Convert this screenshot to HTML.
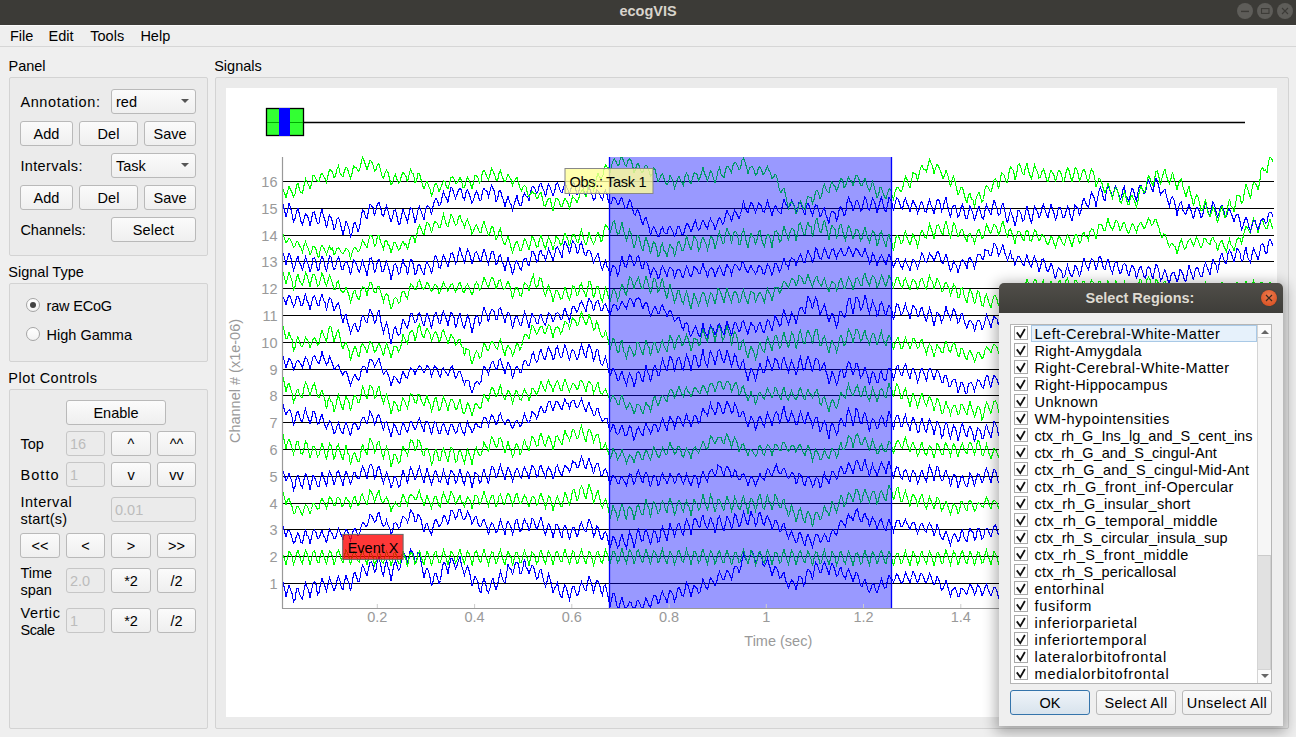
<!DOCTYPE html>
<html><head><meta charset="utf-8"><title>ecogVIS</title>
<style>
html,body{margin:0;padding:0;}
body{width:1296px;height:737px;overflow:hidden;position:relative;background:#efefef;font-family:"Liberation Sans", sans-serif;}
.t{position:absolute;white-space:nowrap;line-height:1;}
.tb{position:absolute;left:0;top:0;width:1296px;height:25px;background:#3c3b37;}
.mb{position:absolute;left:0;top:25px;width:1296px;height:22px;background:#efefef;border-top:1px solid #fafafa;border-bottom:1px solid #d6d6d6;box-sizing:border-box;}
.grp{position:absolute;box-sizing:border-box;border:1px solid #d3d3d3;border-radius:2px;background:#ebebeb;}
.btn{position:absolute;box-sizing:border-box;border:1px solid #b9b9b9;border-radius:3px;background:linear-gradient(#fbfbfb,#efefef);}
.fld{position:absolute;box-sizing:border-box;border:1px solid #c6c6c6;border-radius:3px;background:#ebebeb;}
.arr{position:absolute;width:0;height:0;border-left:5px solid transparent;border-right:5px solid transparent;border-top:5px solid #555;}
.wc{position:absolute;width:16px;height:16px;border-radius:50%;background:#5e5d59;top:3px;}
.radio{position:absolute;box-sizing:border-box;width:14px;height:14px;border-radius:50%;border:1px solid #a5a5a5;background:linear-gradient(#ffffff,#f3f3f3);}
</style></head><body>

<div class="tb"></div>
<div class="t" style="left:348.00px;width:600px;text-align:center;top:3.93px;font-size:14.5px;color:#d8d4cc;font-weight:bold;">ecogVIS</div>
<div class="wc" style="left:1237px"></div>
<div class="wc" style="left:1257px"></div>
<div class="wc" style="left:1277px"></div>
<svg style="position:absolute;left:0;top:0" width="1296" height="25"><line x1="1241" y1="11.4" x2="1249" y2="11.4" stroke="#3c3b37" stroke-width="1.4"/><rect x="1261.5" y="8.6" width="7.5" height="4.8" fill="none" stroke="#3c3b37" stroke-width="1.1"/><path d="M1282 8 L1288 14 M1288 8 L1282 14" stroke="#3c3b37" stroke-width="1.1"/></svg>
<div class="mb"></div>
<div class="t" style="left:10.00px;top:28.53px;font-size:14.5px;color:#000;font-weight:normal;">File</div>
<div class="t" style="left:48.60px;top:28.53px;font-size:14.5px;color:#000;font-weight:normal;">Edit</div>
<div class="t" style="left:90.30px;top:28.53px;font-size:14.5px;color:#000;font-weight:normal;">Tools</div>
<div class="t" style="left:140.40px;top:28.53px;font-size:14.5px;color:#000;font-weight:normal;">Help</div>
<div class="t" style="left:8.50px;top:58.73px;font-size:14.5px;color:#000;font-weight:normal;">Panel</div>
<div class="grp" style="left:9px;top:77px;width:199px;height:179px;"></div>
<div class="t" style="left:20.40px;top:94.73px;font-size:14.5px;color:#000;font-weight:normal;letter-spacing:0.62px;">Annotation:</div>
<div class="btn" style="left:111px;top:89px;width:85px;height:25px;"></div>
<div class="t" style="left:116.00px;top:95.33px;font-size:14.5px;color:#000;font-weight:normal;">red</div>
<div class="arr" style="left:180.5px;top:98.8px;border-left-width:4px;border-right-width:4px;border-top-width:4.3px;"></div>
<div class="btn" style="left:20px;top:121px;width:53px;height:25px;"></div>
<div class="t" style="left:-253.50px;width:600px;text-align:center;top:127.23px;font-size:14.5px;color:#000;font-weight:normal;">Add</div>
<div class="btn" style="left:79px;top:121px;width:59px;height:25px;"></div>
<div class="t" style="left:-191.50px;width:600px;text-align:center;top:127.23px;font-size:14.5px;color:#000;font-weight:normal;">Del</div>
<div class="btn" style="left:144px;top:121px;width:52px;height:25px;"></div>
<div class="t" style="left:-130.00px;width:600px;text-align:center;top:127.23px;font-size:14.5px;color:#000;font-weight:normal;">Save</div>
<div class="t" style="left:20.40px;top:158.63px;font-size:14.5px;color:#000;font-weight:normal;letter-spacing:0.36px;">Intervals:</div>
<div class="btn" style="left:111px;top:153px;width:85px;height:25px;"></div>
<div class="t" style="left:116.00px;top:159.33px;font-size:14.5px;color:#000;font-weight:normal;">Task</div>
<div class="arr" style="left:180.5px;top:162.8px;border-left-width:4px;border-right-width:4px;border-top-width:4.3px;"></div>
<div class="btn" style="left:20px;top:185px;width:53px;height:25px;"></div>
<div class="t" style="left:-253.50px;width:600px;text-align:center;top:191.23px;font-size:14.5px;color:#000;font-weight:normal;">Add</div>
<div class="btn" style="left:79px;top:185px;width:59px;height:25px;"></div>
<div class="t" style="left:-191.50px;width:600px;text-align:center;top:191.23px;font-size:14.5px;color:#000;font-weight:normal;">Del</div>
<div class="btn" style="left:144px;top:185px;width:52px;height:25px;"></div>
<div class="t" style="left:-130.00px;width:600px;text-align:center;top:191.23px;font-size:14.5px;color:#000;font-weight:normal;">Save</div>
<div class="t" style="left:20.40px;top:223.23px;font-size:14.5px;color:#000;font-weight:normal;">Channels:</div>
<div class="btn" style="left:111px;top:217px;width:85px;height:25px;"></div>
<div class="t" style="left:-146.50px;width:600px;text-align:center;top:223.23px;font-size:14.5px;color:#000;font-weight:normal;letter-spacing:0.24px;">Select</div>
<div class="t" style="left:8.30px;top:265.13px;font-size:14.5px;color:#000;font-weight:normal;">Signal Type</div>
<div class="grp" style="left:9px;top:283px;width:199px;height:79px;"></div>
<div class="radio" style="left:26px;top:298px"></div>
<div style="position:absolute;left:30px;top:302px;width:6px;height:6px;border-radius:50%;background:#444"></div>
<div class="t" style="left:46.60px;top:299.13px;font-size:14.5px;color:#000;font-weight:normal;letter-spacing:-0.20px;">raw ECoG</div>
<div class="radio" style="left:26px;top:327px"></div>
<div class="t" style="left:46.60px;top:328.13px;font-size:14.5px;color:#000;font-weight:normal;">High Gamma</div>
<div class="t" style="left:8.30px;top:370.63px;font-size:14.5px;color:#000;font-weight:normal;letter-spacing:0.47px;">Plot Controls</div>
<div class="grp" style="left:9px;top:389px;width:199px;height:340px;"></div>
<div class="btn" style="left:66px;top:400px;width:100px;height:25px;"></div>
<div class="t" style="left:-184.00px;width:600px;text-align:center;top:406.23px;font-size:14.5px;color:#000;font-weight:normal;">Enable</div>
<div class="t" style="left:20.40px;top:436.73px;font-size:14.5px;color:#000;font-weight:normal;">Top</div>
<div class="fld" style="left:66px;top:431px;width:39px;height:25px;"></div>
<div class="t" style="left:70.00px;top:437.03px;font-size:14.5px;color:#bcbcbc;font-weight:normal;">16</div>
<div class="btn" style="left:111px;top:431px;width:40px;height:25px;"></div>
<div class="t" style="left:-169.00px;width:600px;text-align:center;top:437.23px;font-size:14.5px;color:#000;font-weight:normal;">^</div>
<div class="btn" style="left:157px;top:431px;width:39px;height:25px;"></div>
<div class="t" style="left:-123.50px;width:600px;text-align:center;top:437.23px;font-size:14.5px;color:#000;font-weight:normal;">^^</div>
<div class="t" style="left:20.40px;top:468.13px;font-size:14.5px;color:#000;font-weight:normal;letter-spacing:1.11px;">Botto</div>
<div class="fld" style="left:66px;top:462px;width:39px;height:25px;"></div>
<div class="t" style="left:70.00px;top:468.03px;font-size:14.5px;color:#bcbcbc;font-weight:normal;">1</div>
<div class="btn" style="left:111px;top:462px;width:40px;height:25px;"></div>
<div class="t" style="left:-169.00px;width:600px;text-align:center;top:468.23px;font-size:14.5px;color:#000;font-weight:normal;">v</div>
<div class="btn" style="left:157px;top:462px;width:39px;height:25px;"></div>
<div class="t" style="left:-123.50px;width:600px;text-align:center;top:468.23px;font-size:14.5px;color:#000;font-weight:normal;">vv</div>
<div class="t" style="left:20.40px;top:494.73px;font-size:14.5px;color:#000;font-weight:normal;letter-spacing:0.54px;">Interval</div>
<div class="t" style="left:20.40px;top:511.83px;font-size:14.5px;color:#000;font-weight:normal;letter-spacing:0.24px;">start(s)</div>
<div class="fld" style="left:111px;top:497px;width:85px;height:25px;"></div>
<div class="t" style="left:115.00px;top:503.03px;font-size:14.5px;color:#bcbcbc;font-weight:normal;">0.01</div>
<div class="btn" style="left:20px;top:533px;width:40px;height:25px;"></div>
<div class="t" style="left:-260.00px;width:600px;text-align:center;top:539.23px;font-size:14.5px;color:#000;font-weight:normal;">&lt;&lt;</div>
<div class="btn" style="left:66px;top:533px;width:39px;height:25px;"></div>
<div class="t" style="left:-214.50px;width:600px;text-align:center;top:539.23px;font-size:14.5px;color:#000;font-weight:normal;">&lt;</div>
<div class="btn" style="left:111px;top:533px;width:40px;height:25px;"></div>
<div class="t" style="left:-169.00px;width:600px;text-align:center;top:539.23px;font-size:14.5px;color:#000;font-weight:normal;">&gt;</div>
<div class="btn" style="left:157px;top:533px;width:39px;height:25px;"></div>
<div class="t" style="left:-123.50px;width:600px;text-align:center;top:539.23px;font-size:14.5px;color:#000;font-weight:normal;">&gt;&gt;</div>
<div class="t" style="left:20.40px;top:565.53px;font-size:14.5px;color:#000;font-weight:normal;">Time</div>
<div class="t" style="left:20.40px;top:582.63px;font-size:14.5px;color:#000;font-weight:normal;">span</div>
<div class="fld" style="left:66px;top:568px;width:39px;height:25px;"></div>
<div class="t" style="left:70.00px;top:574.03px;font-size:14.5px;color:#bcbcbc;font-weight:normal;">2.0</div>
<div class="btn" style="left:111px;top:568px;width:40px;height:25px;"></div>
<div class="t" style="left:-169.00px;width:600px;text-align:center;top:574.23px;font-size:14.5px;color:#000;font-weight:normal;">*2</div>
<div class="btn" style="left:157px;top:568px;width:39px;height:25px;"></div>
<div class="t" style="left:-123.50px;width:600px;text-align:center;top:574.23px;font-size:14.5px;color:#000;font-weight:normal;">/2</div>
<div class="t" style="left:20.40px;top:606.23px;font-size:14.5px;color:#000;font-weight:normal;letter-spacing:0.67px;">Vertic</div>
<div class="t" style="left:20.40px;top:623.13px;font-size:14.5px;color:#000;font-weight:normal;letter-spacing:-0.42px;">Scale</div>
<div class="fld" style="left:66px;top:608px;width:39px;height:25px;"></div>
<div class="t" style="left:70.00px;top:614.03px;font-size:14.5px;color:#bcbcbc;font-weight:normal;">1</div>
<div class="btn" style="left:111px;top:608px;width:40px;height:25px;"></div>
<div class="t" style="left:-169.00px;width:600px;text-align:center;top:614.23px;font-size:14.5px;color:#000;font-weight:normal;">*2</div>
<div class="btn" style="left:157px;top:608px;width:39px;height:25px;"></div>
<div class="t" style="left:-123.50px;width:600px;text-align:center;top:614.23px;font-size:14.5px;color:#000;font-weight:normal;">/2</div>
<div class="t" style="left:214.20px;top:59.13px;font-size:14.5px;color:#000;font-weight:normal;">Signals</div>
<div class="grp" style="left:215px;top:77px;width:1074px;height:652px;"></div>
<svg style="position:absolute;left:0;top:0" width="1296" height="737">
<rect x="226" y="88" width="1051" height="629" fill="#ffffff"/>
<line x1="303" y1="122.5" x2="1245" y2="122.5" stroke="#000" stroke-width="1.3"/>
<rect x="266.5" y="108.5" width="37" height="27" fill="#33ff33" stroke="#000" stroke-width="1.3"/>
<line x1="267" y1="122.5" x2="279" y2="122.5" stroke="#00aa00" stroke-width="1"/>
<line x1="290" y1="122.5" x2="303" y2="122.5" stroke="#00aa00" stroke-width="1"/>
<rect x="279" y="108" width="11" height="28" fill="#0000ff"/>
<line x1="282.5" y1="583.50" x2="1274.0" y2="583.50" stroke="#000" stroke-width="1.0" shape-rendering="crispEdges"/>
<line x1="282.5" y1="556.50" x2="1274.0" y2="556.50" stroke="#000" stroke-width="1.0" shape-rendering="crispEdges"/>
<line x1="282.5" y1="529.50" x2="1274.0" y2="529.50" stroke="#000" stroke-width="1.0" shape-rendering="crispEdges"/>
<line x1="282.5" y1="503.50" x2="1274.0" y2="503.50" stroke="#000" stroke-width="1.0" shape-rendering="crispEdges"/>
<line x1="282.5" y1="476.50" x2="1274.0" y2="476.50" stroke="#000" stroke-width="1.0" shape-rendering="crispEdges"/>
<line x1="282.5" y1="449.50" x2="1274.0" y2="449.50" stroke="#000" stroke-width="1.0" shape-rendering="crispEdges"/>
<line x1="282.5" y1="422.50" x2="1274.0" y2="422.50" stroke="#000" stroke-width="1.0" shape-rendering="crispEdges"/>
<line x1="282.5" y1="395.50" x2="1274.0" y2="395.50" stroke="#000" stroke-width="1.0" shape-rendering="crispEdges"/>
<line x1="282.5" y1="369.50" x2="1274.0" y2="369.50" stroke="#000" stroke-width="1.0" shape-rendering="crispEdges"/>
<line x1="282.5" y1="342.50" x2="1274.0" y2="342.50" stroke="#000" stroke-width="1.0" shape-rendering="crispEdges"/>
<line x1="282.5" y1="315.50" x2="1274.0" y2="315.50" stroke="#000" stroke-width="1.0" shape-rendering="crispEdges"/>
<line x1="282.5" y1="288.50" x2="1274.0" y2="288.50" stroke="#000" stroke-width="1.0" shape-rendering="crispEdges"/>
<line x1="282.5" y1="261.50" x2="1274.0" y2="261.50" stroke="#000" stroke-width="1.0" shape-rendering="crispEdges"/>
<line x1="282.5" y1="235.50" x2="1274.0" y2="235.50" stroke="#000" stroke-width="1.0" shape-rendering="crispEdges"/>
<line x1="282.5" y1="208.50" x2="1274.0" y2="208.50" stroke="#000" stroke-width="1.0" shape-rendering="crispEdges"/>
<line x1="282.5" y1="181.50" x2="1274.0" y2="181.50" stroke="#000" stroke-width="1.0" shape-rendering="crispEdges"/>
<path d="M283.0 582.5 L284.5 588.1 L286.0 596.7 L287.5 590.8 L289.0 585.1 L290.5 589.6 L292.0 593.2 L293.5 601.7 L295.0 599.4 L296.5 588.8 L298.0 588.4 L299.5 593.6 L301.0 597.0 L302.5 599.2 L304.0 590.0 L305.5 583.0 L307.0 587.2 L308.5 589.7 L310.0 597.4 L311.5 590.5 L313.0 583.2 L314.5 581.5 L316.0 584.6 L317.5 594.7 L319.0 592.5 L320.5 583.7 L322.0 578.4 L323.5 583.1 L325.0 586.3 L326.5 591.2 L328.0 584.5 L329.5 577.7 L331.0 581.8 L332.5 586.4 L334.0 590.7 L335.5 587.6 L337.0 580.6 L338.5 576.3 L340.0 581.0 L341.5 588.1 L343.0 589.5 L344.5 581.4 L346.0 575.5 L347.5 579.6 L349.0 584.0 L350.5 590.8 L352.0 583.3 L353.5 574.4 L355.0 572.2 L356.5 576.8 L358.0 581.7 L359.5 581.2 L361.0 572.0 L362.5 564.8 L364.0 567.8 L365.5 572.5 L367.0 576.0 L368.5 568.6 L370.0 562.4 L371.5 561.8 L373.0 565.5 L374.5 572.3 L376.0 570.0 L377.5 559.6 L379.0 557.5 L380.5 563.8 L382.0 572.2 L383.5 575.6 L385.0 566.4 L386.5 559.9 L388.0 566.9 L389.5 571.0 L391.0 581.0 L392.5 572.6 L394.0 564.4 L395.5 560.6 L397.0 565.7 L398.5 570.3 L400.0 568.1 L401.5 559.5 L403.0 551.7 L404.5 554.3 L406.0 557.1 L407.5 561.8 L409.0 557.0 L410.5 548.9 L412.0 551.7 L413.5 553.7 L415.0 562.3 L416.5 561.3 L418.0 552.4 L419.5 552.1 L421.0 561.4 L422.5 569.7 L424.0 577.7 L425.5 571.3 L427.0 568.0 L428.5 570.7 L430.0 577.5 L431.5 586.2 L433.0 581.5 L434.5 573.2 L436.0 573.7 L437.5 577.9 L439.0 583.4 L440.5 580.5 L442.0 569.6 L443.5 562.4 L445.0 563.6 L446.5 567.3 L448.0 574.3 L449.5 564.8 L451.0 558.4 L452.5 559.0 L454.0 563.3 L455.5 569.1 L457.0 565.5 L458.5 560.3 L460.0 555.9 L461.5 565.6 L463.0 570.1 L464.5 574.8 L466.0 570.1 L467.5 566.3 L469.0 570.2 L470.5 576.8 L472.0 586.1 L473.5 581.4 L475.0 576.4 L476.5 578.7 L478.0 582.5 L479.5 591.6 L481.0 592.3 L482.5 583.2 L484.0 578.6 L485.5 582.9 L487.0 590.3 L488.5 592.9 L490.0 587.9 L491.5 580.9 L493.0 578.0 L494.5 584.4 L496.0 589.9 L497.5 585.1 L499.0 577.6 L500.5 571.5 L502.0 576.9 L503.5 581.6 L505.0 582.5 L506.5 574.9 L508.0 563.8 L509.5 568.8 L511.0 569.1 L512.5 574.9 L514.0 568.9 L515.5 562.3 L517.0 562.4 L518.5 564.2 L520.0 573.6 L521.5 573.4 L523.0 567.1 L524.5 558.8 L526.0 567.2 L527.5 568.8 L529.0 574.2 L530.5 569.1 L532.0 565.6 L533.5 566.3 L535.0 572.6 L536.5 579.4 L538.0 577.7 L539.5 570.6 L541.0 569.2 L542.5 575.7 L544.0 581.9 L545.5 586.5 L547.0 581.4 L548.5 574.1 L550.0 578.9 L551.5 584.5 L553.0 593.2 L554.5 588.6 L556.0 585.8 L557.5 582.3 L559.0 590.9 L560.5 596.2 L562.0 597.7 L563.5 588.9 L565.0 584.7 L566.5 588.4 L568.0 594.6 L569.5 599.6 L571.0 593.1 L572.5 586.4 L574.0 586.2 L575.5 591.9 L577.0 595.4 L578.5 594.4 L580.0 585.9 L581.5 581.7 L583.0 585.2 L584.5 589.4 L586.0 591.0 L587.5 583.1 L589.0 576.2 L590.5 580.6 L592.0 585.3 L593.5 593.4 L595.0 586.8 L596.5 580.3 L598.0 581.3 L599.5 584.2 L601.0 591.6 L602.5 595.1 L604.0 586.1 L605.5 585.0 L607.0 592.1 L608.5 598.7 L610.0 606.7 L611.5 599.8 L613.0 593.3 L614.5 593.5 L616.0 601.2 L617.5 608.0 L619.0 607.3 L620.5 601.4 L622.0 597.4 L623.5 603.7 L625.0 608.0 L626.5 608.0 L628.0 605.4 L629.5 601.8 L631.0 602.7 L632.5 607.6 L634.0 608.0 L635.5 608.0 L637.0 601.0 L638.5 600.5 L640.0 604.2 L641.5 608.0 L643.0 608.0 L644.5 602.8 L646.0 597.7 L647.5 601.6 L649.0 605.4 L650.5 608.0 L652.0 601.2 L653.5 596.2 L655.0 595.1 L656.5 596.9 L658.0 603.6 L659.5 601.7 L661.0 595.1 L662.5 591.5 L664.0 595.9 L665.5 597.5 L667.0 603.2 L668.5 595.4 L670.0 590.2 L671.5 591.8 L673.0 595.1 L674.5 601.8 L676.0 597.3 L677.5 589.5 L679.0 587.1 L680.5 590.9 L682.0 595.5 L683.5 596.3 L685.0 589.4 L686.5 582.5 L688.0 585.6 L689.5 590.5 L691.0 597.1 L692.5 590.3 L694.0 585.3 L695.5 586.9 L697.0 588.4 L698.5 593.5 L700.0 592.3 L701.5 585.0 L703.0 578.8 L704.5 583.5 L706.0 587.5 L707.5 589.5 L709.0 583.2 L710.5 578.0 L712.0 580.0 L713.5 581.9 L715.0 585.6 L716.5 583.1 L718.0 575.3 L719.5 571.7 L721.0 575.1 L722.5 579.6 L724.0 579.7 L725.5 575.1 L727.0 569.8 L728.5 572.0 L730.0 575.3 L731.5 579.6 L733.0 572.9 L734.5 566.8 L736.0 566.1 L737.5 567.5 L739.0 572.4 L740.5 569.2 L742.0 560.6 L743.5 553.6 L745.0 557.6 L746.5 560.1 L748.0 562.8 L749.5 557.9 L751.0 550.1 L752.5 551.2 L754.0 556.5 L755.5 562.1 L757.0 560.3 L758.5 554.1 L760.0 552.0 L761.5 555.6 L763.0 564.6 L764.5 565.8 L766.0 562.9 L767.5 558.3 L769.0 564.6 L770.5 569.2 L772.0 576.3 L773.5 571.0 L775.0 566.5 L776.5 567.8 L778.0 571.5 L779.5 578.0 L781.0 577.9 L782.5 574.2 L784.0 571.8 L785.5 580.7 L787.0 583.6 L788.5 587.9 L790.0 584.2 L791.5 580.1 L793.0 581.4 L794.5 584.3 L796.0 589.9 L797.5 583.5 L799.0 576.5 L800.5 576.4 L802.0 578.4 L803.5 585.4 L805.0 582.4 L806.5 572.8 L808.0 569.2 L809.5 570.6 L811.0 573.4 L812.5 580.3 L814.0 571.2 L815.5 562.2 L817.0 564.3 L818.5 568.6 L820.0 572.6 L821.5 572.0 L823.0 565.1 L824.5 561.9 L826.0 566.0 L827.5 569.4 L829.0 575.0 L830.5 567.5 L832.0 563.1 L833.5 565.7 L835.0 570.3 L836.5 576.5 L838.0 574.9 L839.5 568.9 L841.0 567.7 L842.5 574.0 L844.0 576.7 L845.5 578.9 L847.0 572.0 L848.5 569.5 L850.0 572.8 L851.5 576.7 L853.0 582.1 L854.5 576.9 L856.0 572.5 L857.5 573.4 L859.0 579.1 L860.5 585.7 L862.0 587.2 L863.5 582.1 L865.0 579.5 L866.5 584.2 L868.0 590.0 L869.5 592.3 L871.0 588.7 L872.5 583.6 L874.0 584.5 L875.5 589.9 L877.0 592.9 L878.5 588.3 L880.0 583.5 L881.5 578.8 L883.0 584.5 L884.5 588.2 L886.0 587.5 L887.5 580.4 L889.0 575.6 L890.5 577.9 L892.0 579.1 L893.5 582.0 L895.0 579.3 L896.5 573.5 L898.0 575.6 L899.5 579.6 L901.0 582.6 L902.5 583.2 L904.0 578.3 L905.5 572.4 L907.0 576.1 L908.5 579.4 L910.0 582.8 L911.5 577.5 L913.0 570.9 L914.5 574.0 L916.0 578.9 L917.5 582.5 L919.0 579.8 L920.5 573.6 L922.0 573.9 L923.5 576.7 L925.0 581.6 L926.5 582.6 L928.0 578.5 L929.5 573.2 L931.0 576.6 L932.5 581.4 L934.0 585.0 L935.5 582.2 L937.0 576.6 L938.5 578.7 L940.0 583.8 L941.5 590.5 L943.0 588.6 L944.5 584.9 L946.0 580.0 L947.5 585.5 L949.0 590.7 L950.5 596.2 L952.0 590.5 L953.5 588.9 L955.0 587.5 L956.5 591.3 L958.0 596.2 L959.5 596.1 L961.0 588.8 L962.5 588.9 L964.0 589.9 L965.5 593.0 L967.0 594.2 L968.5 588.3 L970.0 583.8 L971.5 586.2 L973.0 589.6 L974.5 594.6 L976.0 591.3 L977.5 584.7 L979.0 586.3 L980.5 588.8 L982.0 596.0 L983.5 592.6 L985.0 587.5 L986.5 584.0 L988.0 589.0 L989.5 592.7 L991.0 596.0 L992.5 591.5 L994.0 587.6 L995.5 587.7 L997.0 591.2 L998.5 597.3 L1000.0 593.1 L1001.5 587.5 L1003.0 583.8 L1004.5 586.7 L1006.0 590.9 L1007.5 592.9 L1009.0 588.3 L1010.5 582.6 L1012.0 585.6 L1013.5 588.1 L1015.0 593.7 L1016.5 588.3 L1018.0 578.0 L1019.5 581.7 L1021.0 584.8 L1022.5 590.3 L1024.0 587.0 L1025.5 581.9 L1027.0 577.6 L1028.5 581.2 L1030.0 585.8 L1031.5 588.6 L1033.0 584.7 L1034.5 579.3 L1036.0 578.0 L1037.5 585.6 L1039.0 587.1 L1040.5 584.9 L1042.0 581.4 L1043.5 579.1 L1045.0 584.9 L1046.5 584.5 L1048.0 589.8 L1049.5 584.4 L1051.0 578.9 L1052.5 581.4 L1054.0 586.1 L1055.5 592.0 L1057.0 587.5 L1058.5 584.8 L1060.0 583.9 L1061.5 586.3 L1063.0 589.9 L1064.5 590.9 L1066.0 585.7 L1067.5 580.5 L1069.0 584.5 L1070.5 586.5 L1072.0 588.9 L1073.5 582.5 L1075.0 579.2 L1076.5 581.0 L1078.0 580.3 L1079.5 586.2 L1081.0 582.4 L1082.5 577.5 L1084.0 574.0 L1085.5 577.2 L1087.0 582.2 L1088.5 585.3 L1090.0 578.4 L1091.5 571.8 L1093.0 575.4 L1094.5 579.3 L1096.0 583.9 L1097.5 579.2 L1099.0 574.2 L1100.5 572.6 L1102.0 579.1 L1103.5 584.4 L1105.0 583.9 L1106.5 577.0 L1108.0 575.5 L1109.5 576.9 L1111.0 582.0 L1112.5 586.6 L1114.0 580.2 L1115.5 575.8 L1117.0 576.9 L1118.5 584.0 L1120.0 588.7 L1121.5 587.2 L1123.0 582.1 L1124.5 577.6 L1126.0 582.9 L1127.5 587.0 L1129.0 588.8 L1130.5 586.1 L1132.0 580.4 L1133.5 582.3 L1135.0 582.9 L1136.5 592.3 L1138.0 589.5 L1139.5 582.4 L1141.0 583.8 L1142.5 585.8 L1144.0 591.2 L1145.5 588.9 L1147.0 580.9 L1148.5 577.2 L1150.0 578.3 L1151.5 582.7 L1153.0 587.0 L1154.5 583.2 L1156.0 578.6 L1157.5 577.0 L1159.0 580.8 L1160.5 588.6 L1162.0 582.9 L1163.5 577.5 L1165.0 573.4 L1166.5 578.4 L1168.0 583.8 L1169.5 587.7 L1171.0 581.8 L1172.5 576.5 L1174.0 580.2 L1175.5 582.7 L1177.0 589.1 L1178.5 583.5 L1180.0 579.1 L1181.5 578.4 L1183.0 582.6 L1184.5 585.6 L1186.0 586.9 L1187.5 580.8 L1189.0 578.6 L1190.5 582.5 L1192.0 586.2 L1193.5 589.8 L1195.0 586.5 L1196.5 577.7 L1198.0 580.1 L1199.5 582.4 L1201.0 588.2 L1202.5 585.3 L1204.0 580.4 L1205.5 579.2 L1207.0 580.9 L1208.5 583.9 L1210.0 589.3 L1211.5 582.6 L1213.0 577.2 L1214.5 580.3 L1216.0 583.5 L1217.5 588.7 L1219.0 584.5 L1220.5 577.7 L1222.0 577.0 L1223.5 583.6 L1225.0 589.5 L1226.5 588.4 L1228.0 580.2 L1229.5 579.3 L1231.0 580.8 L1232.5 586.5 L1234.0 588.9 L1235.5 583.8 L1237.0 576.7 L1238.5 580.5 L1240.0 581.9 L1241.5 587.1 L1243.0 586.3 L1244.5 579.2 L1246.0 575.4 L1247.5 577.1 L1249.0 581.7 L1250.5 584.2 L1252.0 578.8 L1253.5 571.5 L1255.0 574.9 L1256.5 579.2 L1258.0 586.2 L1259.5 583.9 L1261.0 578.0 L1262.5 574.9 L1264.0 580.5 L1265.5 586.5 L1267.0 588.7 L1268.5 581.5 L1270.0 579.5 L1271.5 583.1 L1273.0 586.2" fill="none" stroke="#0000ff" stroke-width="1.1" shape-rendering="crispEdges"/>
<path d="M283.0 554.9 L284.5 558.9 L286.0 564.6 L287.5 557.8 L289.0 551.7 L290.5 553.0 L292.0 557.1 L293.5 564.2 L295.0 560.3 L296.5 553.4 L298.0 550.3 L299.5 555.7 L301.0 560.8 L302.5 563.5 L304.0 555.6 L305.5 550.6 L307.0 553.3 L308.5 558.1 L310.0 564.7 L311.5 559.4 L313.0 552.1 L314.5 550.8 L316.0 556.1 L317.5 562.9 L319.0 562.3 L320.5 554.8 L322.0 550.2 L323.5 555.2 L325.0 559.3 L326.5 564.6 L328.0 557.5 L329.5 551.0 L331.0 552.6 L332.5 557.1 L334.0 564.4 L335.5 561.0 L337.0 552.7 L338.5 550.1 L340.0 554.5 L341.5 560.2 L343.0 562.6 L344.5 555.5 L346.0 549.7 L347.5 552.7 L349.0 557.4 L350.5 565.0 L352.0 557.8 L353.5 552.0 L355.0 551.9 L356.5 556.5 L358.0 561.2 L359.5 562.1 L361.0 554.4 L362.5 550.1 L364.0 554.8 L365.5 559.6 L367.0 564.9 L368.5 558.2 L370.0 552.3 L371.5 553.3 L373.0 557.7 L374.5 565.1 L376.0 561.4 L377.5 554.0 L379.0 551.2 L380.5 555.9 L382.0 561.9 L383.5 563.3 L385.0 556.9 L386.5 551.3 L388.0 555.1 L389.5 558.3 L391.0 566.0 L392.5 560.6 L394.0 552.9 L395.5 552.6 L397.0 557.6 L398.5 563.4 L400.0 563.3 L401.5 556.0 L403.0 551.7 L404.5 555.8 L406.0 560.0 L407.5 566.4 L409.0 558.6 L410.5 552.4 L412.0 553.3 L413.5 557.5 L415.0 564.2 L416.5 561.9 L418.0 553.9 L419.5 550.8 L421.0 556.4 L422.5 561.3 L424.0 564.5 L425.5 556.9 L427.0 551.0 L428.5 555.0 L430.0 558.7 L431.5 566.1 L433.0 559.9 L434.5 552.3 L436.0 551.6 L437.5 557.5 L439.0 562.3 L440.5 562.6 L442.0 555.3 L443.5 550.1 L445.0 554.6 L446.5 559.8 L448.0 564.7 L449.5 557.8 L451.0 551.7 L452.5 552.8 L454.0 556.9 L455.5 562.6 L457.0 560.0 L458.5 552.8 L460.0 549.7 L461.5 555.2 L463.0 559.6 L464.5 563.8 L466.0 556.0 L467.5 550.8 L469.0 553.7 L470.5 557.2 L472.0 565.4 L473.5 559.4 L475.0 552.4 L476.5 550.9 L478.0 555.4 L479.5 561.8 L481.0 562.1 L482.5 554.8 L484.0 549.4 L485.5 554.4 L487.0 559.6 L488.5 564.7 L490.0 558.3 L491.5 551.9 L493.0 552.3 L494.5 557.7 L496.0 563.3 L497.5 561.1 L499.0 553.7 L500.5 549.9 L502.0 555.5 L503.5 561.5 L505.0 564.5 L506.5 556.7 L508.0 550.9 L509.5 554.7 L511.0 557.7 L512.5 565.6 L514.0 559.7 L515.5 552.8 L517.0 552.1 L518.5 556.1 L520.0 562.4 L521.5 562.3 L523.0 555.2 L524.5 550.6 L526.0 555.0 L527.5 558.8 L529.0 565.4 L530.5 557.8 L532.0 551.8 L533.5 553.3 L535.0 557.4 L536.5 563.7 L538.0 561.3 L539.5 553.3 L541.0 549.8 L542.5 555.6 L544.0 560.7 L545.5 564.0 L547.0 556.2 L548.5 551.0 L550.0 554.0 L551.5 558.0 L553.0 564.5 L554.5 559.6 L556.0 552.3 L557.5 551.3 L559.0 555.8 L560.5 561.9 L562.0 561.9 L563.5 554.2 L565.0 549.3 L566.5 554.6 L568.0 558.9 L569.5 565.0 L571.0 558.6 L572.5 550.9 L574.0 552.1 L575.5 557.8 L577.0 564.0 L578.5 561.6 L580.0 553.8 L581.5 549.5 L583.0 554.9 L584.5 560.3 L586.0 563.5 L587.5 556.6 L589.0 551.4 L590.5 553.3 L592.0 558.4 L593.5 565.1 L595.0 560.2 L596.5 552.4 L598.0 551.1 L599.5 556.2 L601.0 561.7 L602.5 562.9 L604.0 555.5 L605.5 549.7 L607.0 553.5 L608.5 559.0 L610.0 564.1 L611.5 557.0 L613.0 551.2 L614.5 551.8 L616.0 556.5 L617.5 562.8 L619.0 560.7 L620.5 553.7 L622.0 548.5 L623.5 554.4 L625.0 559.3 L626.5 563.5 L628.0 555.6 L629.5 549.6 L631.0 552.2 L632.5 556.5 L634.0 564.2 L635.5 559.2 L637.0 551.8 L638.5 550.1 L640.0 555.5 L641.5 560.8 L643.0 562.2 L644.5 554.9 L646.0 549.6 L647.5 554.2 L649.0 558.3 L650.5 564.7 L652.0 557.4 L653.5 551.1 L655.0 552.0 L656.5 555.6 L658.0 562.9 L659.5 560.8 L661.0 553.7 L662.5 549.0 L664.0 555.5 L665.5 560.4 L667.0 563.7 L668.5 557.0 L670.0 550.9 L671.5 553.7 L673.0 558.0 L674.5 564.6 L676.0 559.9 L677.5 552.5 L679.0 550.0 L680.5 555.4 L682.0 560.9 L683.5 562.4 L685.0 554.9 L686.5 549.3 L688.0 554.6 L689.5 557.9 L691.0 564.4 L692.5 557.7 L694.0 551.3 L695.5 552.1 L697.0 556.5 L698.5 562.8 L700.0 561.1 L701.5 552.9 L703.0 549.1 L704.5 555.2 L706.0 559.5 L707.5 564.0 L709.0 556.8 L710.5 550.9 L712.0 553.0 L713.5 557.4 L715.0 564.3 L716.5 559.9 L718.0 553.3 L719.5 550.7 L721.0 556.2 L722.5 562.1 L724.0 562.7 L725.5 555.6 L727.0 549.9 L728.5 554.9 L730.0 558.5 L731.5 565.2 L733.0 559.6 L734.5 552.6 L736.0 552.2 L737.5 556.6 L739.0 562.4 L740.5 561.7 L742.0 553.9 L743.5 549.3 L745.0 555.2 L746.5 559.8 L748.0 563.9 L749.5 557.1 L751.0 550.5 L752.5 553.2 L754.0 557.5 L755.5 564.9 L757.0 560.5 L758.5 553.1 L760.0 551.1 L761.5 555.6 L763.0 561.1 L764.5 563.0 L766.0 554.9 L767.5 550.2 L769.0 554.1 L770.5 558.2 L772.0 564.8 L773.5 558.2 L775.0 552.0 L776.5 552.4 L778.0 556.1 L779.5 563.0 L781.0 562.2 L782.5 554.1 L784.0 549.3 L785.5 555.2 L787.0 560.1 L788.5 564.5 L790.0 557.5 L791.5 550.4 L793.0 553.2 L794.5 557.8 L796.0 565.0 L797.5 560.1 L799.0 552.9 L800.5 550.8 L802.0 555.9 L803.5 560.8 L805.0 562.6 L806.5 556.1 L808.0 550.8 L809.5 555.0 L811.0 559.1 L812.5 565.7 L814.0 558.8 L815.5 551.9 L817.0 552.6 L818.5 557.0 L820.0 563.5 L821.5 562.9 L823.0 554.8 L824.5 550.0 L826.0 555.9 L827.5 560.2 L829.0 564.7 L830.5 558.3 L832.0 551.7 L833.5 553.7 L835.0 557.6 L836.5 565.0 L838.0 560.9 L839.5 553.7 L841.0 550.9 L842.5 555.9 L844.0 561.5 L845.5 563.8 L847.0 556.1 L848.5 551.3 L850.0 555.2 L851.5 559.7 L853.0 565.7 L854.5 559.2 L856.0 553.4 L857.5 552.8 L859.0 557.3 L860.5 564.3 L862.0 562.9 L863.5 555.1 L865.0 550.4 L866.5 556.2 L868.0 560.4 L869.5 564.9 L871.0 557.8 L872.5 551.8 L874.0 554.3 L875.5 557.7 L877.0 564.0 L878.5 560.6 L880.0 552.8 L881.5 551.2 L883.0 555.4 L884.5 561.7 L886.0 563.6 L887.5 555.9 L889.0 550.9 L890.5 555.1 L892.0 559.1 L893.5 565.8 L895.0 559.0 L896.5 553.3 L898.0 553.3 L899.5 557.4 L901.0 563.7 L902.5 562.6 L904.0 555.3 L905.5 551.1 L907.0 556.0 L908.5 560.9 L910.0 565.6 L911.5 557.9 L913.0 551.2 L914.5 554.0 L916.0 558.0 L917.5 564.4 L919.0 561.6 L920.5 553.7 L922.0 551.2 L923.5 556.5 L925.0 560.8 L926.5 563.9 L928.0 556.9 L929.5 551.3 L931.0 554.7 L932.5 559.5 L934.0 565.5 L935.5 560.0 L937.0 552.9 L938.5 552.8 L940.0 557.4 L941.5 563.5 L943.0 563.0 L944.5 555.2 L946.0 549.8 L947.5 555.4 L949.0 559.9 L950.5 564.8 L952.0 558.2 L953.5 551.1 L955.0 553.3 L956.5 557.7 L958.0 564.4 L959.5 561.3 L961.0 553.3 L962.5 550.8 L964.0 555.6 L965.5 561.8 L967.0 564.1 L968.5 556.9 L970.0 551.2 L971.5 554.5 L973.0 559.0 L974.5 565.9 L976.0 559.7 L977.5 552.0 L979.0 552.2 L980.5 557.3 L982.0 563.2 L983.5 562.1 L985.0 554.7 L986.5 549.9 L988.0 555.3 L989.5 560.0 L991.0 564.8 L992.5 557.5 L994.0 551.3 L995.5 553.5 L997.0 557.6 L998.5 563.6 L1000.0 560.1 L1001.5 553.0 L1003.0 549.9 L1004.5 555.7 L1006.0 560.8 L1007.5 563.3 L1009.0 554.9 L1010.5 550.5 L1012.0 553.5 L1013.5 557.5 L1015.0 564.5 L1016.5 558.5 L1018.0 551.8 L1019.5 551.5 L1021.0 556.0 L1022.5 561.7 L1024.0 561.6 L1025.5 554.3 L1027.0 548.9 L1028.5 554.4 L1030.0 558.4 L1031.5 563.0 L1033.0 555.7 L1034.5 550.5 L1036.0 552.6 L1037.5 557.4 L1039.0 563.6 L1040.5 560.8 L1042.0 553.4 L1043.5 551.2 L1045.0 556.4 L1046.5 561.1 L1048.0 564.1 L1049.5 557.0 L1051.0 551.6 L1052.5 555.8 L1054.0 558.9 L1055.5 566.3 L1057.0 560.1 L1058.5 552.6 L1060.0 552.1 L1061.5 556.5 L1063.0 562.9 L1064.5 561.8 L1066.0 554.3 L1067.5 549.2 L1069.0 553.3 L1070.5 557.8 L1072.0 562.6 L1073.5 556.5 L1075.0 549.2 L1076.5 551.4 L1078.0 555.8 L1079.5 561.3 L1081.0 558.2 L1082.5 550.4 L1084.0 546.7 L1085.5 552.4 L1087.0 557.2 L1088.5 560.2 L1090.0 552.8 L1091.5 547.0 L1093.0 550.0 L1094.5 554.4 L1096.0 561.3 L1097.5 555.7 L1099.0 549.0 L1100.5 548.7 L1102.0 554.2 L1103.5 560.1 L1105.0 560.1 L1106.5 552.5 L1108.0 548.3 L1109.5 552.8 L1111.0 558.5 L1112.5 562.7 L1114.0 557.0 L1115.5 550.3 L1117.0 552.5 L1118.5 556.6 L1120.0 563.5 L1121.5 561.3 L1123.0 554.4 L1124.5 551.6 L1126.0 556.8 L1127.5 561.7 L1129.0 564.5 L1130.5 557.5 L1132.0 552.1 L1133.5 555.3 L1135.0 559.5 L1136.5 566.7 L1138.0 560.5 L1139.5 553.4 L1141.0 552.1 L1142.5 555.6 L1144.0 561.7 L1145.5 561.2 L1147.0 554.2 L1148.5 548.4 L1150.0 552.5 L1151.5 557.4 L1153.0 562.3 L1154.5 555.3 L1156.0 549.1 L1157.5 550.9 L1159.0 554.5 L1160.5 561.3 L1162.0 559.3 L1163.5 551.2 L1165.0 548.5 L1166.5 554.3 L1168.0 558.9 L1169.5 562.7 L1171.0 555.9 L1172.5 549.6 L1174.0 553.0 L1175.5 557.6 L1177.0 565.4 L1178.5 559.3 L1180.0 552.6 L1181.5 550.9 L1183.0 556.0 L1184.5 562.2 L1186.0 562.9 L1187.5 554.8 L1189.0 550.0 L1190.5 555.3 L1192.0 559.7 L1193.5 565.3 L1195.0 559.1 L1196.5 552.5 L1198.0 553.2 L1199.5 556.6 L1201.0 563.4 L1202.5 560.7 L1204.0 552.9 L1205.5 549.2 L1207.0 554.0 L1208.5 558.9 L1210.0 561.8 L1211.5 555.0 L1213.0 549.1 L1214.5 552.1 L1216.0 556.1 L1217.5 562.5 L1219.0 557.2 L1220.5 551.4 L1222.0 549.6 L1223.5 555.6 L1225.0 560.8 L1226.5 561.6 L1228.0 554.4 L1229.5 548.6 L1231.0 554.2 L1232.5 558.0 L1234.0 564.2 L1235.5 557.0 L1237.0 549.8 L1238.5 550.8 L1240.0 554.9 L1241.5 561.7 L1243.0 559.5 L1244.5 552.1 L1246.0 547.6 L1247.5 552.8 L1249.0 558.1 L1250.5 561.4 L1252.0 553.2 L1253.5 548.5 L1255.0 551.3 L1256.5 555.8 L1258.0 563.0 L1259.5 557.2 L1261.0 549.5 L1262.5 549.5 L1264.0 554.1 L1265.5 560.5 L1267.0 561.4 L1268.5 554.0 L1270.0 549.2 L1271.5 554.2 L1273.0 558.8" fill="none" stroke="#00ff00" stroke-width="1.1" shape-rendering="crispEdges"/>
<path d="M283.0 526.6 L284.5 531.9 L286.0 536.5 L287.5 531.1 L289.0 530.3 L290.5 532.9 L292.0 538.2 L293.5 543.4 L295.0 541.3 L296.5 536.0 L298.0 532.7 L299.5 536.7 L301.0 542.8 L302.5 543.1 L304.0 535.6 L305.5 529.2 L307.0 535.2 L308.5 536.4 L310.0 543.5 L311.5 537.2 L313.0 531.2 L314.5 529.9 L316.0 532.7 L317.5 538.7 L319.0 537.9 L320.5 534.2 L322.0 529.9 L323.5 536.1 L325.0 537.9 L326.5 543.0 L328.0 535.6 L329.5 529.5 L331.0 532.0 L332.5 534.3 L334.0 538.6 L335.5 538.6 L337.0 532.9 L338.5 528.7 L340.0 531.9 L341.5 535.9 L343.0 539.9 L344.5 533.7 L346.0 529.1 L347.5 531.0 L349.0 536.0 L350.5 540.3 L352.0 534.9 L353.5 529.7 L355.0 528.6 L356.5 531.5 L358.0 535.8 L359.5 534.6 L361.0 527.0 L362.5 522.4 L364.0 523.3 L365.5 526.1 L367.0 526.0 L368.5 521.3 L370.0 514.4 L371.5 515.4 L373.0 518.7 L374.5 522.0 L376.0 520.4 L377.5 514.5 L379.0 512.1 L380.5 518.6 L382.0 523.4 L383.5 526.3 L385.0 525.0 L386.5 520.2 L388.0 524.9 L389.5 527.7 L391.0 535.0 L392.5 531.0 L394.0 523.6 L395.5 522.5 L397.0 524.5 L398.5 528.5 L400.0 527.1 L401.5 520.7 L403.0 516.1 L404.5 517.2 L406.0 519.1 L407.5 522.3 L409.0 518.2 L410.5 509.6 L412.0 511.9 L413.5 514.1 L415.0 521.3 L416.5 521.4 L418.0 514.6 L419.5 515.6 L421.0 519.4 L422.5 527.0 L424.0 532.3 L425.5 524.8 L427.0 523.0 L428.5 527.5 L430.0 531.4 L431.5 534.9 L433.0 527.5 L434.5 521.7 L436.0 518.9 L437.5 522.4 L439.0 526.9 L440.5 525.2 L442.0 522.2 L443.5 515.4 L445.0 516.3 L446.5 520.6 L448.0 524.3 L449.5 518.4 L451.0 510.4 L452.5 510.5 L454.0 514.2 L455.5 519.0 L457.0 516.3 L458.5 510.1 L460.0 509.5 L461.5 514.1 L463.0 519.2 L464.5 519.3 L466.0 516.4 L467.5 511.1 L469.0 514.4 L470.5 517.5 L472.0 524.3 L473.5 520.7 L475.0 517.0 L476.5 516.6 L478.0 523.6 L479.5 526.3 L481.0 526.2 L482.5 521.4 L484.0 518.8 L485.5 523.6 L487.0 527.6 L488.5 535.1 L490.0 527.2 L491.5 523.0 L493.0 524.0 L494.5 528.5 L496.0 532.7 L497.5 531.3 L499.0 525.5 L500.5 519.8 L502.0 525.0 L503.5 529.3 L505.0 534.6 L506.5 524.8 L508.0 521.6 L509.5 524.0 L511.0 527.6 L512.5 534.2 L514.0 529.7 L515.5 520.7 L517.0 518.8 L518.5 525.5 L520.0 531.3 L521.5 530.7 L523.0 523.5 L524.5 519.2 L526.0 523.2 L527.5 524.1 L529.0 531.3 L530.5 526.2 L532.0 518.5 L533.5 519.1 L535.0 524.5 L536.5 529.2 L538.0 526.8 L539.5 521.3 L541.0 517.3 L542.5 523.0 L544.0 530.9 L545.5 534.5 L547.0 528.5 L548.5 523.7 L550.0 526.4 L551.5 530.2 L553.0 537.6 L554.5 531.2 L556.0 524.8 L557.5 524.7 L559.0 528.4 L560.5 534.8 L562.0 537.8 L563.5 528.0 L565.0 525.1 L566.5 528.4 L568.0 533.3 L569.5 540.3 L571.0 533.1 L572.5 527.7 L574.0 527.5 L575.5 531.9 L577.0 536.5 L578.5 533.4 L580.0 525.7 L581.5 522.1 L583.0 527.0 L584.5 530.8 L586.0 531.7 L587.5 524.6 L589.0 519.0 L590.5 522.3 L592.0 527.2 L593.5 536.7 L595.0 533.8 L596.5 525.9 L598.0 527.2 L599.5 533.7 L601.0 538.6 L602.5 539.6 L604.0 533.7 L605.5 531.6 L607.0 535.2 L608.5 542.9 L610.0 548.0 L611.5 543.1 L613.0 536.3 L614.5 538.0 L616.0 542.2 L617.5 547.9 L619.0 545.7 L620.5 538.1 L622.0 534.7 L623.5 540.5 L625.0 544.3 L626.5 548.4 L628.0 539.3 L629.5 531.8 L631.0 535.4 L632.5 539.7 L634.0 548.0 L635.5 542.1 L637.0 532.9 L638.5 529.3 L640.0 535.2 L641.5 541.4 L643.0 540.5 L644.5 532.5 L646.0 529.0 L647.5 533.3 L649.0 539.0 L650.5 544.7 L652.0 538.1 L653.5 530.7 L655.0 531.7 L656.5 535.4 L658.0 542.2 L659.5 540.8 L661.0 530.7 L662.5 526.6 L664.0 531.7 L665.5 535.6 L667.0 541.3 L668.5 531.4 L670.0 523.6 L671.5 528.7 L673.0 530.6 L674.5 536.5 L676.0 531.2 L677.5 524.8 L679.0 523.1 L680.5 527.6 L682.0 533.0 L683.5 535.3 L685.0 524.7 L686.5 519.0 L688.0 522.7 L689.5 526.7 L691.0 534.4 L692.5 526.9 L694.0 519.4 L695.5 518.6 L697.0 521.3 L698.5 526.8 L700.0 527.1 L701.5 518.1 L703.0 514.9 L704.5 522.4 L706.0 526.1 L707.5 528.8 L709.0 523.5 L710.5 516.8 L712.0 522.2 L713.5 524.0 L715.0 533.0 L716.5 527.2 L718.0 518.7 L719.5 516.0 L721.0 521.9 L722.5 527.8 L724.0 530.6 L725.5 523.3 L727.0 516.2 L728.5 518.8 L730.0 522.2 L731.5 529.1 L733.0 524.0 L734.5 514.1 L736.0 515.7 L737.5 521.6 L739.0 526.4 L740.5 525.2 L742.0 518.1 L743.5 512.1 L745.0 516.7 L746.5 522.7 L748.0 525.1 L749.5 518.2 L751.0 510.7 L752.5 516.3 L754.0 518.0 L755.5 526.0 L757.0 523.3 L758.5 514.0 L760.0 512.7 L761.5 517.1 L763.0 523.3 L764.5 524.9 L766.0 518.6 L767.5 515.8 L769.0 519.4 L770.5 522.2 L772.0 529.6 L773.5 526.0 L775.0 520.0 L776.5 521.1 L778.0 525.1 L779.5 531.4 L781.0 531.2 L782.5 524.3 L784.0 523.6 L785.5 529.3 L787.0 534.3 L788.5 538.7 L790.0 534.3 L791.5 530.7 L793.0 535.3 L794.5 539.1 L796.0 543.0 L797.5 541.8 L799.0 533.1 L800.5 532.7 L802.0 537.4 L803.5 543.0 L805.0 545.8 L806.5 538.0 L808.0 534.2 L809.5 538.1 L811.0 542.5 L812.5 547.2 L814.0 540.9 L815.5 535.0 L817.0 534.3 L818.5 536.1 L820.0 542.1 L821.5 541.9 L823.0 536.9 L824.5 534.3 L826.0 536.7 L827.5 541.5 L829.0 541.9 L830.5 534.5 L832.0 531.0 L833.5 529.7 L835.0 533.4 L836.5 535.2 L838.0 530.0 L839.5 523.2 L841.0 520.4 L842.5 521.9 L844.0 524.7 L845.5 527.0 L847.0 518.3 L848.5 514.5 L850.0 517.8 L851.5 517.1 L853.0 520.9 L854.5 515.3 L856.0 510.4 L857.5 508.6 L859.0 516.9 L860.5 521.1 L862.0 521.3 L863.5 515.5 L865.0 513.1 L866.5 517.9 L868.0 519.6 L869.5 526.8 L871.0 521.7 L872.5 517.1 L874.0 520.0 L875.5 522.5 L877.0 529.4 L878.5 524.3 L880.0 520.5 L881.5 519.2 L883.0 525.1 L884.5 529.6 L886.0 530.6 L887.5 523.6 L889.0 519.3 L890.5 524.0 L892.0 526.6 L893.5 531.9 L895.0 526.4 L896.5 520.6 L898.0 520.0 L899.5 521.2 L901.0 527.1 L902.5 526.5 L904.0 522.6 L905.5 519.3 L907.0 523.6 L908.5 525.9 L910.0 530.2 L911.5 523.7 L913.0 522.5 L914.5 522.4 L916.0 528.3 L917.5 533.5 L919.0 528.8 L920.5 524.4 L922.0 523.2 L923.5 526.8 L925.0 530.8 L926.5 532.4 L928.0 525.9 L929.5 522.9 L931.0 525.7 L932.5 529.4 L934.0 535.6 L935.5 531.6 L937.0 524.5 L938.5 527.9 L940.0 534.5 L941.5 538.1 L943.0 539.6 L944.5 534.7 L946.0 531.6 L947.5 534.8 L949.0 540.6 L950.5 545.0 L952.0 539.1 L953.5 534.3 L955.0 533.8 L956.5 537.6 L958.0 541.6 L959.5 540.1 L961.0 532.6 L962.5 529.8 L964.0 536.9 L965.5 540.3 L967.0 541.4 L968.5 533.5 L970.0 528.0 L971.5 531.9 L973.0 532.0 L974.5 540.3 L976.0 537.4 L977.5 528.8 L979.0 527.9 L980.5 533.2 L982.0 539.2 L983.5 537.5 L985.0 529.9 L986.5 528.5 L988.0 528.9 L989.5 534.3 L991.0 536.8 L992.5 531.3 L994.0 526.7 L995.5 524.7 L997.0 530.7 L998.5 534.9 L1000.0 534.6 L1001.5 526.7 L1003.0 524.6 L1004.5 532.6 L1006.0 535.5 L1007.5 537.3 L1009.0 530.9 L1010.5 524.4 L1012.0 526.6 L1013.5 529.7 L1015.0 538.1 L1016.5 530.2 L1018.0 523.6 L1019.5 524.8 L1021.0 527.7 L1022.5 532.1 L1024.0 531.4 L1025.5 526.9 L1027.0 520.1 L1028.5 524.2 L1030.0 528.8 L1031.5 535.7 L1033.0 529.7 L1034.5 524.8 L1036.0 524.5 L1037.5 529.0 L1039.0 535.0 L1040.5 532.0 L1042.0 525.7 L1043.5 524.1 L1045.0 530.8 L1046.5 534.6 L1048.0 537.8 L1049.5 529.5 L1051.0 526.7 L1052.5 528.2 L1054.0 532.6 L1055.5 541.6 L1057.0 534.1 L1058.5 526.0 L1060.0 526.4 L1061.5 528.5 L1063.0 532.6 L1064.5 534.0 L1066.0 524.3 L1067.5 518.6 L1069.0 523.8 L1070.5 527.4 L1072.0 532.0 L1073.5 527.4 L1075.0 519.6 L1076.5 519.4 L1078.0 526.7 L1079.5 533.5 L1081.0 530.8 L1082.5 522.9 L1084.0 521.3 L1085.5 525.3 L1087.0 529.2 L1088.5 534.8 L1090.0 524.5 L1091.5 519.7 L1093.0 523.4 L1094.5 525.9 L1096.0 532.1 L1097.5 527.2 L1099.0 520.9 L1100.5 519.3 L1102.0 524.5 L1103.5 529.3 L1105.0 532.7 L1106.5 524.9 L1108.0 519.7 L1109.5 525.8 L1111.0 529.0 L1112.5 534.9 L1114.0 529.4 L1115.5 525.3 L1117.0 526.3 L1118.5 531.4 L1120.0 538.9 L1121.5 537.9 L1123.0 527.3 L1124.5 526.5 L1126.0 528.5 L1127.5 535.7 L1129.0 535.7 L1130.5 529.5 L1132.0 525.7 L1133.5 529.5 L1135.0 532.2 L1136.5 538.8 L1138.0 531.9 L1139.5 522.2 L1141.0 521.9 L1142.5 527.7 L1144.0 533.1 L1145.5 532.7 L1147.0 524.9 L1148.5 518.3 L1150.0 521.1 L1151.5 525.8 L1153.0 530.5 L1154.5 524.3 L1156.0 515.0 L1157.5 518.8 L1159.0 524.1 L1160.5 533.5 L1162.0 529.6 L1163.5 522.9 L1165.0 519.6 L1166.5 526.0 L1168.0 532.4 L1169.5 535.0 L1171.0 528.5 L1172.5 522.5 L1174.0 525.6 L1175.5 530.0 L1177.0 540.1 L1178.5 532.5 L1180.0 524.5 L1181.5 524.7 L1183.0 532.3 L1184.5 536.8 L1186.0 536.5 L1187.5 530.0 L1189.0 524.5 L1190.5 529.5 L1192.0 537.2 L1193.5 542.9 L1195.0 533.6 L1196.5 526.1 L1198.0 529.3 L1199.5 532.5 L1201.0 537.1 L1202.5 536.7 L1204.0 528.2 L1205.5 524.7 L1207.0 529.4 L1208.5 533.8 L1210.0 536.2 L1211.5 529.0 L1213.0 521.4 L1214.5 522.9 L1216.0 527.5 L1217.5 535.2 L1219.0 527.6 L1220.5 523.5 L1222.0 521.8 L1223.5 523.7 L1225.0 530.2 L1226.5 532.1 L1228.0 525.2 L1229.5 521.7 L1231.0 528.6 L1232.5 532.8 L1234.0 542.2 L1235.5 532.3 L1237.0 524.4 L1238.5 526.5 L1240.0 533.7 L1241.5 535.9 L1243.0 535.8 L1244.5 528.3 L1246.0 522.3 L1247.5 526.7 L1249.0 530.8 L1250.5 533.8 L1252.0 528.1 L1253.5 523.6 L1255.0 525.5 L1256.5 529.6 L1258.0 536.4 L1259.5 530.3 L1261.0 523.4 L1262.5 521.0 L1264.0 526.8 L1265.5 532.1 L1267.0 535.1 L1268.5 527.6 L1270.0 522.5 L1271.5 526.8 L1273.0 531.1" fill="none" stroke="#0000ff" stroke-width="1.1" shape-rendering="crispEdges"/>
<path d="M283.0 492.5 L284.5 497.5 L286.0 504.4 L287.5 499.8 L289.0 498.4 L290.5 503.3 L292.0 506.7 L293.5 513.2 L295.0 513.0 L296.5 506.8 L298.0 506.6 L299.5 508.7 L301.0 512.6 L302.5 515.2 L304.0 508.9 L305.5 504.9 L307.0 506.1 L308.5 509.2 L310.0 514.1 L311.5 509.5 L313.0 502.9 L314.5 504.0 L316.0 506.5 L317.5 509.3 L319.0 508.4 L320.5 501.7 L322.0 498.7 L323.5 501.1 L325.0 504.4 L326.5 508.1 L328.0 502.8 L329.5 496.5 L331.0 498.7 L332.5 501.3 L334.0 506.0 L335.5 505.3 L337.0 497.9 L338.5 497.3 L340.0 499.3 L341.5 506.3 L343.0 505.9 L344.5 501.3 L346.0 497.4 L347.5 499.7 L349.0 501.6 L350.5 508.5 L352.0 503.4 L353.5 498.4 L355.0 496.0 L356.5 503.0 L358.0 505.7 L359.5 503.6 L361.0 495.9 L362.5 494.2 L364.0 499.1 L365.5 502.3 L367.0 505.2 L368.5 497.8 L370.0 489.8 L371.5 492.5 L373.0 496.0 L374.5 501.6 L376.0 497.8 L377.5 493.1 L379.0 490.7 L380.5 498.5 L382.0 502.0 L383.5 502.8 L385.0 499.1 L386.5 497.3 L388.0 500.6 L389.5 503.8 L391.0 511.8 L392.5 507.1 L394.0 504.8 L395.5 502.1 L397.0 504.7 L398.5 506.3 L400.0 506.4 L401.5 499.3 L403.0 494.4 L404.5 497.6 L406.0 501.6 L407.5 505.4 L409.0 497.7 L410.5 494.2 L412.0 495.4 L413.5 496.6 L415.0 499.6 L416.5 499.3 L418.0 494.2 L419.5 490.5 L421.0 497.7 L422.5 500.3 L424.0 505.5 L425.5 501.3 L427.0 494.9 L428.5 499.9 L430.0 503.1 L431.5 508.0 L433.0 501.9 L434.5 496.6 L436.0 496.1 L437.5 500.9 L439.0 505.8 L440.5 506.9 L442.0 497.8 L443.5 492.8 L445.0 496.6 L446.5 500.2 L448.0 503.5 L449.5 497.6 L451.0 491.3 L452.5 493.7 L454.0 497.7 L455.5 504.2 L457.0 501.4 L458.5 498.3 L460.0 495.5 L461.5 502.2 L463.0 502.7 L464.5 506.7 L466.0 501.8 L467.5 496.7 L469.0 498.9 L470.5 501.4 L472.0 508.8 L473.5 503.2 L475.0 495.2 L476.5 495.1 L478.0 498.1 L479.5 504.4 L481.0 502.2 L482.5 496.5 L484.0 491.7 L485.5 496.4 L487.0 501.6 L488.5 506.3 L490.0 499.9 L491.5 496.2 L493.0 494.9 L494.5 501.2 L496.0 506.7 L497.5 504.2 L499.0 496.2 L500.5 494.2 L502.0 499.1 L503.5 504.2 L505.0 504.2 L506.5 496.5 L508.0 493.7 L509.5 494.6 L511.0 500.5 L512.5 505.4 L514.0 501.4 L515.5 495.4 L517.0 492.9 L518.5 499.8 L520.0 503.3 L521.5 503.3 L523.0 498.6 L524.5 495.3 L526.0 497.3 L527.5 503.0 L529.0 506.8 L530.5 502.4 L532.0 497.1 L533.5 496.4 L535.0 499.0 L536.5 505.2 L538.0 503.4 L539.5 497.0 L541.0 493.0 L542.5 498.3 L544.0 502.2 L545.5 507.5 L547.0 501.9 L548.5 495.9 L550.0 497.6 L551.5 502.7 L553.0 510.7 L554.5 504.3 L556.0 499.8 L557.5 496.7 L559.0 501.1 L560.5 506.1 L562.0 507.0 L563.5 499.2 L565.0 492.7 L566.5 495.4 L568.0 501.2 L569.5 504.5 L571.0 499.3 L572.5 490.6 L574.0 489.2 L575.5 494.0 L577.0 501.1 L578.5 498.0 L580.0 488.9 L581.5 486.0 L583.0 489.0 L584.5 495.4 L586.0 498.4 L587.5 491.2 L589.0 484.0 L590.5 488.6 L592.0 493.7 L593.5 502.9 L595.0 499.0 L596.5 493.5 L598.0 490.3 L599.5 496.9 L601.0 505.2 L602.5 507.6 L604.0 502.2 L605.5 499.1 L607.0 502.9 L608.5 510.0 L610.0 518.4 L611.5 513.6 L613.0 505.2 L614.5 509.2 L616.0 512.4 L617.5 519.5 L619.0 515.5 L620.5 508.3 L622.0 504.5 L623.5 508.3 L625.0 515.3 L626.5 519.7 L628.0 508.9 L629.5 506.5 L631.0 508.4 L632.5 511.6 L634.0 519.6 L635.5 513.8 L637.0 506.5 L638.5 505.0 L640.0 509.9 L641.5 514.2 L643.0 514.4 L644.5 507.4 L646.0 498.8 L647.5 505.2 L649.0 508.8 L650.5 518.0 L652.0 508.4 L653.5 501.8 L655.0 502.9 L656.5 508.1 L658.0 513.7 L659.5 512.5 L661.0 504.2 L662.5 501.1 L664.0 503.9 L665.5 509.7 L667.0 512.7 L668.5 502.8 L670.0 498.5 L671.5 502.9 L673.0 507.2 L674.5 514.7 L676.0 511.2 L677.5 502.5 L679.0 500.6 L680.5 503.0 L682.0 509.2 L683.5 511.6 L685.0 504.4 L686.5 500.8 L688.0 505.7 L689.5 507.6 L691.0 515.9 L692.5 508.2 L694.0 499.3 L695.5 502.4 L697.0 503.8 L698.5 510.2 L700.0 508.1 L701.5 501.8 L703.0 493.9 L704.5 500.6 L706.0 506.1 L707.5 509.6 L709.0 503.1 L710.5 494.7 L712.0 498.7 L713.5 505.0 L715.0 512.0 L716.5 507.5 L718.0 499.8 L719.5 499.4 L721.0 503.3 L722.5 508.3 L724.0 510.3 L725.5 502.4 L727.0 495.8 L728.5 501.6 L730.0 503.5 L731.5 511.2 L733.0 506.6 L734.5 496.7 L736.0 500.1 L737.5 505.0 L739.0 508.9 L740.5 509.2 L742.0 500.7 L743.5 495.4 L745.0 502.7 L746.5 505.2 L748.0 514.4 L749.5 503.7 L751.0 497.9 L752.5 499.6 L754.0 505.4 L755.5 510.9 L757.0 505.5 L758.5 496.9 L760.0 494.0 L761.5 500.5 L763.0 507.9 L764.5 509.3 L766.0 501.4 L767.5 494.5 L769.0 501.3 L770.5 503.0 L772.0 509.8 L773.5 504.4 L775.0 494.2 L776.5 496.5 L778.0 501.9 L779.5 507.5 L781.0 507.8 L782.5 500.8 L784.0 499.0 L785.5 507.8 L787.0 510.4 L788.5 517.1 L790.0 511.4 L791.5 504.6 L793.0 510.5 L794.5 514.4 L796.0 522.2 L797.5 516.6 L799.0 510.4 L800.5 508.4 L802.0 514.7 L803.5 520.6 L805.0 522.4 L806.5 515.0 L808.0 511.1 L809.5 514.2 L811.0 518.5 L812.5 527.1 L814.0 519.5 L815.5 512.1 L817.0 512.6 L818.5 514.8 L820.0 520.2 L821.5 518.4 L823.0 512.1 L824.5 505.1 L826.0 510.9 L827.5 511.4 L829.0 516.1 L830.5 510.3 L832.0 501.7 L833.5 503.4 L835.0 508.5 L836.5 512.4 L838.0 507.2 L839.5 500.6 L841.0 495.5 L842.5 498.1 L844.0 506.4 L845.5 504.6 L847.0 498.7 L848.5 492.4 L850.0 494.0 L851.5 497.6 L853.0 502.1 L854.5 495.8 L856.0 489.1 L857.5 489.9 L859.0 494.6 L860.5 502.2 L862.0 501.2 L863.5 493.2 L865.0 489.2 L866.5 494.0 L868.0 497.5 L869.5 502.5 L871.0 495.9 L872.5 491.5 L874.0 491.3 L875.5 495.5 L877.0 504.1 L878.5 500.0 L880.0 492.9 L881.5 490.9 L883.0 494.4 L884.5 499.1 L886.0 500.9 L887.5 491.2 L889.0 485.4 L890.5 489.1 L892.0 491.9 L893.5 500.3 L895.0 495.1 L896.5 488.9 L898.0 487.0 L899.5 495.4 L901.0 501.8 L902.5 501.2 L904.0 495.2 L905.5 490.9 L907.0 496.7 L908.5 501.3 L910.0 506.4 L911.5 497.9 L913.0 494.1 L914.5 496.4 L916.0 499.2 L917.5 505.3 L919.0 501.5 L920.5 496.8 L922.0 494.5 L923.5 499.7 L925.0 505.9 L926.5 508.5 L928.0 502.1 L929.5 496.6 L931.0 500.4 L932.5 504.9 L934.0 508.6 L935.5 504.3 L937.0 496.9 L938.5 498.4 L940.0 503.2 L941.5 510.7 L943.0 508.6 L944.5 504.0 L946.0 501.4 L947.5 504.6 L949.0 509.8 L950.5 514.3 L952.0 509.2 L953.5 503.7 L955.0 505.1 L956.5 507.2 L958.0 514.1 L959.5 510.8 L961.0 501.5 L962.5 501.5 L964.0 505.1 L965.5 509.6 L967.0 510.5 L968.5 502.2 L970.0 500.0 L971.5 502.0 L973.0 506.4 L974.5 511.3 L976.0 508.9 L977.5 503.3 L979.0 502.8 L980.5 504.3 L982.0 506.9 L983.5 507.0 L985.0 501.7 L986.5 497.2 L988.0 500.5 L989.5 506.2 L991.0 508.5 L992.5 502.2 L994.0 500.5 L995.5 501.4 L997.0 503.4 L998.5 508.0 L1000.0 505.2 L1001.5 501.7 L1003.0 500.4 L1004.5 504.7 L1006.0 509.3 L1007.5 512.7 L1009.0 504.0 L1010.5 499.9 L1012.0 501.5 L1013.5 504.6 L1015.0 510.0 L1016.5 505.5 L1018.0 503.1 L1019.5 501.1 L1021.0 502.2 L1022.5 505.4 L1024.0 504.7 L1025.5 501.4 L1027.0 497.0 L1028.5 501.1 L1030.0 505.5 L1031.5 505.3 L1033.0 500.8 L1034.5 496.6 L1036.0 497.8 L1037.5 499.6 L1039.0 505.9 L1040.5 504.8 L1042.0 498.1 L1043.5 497.3 L1045.0 501.5 L1046.5 508.1 L1048.0 508.0 L1049.5 504.9 L1051.0 500.5 L1052.5 503.3 L1054.0 506.5 L1055.5 512.6 L1057.0 507.4 L1058.5 500.1 L1060.0 500.0 L1061.5 504.3 L1063.0 510.0 L1064.5 508.7 L1066.0 502.6 L1067.5 497.7 L1069.0 500.6 L1070.5 502.5 L1072.0 507.2 L1073.5 504.2 L1075.0 498.5 L1076.5 499.5 L1078.0 502.9 L1079.5 507.1 L1081.0 504.3 L1082.5 499.1 L1084.0 494.0 L1085.5 497.7 L1087.0 501.7 L1088.5 505.7 L1090.0 499.3 L1091.5 496.4 L1093.0 498.7 L1094.5 501.6 L1096.0 506.2 L1097.5 502.3 L1099.0 501.2 L1100.5 498.0 L1102.0 503.1 L1103.5 507.3 L1105.0 508.5 L1106.5 501.7 L1108.0 497.2 L1109.5 499.7 L1111.0 504.4 L1112.5 509.9 L1114.0 504.5 L1115.5 498.6 L1117.0 499.7 L1118.5 503.6 L1120.0 510.6 L1121.5 510.4 L1123.0 502.1 L1124.5 500.6 L1126.0 504.2 L1127.5 510.2 L1129.0 511.2 L1130.5 506.3 L1132.0 500.8 L1133.5 505.5 L1135.0 506.5 L1136.5 512.7 L1138.0 504.5 L1139.5 500.7 L1141.0 499.2 L1142.5 503.1 L1144.0 506.6 L1145.5 507.2 L1147.0 500.7 L1148.5 496.2 L1150.0 498.2 L1151.5 500.9 L1153.0 503.6 L1154.5 500.2 L1156.0 495.4 L1157.5 498.2 L1159.0 500.4 L1160.5 507.6 L1162.0 506.3 L1163.5 500.7 L1165.0 499.2 L1166.5 503.0 L1168.0 503.9 L1169.5 509.3 L1171.0 502.8 L1172.5 501.3 L1174.0 503.3 L1175.5 505.7 L1177.0 512.3 L1178.5 508.1 L1180.0 504.3 L1181.5 501.3 L1183.0 508.5 L1184.5 513.7 L1186.0 512.6 L1187.5 506.6 L1189.0 501.9 L1190.5 508.3 L1192.0 509.9 L1193.5 513.2 L1195.0 508.8 L1196.5 502.3 L1198.0 502.1 L1199.5 508.4 L1201.0 512.1 L1202.5 508.6 L1204.0 501.0 L1205.5 499.3 L1207.0 502.3 L1208.5 508.3 L1210.0 510.7 L1211.5 503.1 L1213.0 499.2 L1214.5 498.2 L1216.0 503.4 L1217.5 510.5 L1219.0 504.5 L1220.5 498.6 L1222.0 497.7 L1223.5 502.2 L1225.0 509.0 L1226.5 507.8 L1228.0 502.6 L1229.5 496.0 L1231.0 501.8 L1232.5 506.8 L1234.0 511.0 L1235.5 504.8 L1237.0 501.7 L1238.5 501.0 L1240.0 504.3 L1241.5 510.1 L1243.0 505.7 L1244.5 498.6 L1246.0 495.5 L1247.5 501.1 L1249.0 506.5 L1250.5 506.3 L1252.0 503.1 L1253.5 497.2 L1255.0 498.7 L1256.5 505.2 L1258.0 511.0 L1259.5 506.4 L1261.0 498.3 L1262.5 500.2 L1264.0 504.3 L1265.5 509.9 L1267.0 510.2 L1268.5 503.3 L1270.0 500.0 L1271.5 505.2 L1273.0 507.4" fill="none" stroke="#00ff00" stroke-width="1.1" shape-rendering="crispEdges"/>
<path d="M283.0 470.8 L284.5 475.9 L286.0 481.2 L287.5 478.2 L289.0 473.6 L290.5 477.3 L292.0 482.0 L293.5 490.5 L295.0 486.4 L296.5 476.6 L298.0 475.2 L299.5 480.2 L301.0 485.3 L302.5 487.7 L304.0 479.6 L305.5 473.9 L307.0 476.1 L308.5 481.9 L310.0 490.0 L311.5 482.8 L313.0 475.6 L314.5 477.2 L316.0 481.0 L317.5 486.7 L319.0 486.7 L320.5 478.3 L322.0 472.0 L323.5 477.2 L325.0 481.4 L326.5 486.8 L328.0 476.7 L329.5 471.0 L331.0 474.7 L332.5 478.3 L334.0 485.0 L335.5 480.6 L337.0 472.7 L338.5 470.7 L340.0 475.5 L341.5 480.4 L343.0 485.5 L344.5 476.3 L346.0 471.5 L347.5 474.4 L349.0 479.2 L350.5 483.9 L352.0 480.2 L353.5 472.3 L355.0 472.4 L356.5 476.7 L358.0 478.6 L359.5 478.9 L361.0 471.7 L362.5 466.3 L364.0 469.3 L365.5 473.5 L367.0 479.1 L368.5 469.7 L370.0 464.8 L371.5 464.3 L373.0 468.8 L374.5 478.5 L376.0 475.7 L377.5 468.0 L379.0 466.5 L380.5 471.2 L382.0 478.5 L383.5 483.0 L385.0 477.9 L386.5 472.1 L388.0 476.1 L389.5 480.8 L391.0 487.4 L392.5 484.5 L394.0 477.3 L395.5 476.7 L397.0 480.8 L398.5 487.3 L400.0 485.9 L401.5 477.3 L403.0 470.0 L404.5 475.3 L406.0 477.0 L407.5 483.5 L409.0 474.4 L410.5 466.9 L412.0 469.9 L413.5 475.2 L415.0 479.8 L416.5 476.8 L418.0 470.4 L419.5 466.7 L421.0 473.0 L422.5 478.5 L424.0 482.9 L425.5 474.9 L427.0 468.7 L428.5 473.6 L430.0 479.3 L431.5 484.2 L433.0 479.4 L434.5 471.6 L436.0 470.8 L437.5 476.4 L439.0 481.5 L440.5 482.4 L442.0 475.9 L443.5 470.2 L445.0 474.7 L446.5 481.2 L448.0 484.4 L449.5 475.8 L451.0 470.1 L452.5 472.5 L454.0 474.6 L455.5 483.1 L457.0 481.1 L458.5 474.7 L460.0 469.3 L461.5 475.6 L463.0 481.6 L464.5 484.4 L466.0 476.2 L467.5 471.8 L469.0 474.2 L470.5 479.4 L472.0 488.0 L473.5 481.6 L475.0 472.5 L476.5 473.7 L478.0 475.1 L479.5 483.3 L481.0 481.4 L482.5 473.3 L484.0 469.0 L485.5 474.6 L487.0 478.3 L488.5 484.2 L490.0 474.8 L491.5 466.6 L493.0 466.9 L494.5 470.9 L496.0 477.4 L497.5 475.6 L499.0 469.3 L500.5 465.1 L502.0 470.4 L503.5 474.8 L505.0 480.2 L506.5 472.1 L508.0 467.5 L509.5 469.8 L511.0 474.2 L512.5 481.1 L514.0 476.1 L515.5 470.7 L517.0 468.6 L518.5 470.9 L520.0 477.1 L521.5 478.4 L523.0 470.9 L524.5 467.5 L526.0 470.9 L527.5 473.4 L529.0 478.8 L530.5 471.4 L532.0 465.7 L533.5 466.5 L535.0 470.1 L536.5 476.8 L538.0 475.4 L539.5 467.3 L541.0 464.9 L542.5 470.1 L544.0 473.6 L545.5 478.7 L547.0 470.7 L548.5 467.2 L550.0 469.4 L551.5 472.6 L553.0 478.9 L554.5 475.2 L556.0 467.2 L557.5 465.1 L559.0 470.5 L560.5 473.8 L562.0 476.2 L563.5 469.2 L565.0 465.3 L566.5 467.0 L568.0 468.6 L569.5 471.7 L571.0 468.3 L572.5 461.0 L574.0 462.4 L575.5 462.6 L577.0 467.9 L578.5 467.4 L580.0 461.3 L581.5 456.6 L583.0 460.7 L584.5 467.3 L586.0 468.7 L587.5 462.6 L589.0 458.3 L590.5 463.4 L592.0 467.2 L593.5 474.3 L595.0 467.7 L596.5 463.9 L598.0 463.0 L599.5 468.6 L601.0 475.6 L602.5 475.8 L604.0 470.7 L605.5 468.6 L607.0 472.3 L608.5 479.3 L610.0 484.3 L611.5 478.5 L613.0 475.5 L614.5 476.5 L616.0 479.0 L617.5 483.8 L619.0 483.4 L620.5 478.4 L622.0 475.8 L623.5 480.5 L625.0 482.7 L626.5 485.5 L628.0 479.1 L629.5 474.0 L631.0 474.4 L632.5 479.8 L634.0 484.2 L635.5 480.6 L637.0 473.6 L638.5 470.5 L640.0 474.7 L641.5 480.6 L643.0 482.6 L644.5 475.2 L646.0 471.8 L647.5 474.7 L649.0 481.5 L650.5 487.1 L652.0 480.8 L653.5 475.9 L655.0 475.8 L656.5 477.7 L658.0 485.5 L659.5 483.8 L661.0 476.3 L662.5 472.9 L664.0 478.3 L665.5 479.5 L667.0 483.7 L668.5 480.1 L670.0 473.4 L671.5 476.5 L673.0 478.2 L674.5 483.5 L676.0 481.3 L677.5 475.1 L679.0 472.8 L680.5 476.1 L682.0 480.9 L683.5 483.5 L685.0 479.6 L686.5 473.7 L688.0 478.2 L689.5 482.7 L691.0 485.5 L692.5 480.9 L694.0 475.4 L695.5 475.2 L697.0 478.5 L698.5 486.2 L700.0 482.6 L701.5 475.3 L703.0 471.1 L704.5 475.5 L706.0 479.0 L707.5 481.6 L709.0 473.7 L710.5 470.4 L712.0 469.1 L713.5 473.1 L715.0 476.5 L716.5 472.8 L718.0 464.8 L719.5 466.5 L721.0 467.5 L722.5 472.9 L724.0 475.9 L725.5 468.8 L727.0 465.8 L728.5 468.6 L730.0 471.5 L731.5 477.2 L733.0 475.7 L734.5 470.1 L736.0 471.7 L737.5 477.3 L739.0 479.8 L740.5 479.6 L742.0 474.5 L743.5 473.8 L745.0 476.5 L746.5 480.0 L748.0 486.3 L749.5 480.5 L751.0 476.5 L752.5 477.7 L754.0 481.5 L755.5 485.8 L757.0 481.7 L758.5 478.2 L760.0 473.1 L761.5 477.7 L763.0 478.6 L764.5 480.2 L766.0 473.8 L767.5 468.4 L769.0 470.0 L770.5 474.5 L772.0 475.6 L773.5 472.0 L775.0 467.7 L776.5 464.2 L778.0 470.5 L779.5 473.8 L781.0 473.8 L782.5 469.8 L784.0 467.9 L785.5 471.3 L787.0 476.7 L788.5 478.4 L790.0 477.1 L791.5 472.3 L793.0 473.3 L794.5 475.8 L796.0 483.3 L797.5 481.9 L799.0 473.5 L800.5 474.5 L802.0 477.7 L803.5 484.2 L805.0 485.8 L806.5 479.1 L808.0 476.3 L809.5 478.1 L811.0 481.2 L812.5 486.9 L814.0 484.8 L815.5 478.1 L817.0 477.8 L818.5 479.6 L820.0 487.6 L821.5 486.1 L823.0 477.6 L824.5 473.2 L826.0 478.3 L827.5 480.2 L829.0 483.9 L830.5 477.1 L832.0 471.0 L833.5 471.9 L835.0 475.2 L836.5 479.4 L838.0 477.1 L839.5 468.8 L841.0 466.2 L842.5 469.5 L844.0 474.2 L845.5 472.8 L847.0 468.8 L848.5 462.7 L850.0 465.4 L851.5 468.9 L853.0 474.1 L854.5 467.3 L856.0 460.9 L857.5 461.0 L859.0 464.9 L860.5 470.1 L862.0 470.7 L863.5 463.5 L865.0 459.7 L866.5 467.2 L868.0 470.0 L869.5 476.4 L871.0 469.7 L872.5 464.3 L874.0 469.1 L875.5 470.9 L877.0 476.1 L878.5 471.2 L880.0 465.9 L881.5 462.2 L883.0 466.0 L884.5 468.5 L886.0 473.4 L887.5 466.2 L889.0 461.0 L890.5 466.6 L892.0 471.9 L893.5 477.3 L895.0 471.5 L896.5 466.9 L898.0 467.7 L899.5 472.5 L901.0 477.8 L902.5 479.5 L904.0 471.6 L905.5 469.5 L907.0 472.9 L908.5 478.9 L910.0 482.0 L911.5 474.6 L913.0 470.6 L914.5 472.5 L916.0 476.0 L917.5 483.6 L919.0 480.1 L920.5 473.0 L922.0 470.5 L923.5 474.9 L925.0 478.4 L926.5 481.3 L928.0 472.4 L929.5 465.6 L931.0 469.7 L932.5 474.0 L934.0 480.4 L935.5 472.3 L937.0 466.3 L938.5 467.5 L940.0 475.5 L941.5 480.4 L943.0 480.2 L944.5 473.3 L946.0 470.1 L947.5 476.1 L949.0 478.4 L950.5 486.6 L952.0 479.7 L953.5 474.3 L955.0 475.7 L956.5 478.6 L958.0 487.9 L959.5 483.8 L961.0 477.7 L962.5 475.8 L964.0 481.2 L965.5 485.2 L967.0 487.1 L968.5 481.4 L970.0 472.8 L971.5 475.7 L973.0 480.3 L974.5 486.5 L976.0 479.4 L977.5 473.7 L979.0 474.4 L980.5 478.1 L982.0 482.5 L983.5 480.4 L985.0 472.2 L986.5 468.5 L988.0 472.7 L989.5 477.5 L991.0 482.6 L992.5 474.7 L994.0 468.9 L995.5 470.4 L997.0 476.8 L998.5 482.7 L1000.0 481.7 L1001.5 471.9 L1003.0 471.7 L1004.5 476.5 L1006.0 479.5 L1007.5 484.0 L1009.0 475.4 L1010.5 467.5 L1012.0 470.3 L1013.5 476.2 L1015.0 483.9 L1016.5 475.9 L1018.0 470.5 L1019.5 469.4 L1021.0 474.6 L1022.5 480.3 L1024.0 481.0 L1025.5 473.2 L1027.0 470.2 L1028.5 473.5 L1030.0 479.7 L1031.5 483.8 L1033.0 476.5 L1034.5 470.5 L1036.0 474.3 L1037.5 480.8 L1039.0 485.1 L1040.5 484.4 L1042.0 475.6 L1043.5 472.3 L1045.0 479.1 L1046.5 482.6 L1048.0 487.0 L1049.5 477.7 L1051.0 472.5 L1052.5 478.3 L1054.0 482.1 L1055.5 489.4 L1057.0 480.6 L1058.5 474.9 L1060.0 471.8 L1061.5 475.8 L1063.0 483.4 L1064.5 481.8 L1066.0 472.9 L1067.5 469.1 L1069.0 472.9 L1070.5 477.4 L1072.0 481.8 L1073.5 473.2 L1075.0 465.8 L1076.5 467.9 L1078.0 472.3 L1079.5 479.8 L1081.0 476.9 L1082.5 465.4 L1084.0 460.7 L1085.5 468.7 L1087.0 471.8 L1088.5 476.4 L1090.0 467.5 L1091.5 463.1 L1093.0 466.7 L1094.5 470.1 L1096.0 479.5 L1097.5 475.8 L1099.0 468.6 L1100.5 467.6 L1102.0 471.9 L1103.5 478.2 L1105.0 479.1 L1106.5 471.2 L1108.0 466.2 L1109.5 472.7 L1111.0 475.5 L1112.5 481.5 L1114.0 477.8 L1115.5 469.5 L1117.0 473.1 L1118.5 476.2 L1120.0 483.0 L1121.5 482.4 L1123.0 475.2 L1124.5 471.8 L1126.0 477.0 L1127.5 483.3 L1129.0 486.6 L1130.5 479.3 L1132.0 473.4 L1133.5 477.5 L1135.0 481.8 L1136.5 489.9 L1138.0 483.3 L1139.5 474.0 L1141.0 473.0 L1142.5 479.1 L1144.0 484.0 L1145.5 484.1 L1147.0 473.3 L1148.5 468.7 L1150.0 473.6 L1151.5 476.1 L1153.0 484.2 L1154.5 476.1 L1156.0 467.9 L1157.5 471.3 L1159.0 473.0 L1160.5 479.9 L1162.0 477.7 L1163.5 468.8 L1165.0 464.5 L1166.5 472.6 L1168.0 477.3 L1169.5 480.1 L1171.0 473.9 L1172.5 465.8 L1174.0 471.8 L1175.5 474.8 L1177.0 484.0 L1178.5 478.5 L1180.0 470.1 L1181.5 469.6 L1183.0 475.9 L1184.5 482.2 L1186.0 482.7 L1187.5 476.9 L1189.0 471.0 L1190.5 476.7 L1192.0 480.2 L1193.5 486.8 L1195.0 478.2 L1196.5 471.6 L1198.0 473.3 L1199.5 478.6 L1201.0 484.6 L1202.5 481.4 L1204.0 473.5 L1205.5 471.3 L1207.0 475.9 L1208.5 482.2 L1210.0 483.7 L1211.5 474.7 L1213.0 472.8 L1214.5 475.5 L1216.0 477.5 L1217.5 485.6 L1219.0 481.9 L1220.5 474.6 L1222.0 473.7 L1223.5 479.4 L1225.0 485.9 L1226.5 484.5 L1228.0 475.3 L1229.5 472.9 L1231.0 476.1 L1232.5 479.9 L1234.0 486.9 L1235.5 480.9 L1237.0 473.2 L1238.5 473.1 L1240.0 475.9 L1241.5 483.5 L1243.0 480.3 L1244.5 472.2 L1246.0 468.5 L1247.5 473.3 L1249.0 477.9 L1250.5 481.8 L1252.0 474.3 L1253.5 467.9 L1255.0 472.7 L1256.5 476.1 L1258.0 481.1 L1259.5 473.7 L1261.0 467.4 L1262.5 467.0 L1264.0 472.9 L1265.5 478.6 L1267.0 481.7 L1268.5 474.7 L1270.0 470.4 L1271.5 473.6 L1273.0 479.2" fill="none" stroke="#0000ff" stroke-width="1.1" shape-rendering="crispEdges"/>
<path d="M283.0 434.5 L284.5 441.9 L286.0 448.4 L287.5 441.7 L289.0 439.4 L290.5 442.5 L292.0 448.1 L293.5 453.9 L295.0 449.0 L296.5 442.2 L298.0 440.8 L299.5 448.3 L301.0 453.6 L302.5 454.4 L304.0 448.5 L305.5 441.4 L307.0 443.6 L308.5 450.4 L310.0 458.0 L311.5 453.6 L313.0 446.2 L314.5 446.4 L316.0 450.8 L317.5 456.9 L319.0 454.9 L320.5 449.2 L322.0 442.7 L323.5 448.2 L325.0 453.7 L326.5 459.4 L328.0 451.9 L329.5 443.4 L331.0 445.7 L332.5 452.3 L334.0 459.3 L335.5 455.0 L337.0 446.7 L338.5 444.5 L340.0 451.7 L341.5 455.8 L343.0 460.0 L344.5 451.9 L346.0 445.1 L347.5 452.5 L349.0 454.9 L350.5 465.2 L352.0 458.4 L353.5 453.1 L355.0 452.9 L356.5 458.6 L358.0 461.5 L359.5 461.6 L361.0 451.3 L362.5 443.8 L364.0 449.4 L365.5 451.1 L367.0 455.0 L368.5 445.6 L370.0 438.4 L371.5 440.5 L373.0 444.8 L374.5 452.5 L376.0 449.0 L377.5 442.3 L379.0 441.4 L380.5 448.3 L382.0 453.9 L383.5 458.0 L385.0 451.2 L386.5 446.4 L388.0 451.1 L389.5 456.7 L391.0 466.5 L392.5 462.0 L394.0 454.5 L395.5 454.5 L397.0 458.6 L398.5 463.3 L400.0 461.4 L401.5 453.0 L403.0 446.6 L404.5 449.5 L406.0 452.1 L407.5 455.3 L409.0 448.2 L410.5 439.9 L412.0 440.6 L413.5 443.6 L415.0 451.0 L416.5 449.7 L418.0 439.9 L419.5 441.2 L421.0 445.4 L422.5 454.7 L424.0 456.0 L425.5 448.5 L427.0 448.1 L428.5 451.3 L430.0 456.0 L431.5 464.7 L433.0 461.1 L434.5 451.8 L436.0 448.8 L437.5 454.4 L439.0 460.2 L440.5 460.0 L442.0 451.3 L443.5 448.0 L445.0 452.3 L446.5 457.6 L448.0 461.8 L449.5 453.6 L451.0 447.8 L452.5 448.2 L454.0 453.1 L455.5 462.2 L457.0 460.9 L458.5 452.3 L460.0 450.3 L461.5 453.2 L463.0 459.1 L464.5 463.3 L466.0 455.5 L467.5 448.3 L469.0 453.6 L470.5 456.9 L472.0 464.5 L473.5 456.3 L475.0 450.5 L476.5 447.2 L478.0 452.3 L479.5 455.7 L481.0 455.3 L482.5 449.7 L484.0 441.7 L485.5 445.9 L487.0 447.5 L488.5 452.2 L490.0 443.9 L491.5 436.6 L493.0 439.1 L494.5 442.8 L496.0 447.1 L497.5 446.9 L499.0 438.6 L500.5 437.7 L502.0 441.4 L503.5 448.9 L505.0 452.8 L506.5 447.8 L508.0 441.1 L509.5 447.6 L511.0 450.3 L512.5 457.0 L514.0 454.2 L515.5 444.5 L517.0 443.8 L518.5 447.6 L520.0 454.6 L521.5 452.2 L523.0 445.0 L524.5 439.0 L526.0 445.1 L527.5 447.0 L529.0 451.0 L530.5 443.3 L532.0 436.1 L533.5 438.0 L535.0 441.6 L536.5 446.4 L538.0 445.5 L539.5 436.2 L541.0 433.6 L542.5 437.7 L544.0 444.0 L545.5 446.1 L547.0 440.7 L548.5 435.7 L550.0 438.3 L551.5 442.8 L553.0 449.4 L554.5 444.8 L556.0 436.3 L557.5 435.8 L559.0 439.7 L560.5 442.0 L562.0 444.7 L563.5 437.2 L565.0 430.2 L566.5 435.0 L568.0 437.0 L569.5 440.3 L571.0 436.4 L572.5 429.6 L574.0 429.8 L575.5 434.2 L577.0 439.1 L578.5 437.3 L580.0 430.2 L581.5 426.1 L583.0 432.2 L584.5 438.1 L586.0 441.6 L587.5 433.2 L589.0 429.0 L590.5 430.7 L592.0 435.3 L593.5 442.2 L595.0 438.1 L596.5 434.4 L598.0 434.4 L599.5 439.6 L601.0 448.9 L602.5 448.5 L604.0 446.6 L605.5 443.0 L607.0 448.4 L608.5 453.3 L610.0 458.3 L611.5 455.8 L613.0 448.2 L614.5 451.6 L616.0 453.4 L617.5 460.2 L619.0 457.0 L620.5 455.1 L622.0 449.4 L623.5 454.8 L625.0 457.9 L626.5 463.2 L628.0 458.8 L629.5 455.1 L631.0 456.1 L632.5 458.0 L634.0 462.8 L635.5 457.4 L637.0 452.5 L638.5 451.4 L640.0 454.3 L641.5 459.4 L643.0 459.6 L644.5 453.6 L646.0 450.0 L647.5 452.3 L649.0 456.9 L650.5 460.0 L652.0 454.6 L653.5 446.8 L655.0 449.0 L656.5 453.0 L658.0 456.8 L659.5 457.6 L661.0 452.1 L662.5 447.6 L664.0 450.4 L665.5 454.5 L667.0 454.0 L668.5 448.1 L670.0 442.1 L671.5 446.9 L673.0 448.5 L674.5 454.3 L676.0 452.8 L677.5 446.7 L679.0 446.4 L680.5 448.9 L682.0 455.6 L683.5 457.5 L685.0 452.1 L686.5 448.2 L688.0 450.8 L689.5 453.4 L691.0 458.4 L692.5 451.6 L694.0 447.9 L695.5 446.9 L697.0 451.1 L698.5 452.7 L700.0 450.2 L701.5 445.6 L703.0 440.9 L704.5 444.3 L706.0 448.5 L707.5 449.5 L709.0 443.8 L710.5 436.2 L712.0 437.7 L713.5 441.2 L715.0 444.1 L716.5 440.6 L718.0 437.2 L719.5 437.7 L721.0 437.5 L722.5 442.1 L724.0 444.2 L725.5 437.5 L727.0 433.7 L728.5 438.1 L730.0 441.6 L731.5 447.3 L733.0 441.6 L734.5 437.5 L736.0 440.1 L737.5 443.5 L739.0 451.6 L740.5 449.5 L742.0 444.3 L743.5 444.0 L745.0 448.4 L746.5 451.3 L748.0 455.6 L749.5 450.5 L751.0 448.9 L752.5 451.4 L754.0 453.8 L755.5 455.9 L757.0 454.2 L758.5 446.6 L760.0 445.5 L761.5 448.3 L763.0 454.0 L764.5 455.4 L766.0 448.2 L767.5 444.8 L769.0 445.8 L770.5 449.3 L772.0 455.6 L773.5 449.7 L775.0 444.2 L776.5 444.6 L778.0 447.1 L779.5 450.7 L781.0 450.6 L782.5 442.4 L784.0 442.7 L785.5 444.9 L787.0 449.6 L788.5 451.0 L790.0 448.9 L791.5 445.6 L793.0 445.8 L794.5 446.8 L796.0 452.2 L797.5 448.6 L799.0 445.5 L800.5 444.4 L802.0 450.2 L803.5 452.7 L805.0 455.4 L806.5 449.2 L808.0 445.7 L809.5 448.5 L811.0 453.7 L812.5 460.9 L814.0 456.1 L815.5 449.1 L817.0 451.7 L818.5 454.3 L820.0 459.9 L821.5 459.7 L823.0 454.5 L824.5 449.8 L826.0 454.0 L827.5 456.8 L829.0 459.2 L830.5 453.3 L832.0 448.5 L833.5 450.8 L835.0 451.9 L836.5 457.8 L838.0 454.6 L839.5 445.9 L841.0 442.6 L842.5 449.0 L844.0 449.3 L845.5 447.4 L847.0 442.5 L848.5 435.5 L850.0 437.2 L851.5 439.1 L853.0 447.6 L854.5 441.1 L856.0 435.3 L857.5 434.1 L859.0 438.1 L860.5 444.9 L862.0 444.4 L863.5 440.5 L865.0 437.6 L866.5 441.1 L868.0 446.6 L869.5 449.8 L871.0 445.7 L872.5 439.3 L874.0 443.8 L875.5 449.0 L877.0 453.7 L878.5 453.8 L880.0 446.4 L881.5 444.2 L883.0 448.4 L884.5 451.3 L886.0 451.8 L887.5 446.3 L889.0 441.1 L890.5 442.3 L892.0 447.3 L893.5 453.7 L895.0 446.8 L896.5 442.1 L898.0 440.2 L899.5 442.5 L901.0 447.0 L902.5 448.1 L904.0 441.6 L905.5 437.3 L907.0 444.2 L908.5 447.9 L910.0 451.5 L911.5 445.0 L913.0 442.6 L914.5 446.0 L916.0 450.0 L917.5 455.7 L919.0 453.1 L920.5 445.5 L922.0 442.1 L923.5 449.2 L925.0 453.7 L926.5 455.1 L928.0 450.2 L929.5 445.8 L931.0 447.6 L932.5 452.5 L934.0 457.6 L935.5 452.1 L937.0 443.6 L938.5 444.6 L940.0 450.6 L941.5 454.1 L943.0 455.0 L944.5 445.1 L946.0 442.7 L947.5 446.6 L949.0 451.1 L950.5 455.7 L952.0 449.8 L953.5 443.6 L955.0 446.2 L956.5 452.0 L958.0 457.1 L959.5 450.5 L961.0 446.4 L962.5 443.4 L964.0 448.7 L965.5 452.1 L967.0 453.9 L968.5 445.3 L970.0 442.2 L971.5 443.8 L973.0 449.5 L974.5 454.3 L976.0 449.5 L977.5 440.4 L979.0 441.3 L980.5 447.2 L982.0 455.1 L983.5 455.2 L985.0 449.0 L986.5 444.2 L988.0 450.1 L989.5 455.1 L991.0 458.4 L992.5 454.3 L994.0 448.7 L995.5 449.3 L997.0 453.2 L998.5 456.8 L1000.0 453.8 L1001.5 443.2 L1003.0 440.6 L1004.5 449.0 L1006.0 453.9 L1007.5 456.1 L1009.0 449.2 L1010.5 441.0 L1012.0 445.4 L1013.5 450.0 L1015.0 457.2 L1016.5 450.9 L1018.0 443.2 L1019.5 445.0 L1021.0 448.8 L1022.5 456.6 L1024.0 454.9 L1025.5 445.9 L1027.0 441.4 L1028.5 446.8 L1030.0 453.8 L1031.5 459.8 L1033.0 450.0 L1034.5 443.7 L1036.0 446.3 L1037.5 449.9 L1039.0 456.8 L1040.5 455.7 L1042.0 447.7 L1043.5 443.4 L1045.0 450.3 L1046.5 455.1 L1048.0 455.4 L1049.5 448.5 L1051.0 443.3 L1052.5 447.4 L1054.0 453.2 L1055.5 458.2 L1057.0 451.9 L1058.5 445.8 L1060.0 444.5 L1061.5 449.0 L1063.0 455.4 L1064.5 453.2 L1066.0 444.8 L1067.5 441.7 L1069.0 445.9 L1070.5 449.5 L1072.0 452.5 L1073.5 445.9 L1075.0 440.1 L1076.5 442.2 L1078.0 447.0 L1079.5 453.5 L1081.0 451.4 L1082.5 441.7 L1084.0 439.8 L1085.5 441.9 L1087.0 445.6 L1088.5 448.7 L1090.0 440.4 L1091.5 435.8 L1093.0 440.7 L1094.5 445.9 L1096.0 452.7 L1097.5 448.1 L1099.0 442.3 L1100.5 442.1 L1102.0 448.3 L1103.5 453.9 L1105.0 454.4 L1106.5 447.6 L1108.0 443.9 L1109.5 449.5 L1111.0 454.3 L1112.5 461.8 L1114.0 453.4 L1115.5 446.2 L1117.0 447.4 L1118.5 453.6 L1120.0 459.9 L1121.5 455.9 L1123.0 446.7 L1124.5 445.3 L1126.0 451.5 L1127.5 456.1 L1129.0 460.9 L1130.5 451.1 L1132.0 445.2 L1133.5 448.8 L1135.0 454.3 L1136.5 459.9 L1138.0 454.5 L1139.5 446.0 L1141.0 446.6 L1142.5 448.9 L1144.0 454.4 L1145.5 453.0 L1147.0 441.3 L1148.5 438.1 L1150.0 443.6 L1151.5 447.8 L1153.0 454.5 L1154.5 444.8 L1156.0 441.7 L1157.5 441.6 L1159.0 445.9 L1160.5 453.1 L1162.0 452.6 L1163.5 443.3 L1165.0 442.1 L1166.5 446.9 L1168.0 451.8 L1169.5 455.3 L1171.0 448.6 L1172.5 444.1 L1174.0 445.2 L1175.5 450.0 L1177.0 458.4 L1178.5 452.5 L1180.0 445.3 L1181.5 443.5 L1183.0 446.5 L1184.5 455.0 L1186.0 456.3 L1187.5 447.6 L1189.0 443.4 L1190.5 448.1 L1192.0 452.0 L1193.5 459.3 L1195.0 450.3 L1196.5 443.7 L1198.0 444.4 L1199.5 448.4 L1201.0 455.2 L1202.5 450.7 L1204.0 442.4 L1205.5 437.8 L1207.0 443.0 L1208.5 451.1 L1210.0 453.1 L1211.5 446.7 L1213.0 440.3 L1214.5 443.8 L1216.0 445.2 L1217.5 453.3 L1219.0 447.1 L1220.5 444.0 L1222.0 442.6 L1223.5 446.8 L1225.0 455.2 L1226.5 455.1 L1228.0 446.6 L1229.5 439.9 L1231.0 443.4 L1232.5 448.4 L1234.0 455.8 L1235.5 448.2 L1237.0 444.8 L1238.5 446.0 L1240.0 450.2 L1241.5 456.8 L1243.0 456.2 L1244.5 447.5 L1246.0 442.3 L1247.5 446.1 L1249.0 451.3 L1250.5 451.2 L1252.0 446.1 L1253.5 439.9 L1255.0 442.0 L1256.5 448.2 L1258.0 453.0 L1259.5 449.8 L1261.0 442.7 L1262.5 444.0 L1264.0 449.3 L1265.5 452.0 L1267.0 452.4 L1268.5 446.3 L1270.0 441.2 L1271.5 443.8 L1273.0 449.9" fill="none" stroke="#00ff00" stroke-width="1.1" shape-rendering="crispEdges"/>
<path d="M283.0 404.5 L284.5 410.7 L286.0 414.6 L287.5 411.4 L289.0 409.8 L290.5 411.0 L292.0 417.0 L293.5 425.7 L295.0 420.5 L296.5 413.1 L298.0 410.8 L299.5 416.4 L301.0 420.6 L302.5 421.6 L304.0 414.0 L305.5 408.8 L307.0 414.9 L308.5 418.7 L310.0 424.1 L311.5 419.0 L313.0 411.4 L314.5 411.4 L316.0 417.6 L317.5 424.1 L319.0 423.7 L320.5 417.6 L322.0 414.2 L323.5 420.3 L325.0 425.6 L326.5 428.8 L328.0 424.3 L329.5 420.8 L331.0 422.9 L332.5 427.1 L334.0 433.8 L335.5 431.7 L337.0 426.3 L338.5 422.8 L340.0 428.3 L341.5 432.6 L343.0 433.3 L344.5 426.4 L346.0 422.7 L347.5 426.5 L349.0 431.0 L350.5 436.3 L352.0 428.3 L353.5 422.9 L355.0 423.6 L356.5 425.2 L358.0 429.3 L359.5 428.7 L361.0 420.9 L362.5 418.0 L364.0 417.6 L365.5 421.5 L367.0 423.7 L368.5 418.4 L370.0 410.8 L371.5 414.0 L373.0 417.9 L374.5 424.5 L376.0 421.3 L377.5 415.9 L379.0 414.8 L380.5 419.2 L382.0 425.1 L383.5 430.8 L385.0 422.7 L386.5 421.7 L388.0 426.0 L389.5 430.9 L391.0 436.8 L392.5 430.4 L394.0 423.8 L395.5 426.3 L397.0 430.3 L398.5 434.3 L400.0 434.6 L401.5 428.1 L403.0 422.6 L404.5 425.4 L406.0 430.1 L407.5 432.3 L409.0 426.9 L410.5 421.5 L412.0 422.3 L413.5 426.7 L415.0 429.6 L416.5 427.3 L418.0 421.2 L419.5 418.0 L421.0 423.9 L422.5 428.0 L424.0 431.7 L425.5 421.6 L427.0 421.2 L428.5 423.1 L430.0 428.4 L431.5 434.6 L433.0 427.8 L434.5 421.9 L436.0 423.0 L437.5 428.9 L439.0 433.4 L440.5 433.1 L442.0 425.8 L443.5 423.4 L445.0 426.8 L446.5 432.5 L448.0 434.5 L449.5 428.7 L451.0 424.4 L452.5 424.6 L454.0 429.7 L455.5 433.4 L457.0 431.7 L458.5 424.5 L460.0 423.3 L461.5 428.9 L463.0 432.5 L464.5 435.0 L466.0 427.0 L467.5 421.5 L469.0 426.5 L470.5 428.0 L472.0 432.6 L473.5 430.3 L475.0 424.4 L476.5 423.4 L478.0 426.9 L479.5 427.0 L481.0 428.1 L482.5 421.5 L484.0 417.2 L485.5 417.6 L487.0 420.8 L488.5 425.8 L490.0 420.2 L491.5 415.0 L493.0 416.4 L494.5 420.0 L496.0 424.6 L497.5 423.1 L499.0 415.4 L500.5 413.0 L502.0 418.9 L503.5 421.9 L505.0 424.8 L506.5 420.7 L508.0 419.7 L509.5 420.5 L511.0 425.6 L512.5 428.2 L514.0 425.6 L515.5 421.4 L517.0 420.5 L518.5 423.1 L520.0 426.4 L521.5 425.6 L523.0 418.9 L524.5 413.9 L526.0 417.9 L527.5 421.9 L529.0 423.0 L530.5 419.5 L532.0 411.6 L533.5 413.1 L535.0 414.4 L536.5 418.6 L538.0 415.4 L539.5 409.7 L541.0 406.6 L542.5 409.0 L544.0 412.8 L545.5 412.8 L547.0 406.5 L548.5 401.5 L550.0 401.3 L551.5 406.8 L553.0 411.1 L554.5 406.0 L556.0 401.6 L557.5 401.3 L559.0 404.5 L560.5 407.6 L562.0 409.7 L563.5 403.5 L565.0 398.7 L566.5 403.2 L568.0 403.6 L569.5 408.3 L571.0 402.3 L572.5 400.6 L574.0 400.0 L575.5 405.5 L577.0 407.9 L578.5 406.6 L580.0 401.9 L581.5 398.7 L583.0 404.1 L584.5 408.1 L586.0 412.2 L587.5 406.3 L589.0 402.2 L590.5 407.6 L592.0 410.4 L593.5 415.6 L595.0 414.9 L596.5 408.9 L598.0 408.7 L599.5 414.6 L601.0 418.1 L602.5 421.4 L604.0 420.0 L605.5 418.1 L607.0 418.2 L608.5 426.6 L610.0 431.3 L611.5 429.2 L613.0 424.4 L614.5 426.2 L616.0 432.7 L617.5 434.5 L619.0 433.0 L620.5 427.9 L622.0 425.2 L623.5 430.4 L625.0 435.5 L626.5 435.9 L628.0 431.2 L629.5 425.8 L631.0 427.5 L632.5 434.2 L634.0 440.3 L635.5 435.7 L637.0 429.4 L638.5 427.4 L640.0 431.1 L641.5 433.9 L643.0 435.5 L644.5 427.1 L646.0 423.3 L647.5 427.0 L649.0 429.7 L650.5 433.5 L652.0 430.5 L653.5 424.1 L655.0 424.5 L656.5 426.2 L658.0 431.4 L659.5 429.4 L661.0 422.9 L662.5 418.4 L664.0 422.3 L665.5 427.0 L667.0 430.4 L668.5 422.6 L670.0 416.7 L671.5 419.2 L673.0 421.3 L674.5 427.9 L676.0 423.7 L677.5 416.3 L679.0 416.8 L680.5 419.5 L682.0 424.1 L683.5 426.4 L685.0 419.5 L686.5 413.6 L688.0 419.8 L689.5 421.2 L691.0 427.1 L692.5 422.7 L694.0 416.0 L695.5 415.5 L697.0 418.7 L698.5 423.1 L700.0 421.4 L701.5 413.6 L703.0 408.0 L704.5 412.0 L706.0 413.1 L707.5 415.9 L709.0 409.1 L710.5 403.3 L712.0 408.6 L713.5 410.4 L715.0 415.0 L716.5 411.4 L718.0 402.8 L719.5 403.9 L721.0 408.0 L722.5 413.7 L724.0 412.7 L725.5 406.3 L727.0 401.6 L728.5 404.3 L730.0 407.8 L731.5 413.6 L733.0 411.7 L734.5 403.4 L736.0 406.0 L737.5 410.4 L739.0 416.7 L740.5 416.2 L742.0 412.1 L743.5 411.5 L745.0 417.1 L746.5 422.6 L748.0 426.8 L749.5 422.2 L751.0 416.4 L752.5 418.9 L754.0 421.8 L755.5 429.9 L757.0 425.9 L758.5 417.7 L760.0 416.4 L761.5 419.3 L763.0 424.7 L764.5 426.8 L766.0 418.3 L767.5 412.9 L769.0 417.2 L770.5 419.5 L772.0 425.5 L773.5 418.6 L775.0 413.9 L776.5 412.2 L778.0 414.5 L779.5 422.4 L781.0 419.1 L782.5 410.9 L784.0 406.1 L785.5 414.5 L787.0 419.7 L788.5 422.3 L790.0 417.0 L791.5 411.9 L793.0 415.6 L794.5 419.5 L796.0 424.9 L797.5 424.1 L799.0 416.5 L800.5 411.7 L802.0 415.9 L803.5 422.1 L805.0 423.5 L806.5 417.7 L808.0 411.8 L809.5 417.8 L811.0 420.2 L812.5 427.4 L814.0 422.7 L815.5 417.6 L817.0 417.4 L818.5 423.3 L820.0 432.0 L821.5 428.9 L823.0 423.3 L824.5 421.4 L826.0 424.6 L827.5 433.1 L829.0 438.5 L830.5 427.2 L832.0 422.9 L833.5 425.1 L835.0 430.1 L836.5 434.5 L838.0 431.4 L839.5 421.4 L841.0 418.4 L842.5 420.9 L844.0 425.6 L845.5 426.0 L847.0 414.6 L848.5 408.6 L850.0 412.8 L851.5 417.3 L853.0 425.9 L854.5 419.9 L856.0 408.9 L857.5 409.2 L859.0 417.7 L860.5 423.1 L862.0 423.4 L863.5 414.7 L865.0 412.7 L866.5 417.8 L868.0 425.0 L869.5 431.7 L871.0 422.6 L872.5 418.4 L874.0 419.9 L875.5 424.6 L877.0 428.7 L878.5 427.4 L880.0 419.1 L881.5 416.1 L883.0 418.3 L884.5 425.9 L886.0 426.3 L887.5 417.7 L889.0 411.6 L890.5 415.3 L892.0 422.2 L893.5 429.5 L895.0 420.2 L896.5 415.1 L898.0 415.2 L899.5 420.2 L901.0 426.6 L902.5 426.7 L904.0 418.7 L905.5 414.4 L907.0 422.4 L908.5 425.5 L910.0 430.6 L911.5 422.3 L913.0 416.9 L914.5 420.4 L916.0 424.3 L917.5 432.6 L919.0 431.5 L920.5 421.9 L922.0 418.6 L923.5 423.6 L925.0 429.9 L926.5 432.2 L928.0 424.6 L929.5 418.3 L931.0 423.8 L932.5 426.9 L934.0 434.9 L935.5 428.4 L937.0 421.5 L938.5 423.6 L940.0 427.3 L941.5 437.8 L943.0 435.5 L944.5 426.4 L946.0 422.6 L947.5 425.0 L949.0 433.4 L950.5 438.3 L952.0 431.6 L953.5 425.4 L955.0 427.4 L956.5 431.7 L958.0 440.9 L959.5 435.1 L961.0 427.2 L962.5 423.5 L964.0 429.3 L965.5 434.5 L967.0 437.2 L968.5 429.0 L970.0 426.3 L971.5 429.4 L973.0 434.6 L974.5 441.5 L976.0 435.6 L977.5 427.7 L979.0 429.0 L980.5 431.3 L982.0 438.5 L983.5 438.3 L985.0 430.2 L986.5 424.0 L988.0 429.9 L989.5 433.4 L991.0 438.1 L992.5 430.0 L994.0 421.0 L995.5 424.3 L997.0 427.1 L998.5 434.7 L1000.0 430.1 L1001.5 422.3 L1003.0 419.0 L1004.5 426.6 L1006.0 435.6 L1007.5 436.1 L1009.0 428.4 L1010.5 423.0 L1012.0 426.6 L1013.5 431.0 L1015.0 438.1 L1016.5 434.1 L1018.0 423.7 L1019.5 422.8 L1021.0 428.7 L1022.5 433.0 L1024.0 431.0 L1025.5 424.3 L1027.0 417.0 L1028.5 422.6 L1030.0 427.9 L1031.5 430.6 L1033.0 425.2 L1034.5 418.5 L1036.0 421.4 L1037.5 424.1 L1039.0 431.2 L1040.5 429.1 L1042.0 421.1 L1043.5 418.6 L1045.0 424.0 L1046.5 428.9 L1048.0 432.4 L1049.5 426.1 L1051.0 421.0 L1052.5 422.9 L1054.0 427.6 L1055.5 435.4 L1057.0 430.1 L1058.5 419.6 L1060.0 420.1 L1061.5 423.5 L1063.0 428.4 L1064.5 429.2 L1066.0 422.4 L1067.5 414.1 L1069.0 419.9 L1070.5 424.4 L1072.0 428.6 L1073.5 422.3 L1075.0 414.8 L1076.5 418.3 L1078.0 422.4 L1079.5 427.2 L1081.0 424.8 L1082.5 415.1 L1084.0 409.9 L1085.5 416.8 L1087.0 421.6 L1088.5 423.6 L1090.0 416.9 L1091.5 411.5 L1093.0 415.2 L1094.5 420.5 L1096.0 427.3 L1097.5 421.8 L1099.0 418.8 L1100.5 416.0 L1102.0 421.6 L1103.5 427.5 L1105.0 427.7 L1106.5 420.2 L1108.0 417.0 L1109.5 422.0 L1111.0 428.2 L1112.5 431.5 L1114.0 424.8 L1115.5 419.2 L1117.0 420.4 L1118.5 424.1 L1120.0 432.1 L1121.5 428.8 L1123.0 419.8 L1124.5 417.8 L1126.0 422.5 L1127.5 429.5 L1129.0 433.8 L1130.5 424.5 L1132.0 420.0 L1133.5 422.3 L1135.0 426.3 L1136.5 431.6 L1138.0 426.5 L1139.5 417.2 L1141.0 418.0 L1142.5 422.8 L1144.0 429.3 L1145.5 429.8 L1147.0 422.6 L1148.5 420.0 L1150.0 421.5 L1151.5 427.7 L1153.0 430.6 L1154.5 424.4 L1156.0 418.8 L1157.5 420.7 L1159.0 425.8 L1160.5 429.6 L1162.0 425.7 L1163.5 419.5 L1165.0 416.0 L1166.5 422.5 L1168.0 427.0 L1169.5 430.6 L1171.0 423.3 L1172.5 417.1 L1174.0 419.5 L1175.5 422.4 L1177.0 430.5 L1178.5 422.0 L1180.0 415.3 L1181.5 416.5 L1183.0 420.1 L1184.5 427.5 L1186.0 426.1 L1187.5 418.8 L1189.0 415.3 L1190.5 418.8 L1192.0 422.5 L1193.5 427.7 L1195.0 420.6 L1196.5 417.8 L1198.0 416.8 L1199.5 419.4 L1201.0 427.8 L1202.5 426.2 L1204.0 419.6 L1205.5 417.0 L1207.0 419.2 L1208.5 426.0 L1210.0 432.2 L1211.5 424.5 L1213.0 420.8 L1214.5 422.3 L1216.0 427.6 L1217.5 431.8 L1219.0 425.9 L1220.5 417.9 L1222.0 418.8 L1223.5 425.3 L1225.0 428.0 L1226.5 431.5 L1228.0 423.6 L1229.5 417.5 L1231.0 423.2 L1232.5 426.7 L1234.0 432.1 L1235.5 422.1 L1237.0 418.6 L1238.5 417.4 L1240.0 420.7 L1241.5 427.1 L1243.0 427.8 L1244.5 419.8 L1246.0 419.5 L1247.5 421.7 L1249.0 426.1 L1250.5 426.8 L1252.0 421.3 L1253.5 417.1 L1255.0 418.8 L1256.5 423.8 L1258.0 428.9 L1259.5 423.2 L1261.0 417.6 L1262.5 416.5 L1264.0 418.7 L1265.5 422.7 L1267.0 425.6 L1268.5 418.7 L1270.0 416.6 L1271.5 419.2 L1273.0 423.2" fill="none" stroke="#0000ff" stroke-width="1.1" shape-rendering="crispEdges"/>
<path d="M283.0 376.9 L284.5 383.9 L286.0 391.7 L287.5 385.2 L289.0 383.2 L290.5 388.3 L292.0 392.8 L293.5 402.4 L295.0 398.5 L296.5 390.5 L298.0 389.4 L299.5 394.5 L301.0 397.0 L302.5 397.2 L304.0 387.4 L305.5 382.3 L307.0 384.9 L308.5 390.3 L310.0 395.9 L311.5 390.1 L313.0 385.5 L314.5 383.1 L316.0 389.5 L317.5 396.1 L319.0 398.1 L320.5 392.9 L322.0 390.2 L323.5 394.8 L325.0 400.5 L326.5 409.3 L328.0 400.5 L329.5 397.7 L331.0 401.3 L332.5 402.5 L334.0 411.4 L335.5 407.8 L337.0 399.5 L338.5 395.2 L340.0 401.2 L341.5 406.4 L343.0 410.2 L344.5 402.0 L346.0 396.7 L347.5 399.1 L349.0 402.5 L350.5 411.1 L352.0 405.0 L353.5 397.2 L355.0 395.7 L356.5 397.5 L358.0 402.3 L359.5 402.2 L361.0 394.8 L362.5 386.4 L364.0 390.1 L365.5 395.7 L367.0 398.6 L368.5 392.2 L370.0 385.0 L371.5 386.5 L373.0 389.9 L374.5 398.2 L376.0 397.1 L377.5 388.5 L379.0 386.4 L380.5 393.2 L382.0 398.5 L383.5 403.4 L385.0 398.2 L386.5 393.1 L388.0 400.2 L389.5 404.9 L391.0 414.3 L392.5 408.3 L394.0 401.7 L395.5 403.1 L397.0 405.3 L398.5 411.3 L400.0 410.5 L401.5 402.9 L403.0 397.7 L404.5 400.8 L406.0 404.8 L407.5 408.4 L409.0 401.6 L410.5 393.5 L412.0 394.5 L413.5 398.1 L415.0 402.5 L416.5 403.5 L418.0 394.7 L419.5 395.0 L421.0 399.4 L422.5 402.9 L424.0 406.2 L425.5 400.5 L427.0 395.0 L428.5 401.9 L430.0 404.1 L431.5 411.4 L433.0 406.7 L434.5 399.3 L436.0 397.1 L437.5 403.9 L439.0 410.2 L440.5 409.4 L442.0 402.6 L443.5 396.8 L445.0 400.3 L446.5 404.6 L448.0 410.9 L449.5 403.3 L451.0 399.4 L452.5 400.1 L454.0 403.1 L455.5 409.7 L457.0 408.5 L458.5 403.4 L460.0 399.4 L461.5 406.3 L463.0 412.5 L464.5 413.6 L466.0 408.4 L467.5 402.9 L469.0 405.3 L470.5 409.8 L472.0 415.9 L473.5 410.4 L475.0 404.2 L476.5 403.3 L478.0 406.2 L479.5 408.4 L481.0 407.8 L482.5 399.9 L484.0 394.1 L485.5 396.8 L487.0 398.7 L488.5 401.0 L490.0 393.4 L491.5 387.6 L493.0 388.2 L494.5 391.3 L496.0 397.1 L497.5 395.2 L499.0 389.7 L500.5 384.6 L502.0 393.4 L503.5 397.4 L505.0 399.5 L506.5 395.2 L508.0 390.6 L509.5 391.9 L511.0 396.8 L512.5 403.0 L514.0 397.9 L515.5 391.0 L517.0 391.0 L518.5 395.7 L520.0 399.5 L521.5 400.5 L523.0 393.2 L524.5 389.0 L526.0 392.4 L527.5 394.9 L529.0 400.7 L530.5 396.1 L532.0 388.8 L533.5 388.8 L535.0 391.5 L536.5 394.9 L538.0 391.5 L539.5 387.1 L541.0 380.9 L542.5 385.4 L544.0 389.0 L545.5 391.4 L547.0 383.9 L548.5 380.2 L550.0 384.5 L551.5 386.1 L553.0 391.6 L554.5 386.6 L556.0 382.9 L557.5 380.7 L559.0 385.1 L560.5 390.3 L562.0 390.7 L563.5 383.2 L565.0 379.2 L566.5 383.5 L568.0 387.8 L569.5 391.5 L571.0 387.9 L572.5 383.7 L574.0 383.8 L575.5 386.6 L577.0 389.6 L578.5 387.7 L580.0 380.9 L581.5 380.6 L583.0 383.1 L584.5 387.4 L586.0 391.3 L587.5 384.0 L589.0 381.4 L590.5 383.1 L592.0 385.1 L593.5 393.4 L595.0 390.1 L596.5 385.2 L598.0 381.9 L599.5 390.4 L601.0 393.4 L602.5 394.1 L604.0 391.2 L605.5 389.3 L607.0 392.9 L608.5 395.9 L610.0 401.5 L611.5 398.0 L613.0 395.2 L614.5 397.8 L616.0 399.8 L617.5 404.2 L619.0 405.0 L620.5 397.5 L622.0 395.6 L623.5 400.2 L625.0 404.9 L626.5 409.0 L628.0 406.6 L629.5 402.7 L631.0 404.9 L632.5 408.9 L634.0 414.1 L635.5 410.0 L637.0 404.4 L638.5 404.1 L640.0 406.2 L641.5 411.2 L643.0 413.6 L644.5 408.1 L646.0 402.7 L647.5 405.1 L649.0 406.5 L650.5 411.3 L652.0 405.8 L653.5 397.8 L655.0 396.6 L656.5 401.6 L658.0 405.5 L659.5 402.3 L661.0 397.3 L662.5 395.4 L664.0 397.0 L665.5 399.8 L667.0 402.0 L668.5 394.4 L670.0 389.8 L671.5 389.4 L673.0 392.6 L674.5 398.0 L676.0 394.5 L677.5 390.3 L679.0 386.3 L680.5 391.0 L682.0 394.3 L683.5 396.9 L685.0 389.9 L686.5 387.5 L688.0 391.3 L689.5 392.8 L691.0 396.5 L692.5 393.4 L694.0 388.3 L695.5 387.5 L697.0 390.0 L698.5 392.4 L700.0 393.7 L701.5 389.1 L703.0 384.9 L704.5 387.2 L706.0 390.8 L707.5 393.6 L709.0 387.0 L710.5 383.2 L712.0 383.3 L713.5 386.3 L715.0 391.7 L716.5 387.6 L718.0 382.6 L719.5 381.3 L721.0 382.7 L722.5 388.6 L724.0 389.2 L725.5 384.5 L727.0 380.8 L728.5 382.2 L730.0 384.5 L731.5 391.7 L733.0 387.9 L734.5 384.1 L736.0 382.7 L737.5 386.2 L739.0 394.4 L740.5 393.9 L742.0 387.5 L743.5 386.1 L745.0 392.3 L746.5 395.4 L748.0 401.0 L749.5 396.6 L751.0 391.6 L752.5 396.3 L754.0 396.9 L755.5 404.8 L757.0 399.9 L758.5 393.5 L760.0 392.2 L761.5 395.0 L763.0 397.7 L764.5 398.9 L766.0 393.0 L767.5 388.2 L769.0 392.0 L770.5 393.7 L772.0 397.9 L773.5 394.5 L775.0 387.2 L776.5 388.4 L778.0 393.9 L779.5 397.2 L781.0 399.4 L782.5 391.0 L784.0 387.2 L785.5 393.5 L787.0 398.1 L788.5 400.0 L790.0 394.3 L791.5 390.8 L793.0 394.4 L794.5 397.9 L796.0 399.6 L797.5 396.6 L799.0 390.4 L800.5 387.7 L802.0 392.7 L803.5 398.3 L805.0 399.8 L806.5 393.2 L808.0 389.2 L809.5 393.3 L811.0 394.6 L812.5 398.0 L814.0 395.3 L815.5 391.5 L817.0 389.5 L818.5 395.5 L820.0 403.4 L821.5 405.2 L823.0 398.2 L824.5 396.5 L826.0 401.7 L827.5 406.8 L829.0 411.9 L830.5 403.7 L832.0 399.9 L833.5 400.5 L835.0 405.8 L836.5 408.2 L838.0 404.0 L839.5 397.4 L841.0 392.1 L842.5 395.4 L844.0 397.0 L845.5 398.4 L847.0 389.8 L848.5 384.1 L850.0 389.4 L851.5 393.1 L853.0 395.8 L854.5 392.0 L856.0 387.7 L857.5 385.2 L859.0 391.6 L860.5 396.3 L862.0 396.2 L863.5 389.1 L865.0 386.0 L866.5 394.3 L868.0 397.9 L869.5 400.4 L871.0 394.7 L872.5 387.5 L874.0 392.1 L875.5 395.8 L877.0 401.9 L878.5 396.9 L880.0 390.0 L881.5 389.1 L883.0 390.8 L884.5 396.9 L886.0 397.4 L887.5 389.3 L889.0 383.6 L890.5 388.7 L892.0 389.8 L893.5 396.7 L895.0 390.4 L896.5 383.8 L898.0 385.8 L899.5 390.7 L901.0 398.3 L902.5 398.2 L904.0 391.5 L905.5 388.3 L907.0 395.0 L908.5 400.1 L910.0 407.2 L911.5 399.0 L913.0 393.0 L914.5 397.5 L916.0 401.1 L917.5 407.5 L919.0 402.6 L920.5 396.5 L922.0 393.2 L923.5 398.4 L925.0 403.0 L926.5 405.9 L928.0 400.5 L929.5 396.1 L931.0 399.4 L932.5 403.6 L934.0 410.5 L935.5 405.5 L937.0 398.0 L938.5 400.1 L940.0 405.7 L941.5 413.0 L943.0 413.2 L944.5 406.8 L946.0 401.5 L947.5 406.7 L949.0 409.1 L950.5 414.9 L952.0 409.2 L953.5 405.9 L955.0 405.3 L956.5 409.6 L958.0 415.2 L959.5 413.1 L961.0 404.0 L962.5 404.4 L964.0 408.6 L965.5 412.2 L967.0 414.5 L968.5 407.5 L970.0 401.4 L971.5 407.6 L973.0 411.7 L974.5 416.8 L976.0 412.5 L977.5 406.8 L979.0 407.0 L980.5 410.9 L982.0 420.1 L983.5 416.1 L985.0 407.4 L986.5 402.4 L988.0 405.2 L989.5 409.9 L991.0 413.3 L992.5 407.1 L994.0 401.7 L995.5 400.8 L997.0 403.8 L998.5 411.5 L1000.0 408.3 L1001.5 399.3 L1003.0 398.0 L1004.5 403.8 L1006.0 407.2 L1007.5 411.8 L1009.0 402.6 L1010.5 395.7 L1012.0 401.0 L1013.5 403.8 L1015.0 409.3 L1016.5 402.6 L1018.0 393.2 L1019.5 392.8 L1021.0 395.6 L1022.5 402.3 L1024.0 400.5 L1025.5 392.1 L1027.0 387.0 L1028.5 391.3 L1030.0 395.1 L1031.5 401.7 L1033.0 392.9 L1034.5 388.6 L1036.0 391.2 L1037.5 394.5 L1039.0 400.7 L1040.5 401.2 L1042.0 391.6 L1043.5 389.1 L1045.0 394.2 L1046.5 397.6 L1048.0 401.6 L1049.5 393.9 L1051.0 387.5 L1052.5 389.8 L1054.0 395.8 L1055.5 402.2 L1057.0 394.0 L1058.5 386.7 L1060.0 387.6 L1061.5 393.7 L1063.0 399.5 L1064.5 398.5 L1066.0 390.9 L1067.5 386.2 L1069.0 392.2 L1070.5 395.2 L1072.0 398.7 L1073.5 393.3 L1075.0 384.2 L1076.5 387.1 L1078.0 390.0 L1079.5 399.8 L1081.0 397.0 L1082.5 388.3 L1084.0 386.9 L1085.5 391.4 L1087.0 397.8 L1088.5 400.9 L1090.0 388.5 L1091.5 383.9 L1093.0 388.4 L1094.5 392.8 L1096.0 401.2 L1097.5 394.0 L1099.0 387.9 L1100.5 385.3 L1102.0 389.9 L1103.5 400.0 L1105.0 403.0 L1106.5 394.6 L1108.0 390.4 L1109.5 394.7 L1111.0 401.6 L1112.5 405.1 L1114.0 398.6 L1115.5 393.6 L1117.0 393.4 L1118.5 397.5 L1120.0 403.5 L1121.5 401.3 L1123.0 392.5 L1124.5 389.4 L1126.0 396.3 L1127.5 401.7 L1129.0 402.5 L1130.5 398.8 L1132.0 392.3 L1133.5 395.4 L1135.0 398.4 L1136.5 406.3 L1138.0 400.2 L1139.5 392.1 L1141.0 390.9 L1142.5 396.5 L1144.0 401.3 L1145.5 401.0 L1147.0 394.0 L1148.5 386.6 L1150.0 393.4 L1151.5 398.5 L1153.0 403.6 L1154.5 396.5 L1156.0 389.2 L1157.5 392.0 L1159.0 395.4 L1160.5 401.6 L1162.0 399.4 L1163.5 393.3 L1165.0 389.0 L1166.5 393.6 L1168.0 400.5 L1169.5 402.0 L1171.0 393.8 L1172.5 389.7 L1174.0 392.1 L1175.5 398.2 L1177.0 406.4 L1178.5 400.5 L1180.0 391.6 L1181.5 393.0 L1183.0 398.0 L1184.5 404.8 L1186.0 406.2 L1187.5 399.7 L1189.0 393.7 L1190.5 398.9 L1192.0 405.1 L1193.5 407.9 L1195.0 401.9 L1196.5 395.9 L1198.0 394.2 L1199.5 398.1 L1201.0 402.1 L1202.5 398.5 L1204.0 389.4 L1205.5 386.4 L1207.0 392.3 L1208.5 397.9 L1210.0 402.4 L1211.5 395.0 L1213.0 388.7 L1214.5 391.3 L1216.0 395.9 L1217.5 404.1 L1219.0 399.6 L1220.5 392.2 L1222.0 389.6 L1223.5 394.3 L1225.0 400.3 L1226.5 399.0 L1228.0 392.8 L1229.5 386.0 L1231.0 391.7 L1232.5 393.6 L1234.0 399.9 L1235.5 392.0 L1237.0 386.3 L1238.5 389.9 L1240.0 392.4 L1241.5 400.9 L1243.0 396.6 L1244.5 388.6 L1246.0 383.9 L1247.5 390.5 L1249.0 394.4 L1250.5 398.3 L1252.0 390.6 L1253.5 385.3 L1255.0 388.8 L1256.5 392.2 L1258.0 398.9 L1259.5 395.7 L1261.0 387.1 L1262.5 386.8 L1264.0 391.4 L1265.5 396.6 L1267.0 396.5 L1268.5 389.1 L1270.0 384.3 L1271.5 392.0 L1273.0 394.4" fill="none" stroke="#00ff00" stroke-width="1.1" shape-rendering="crispEdges"/>
<path d="M283.0 356.1 L284.5 361.7 L286.0 367.9 L287.5 362.7 L289.0 358.6 L290.5 360.1 L292.0 363.3 L293.5 369.4 L295.0 366.6 L296.5 361.5 L298.0 359.9 L299.5 362.0 L301.0 364.7 L302.5 367.5 L304.0 361.5 L305.5 357.1 L307.0 359.1 L308.5 363.1 L310.0 368.7 L311.5 363.3 L313.0 357.1 L314.5 355.5 L316.0 359.0 L317.5 361.6 L319.0 363.9 L320.5 358.7 L322.0 351.6 L323.5 357.6 L325.0 360.8 L326.5 365.1 L328.0 362.4 L329.5 356.2 L331.0 359.9 L332.5 363.6 L334.0 369.9 L335.5 367.5 L337.0 365.9 L338.5 364.5 L340.0 369.9 L341.5 372.6 L343.0 375.3 L344.5 371.5 L346.0 371.5 L347.5 374.2 L349.0 380.7 L350.5 385.1 L352.0 380.8 L353.5 376.5 L355.0 374.5 L356.5 377.5 L358.0 380.1 L359.5 379.8 L361.0 371.3 L362.5 366.8 L364.0 366.8 L365.5 367.1 L367.0 372.4 L368.5 364.4 L370.0 359.0 L371.5 360.0 L373.0 362.2 L374.5 366.7 L376.0 364.3 L377.5 360.6 L379.0 358.5 L380.5 364.3 L382.0 369.6 L383.5 374.5 L385.0 372.2 L386.5 370.3 L388.0 374.5 L389.5 378.4 L391.0 385.4 L392.5 381.0 L394.0 376.2 L395.5 377.3 L397.0 379.3 L398.5 382.3 L400.0 383.2 L401.5 376.4 L403.0 371.3 L404.5 374.5 L406.0 377.3 L407.5 378.0 L409.0 371.8 L410.5 367.5 L412.0 369.6 L413.5 369.8 L415.0 374.4 L416.5 370.4 L418.0 368.2 L419.5 365.4 L421.0 366.9 L422.5 370.5 L424.0 372.7 L425.5 369.8 L427.0 364.9 L428.5 367.1 L430.0 369.3 L431.5 376.8 L433.0 372.3 L434.5 365.6 L436.0 367.3 L437.5 369.4 L439.0 375.2 L440.5 376.8 L442.0 370.1 L443.5 367.9 L445.0 371.2 L446.5 373.2 L448.0 376.1 L449.5 371.8 L451.0 367.5 L452.5 366.0 L454.0 372.7 L455.5 378.1 L457.0 376.1 L458.5 371.7 L460.0 371.3 L461.5 375.3 L463.0 380.5 L464.5 384.3 L466.0 379.9 L467.5 380.5 L469.0 380.9 L470.5 389.1 L472.0 392.4 L473.5 389.0 L475.0 383.7 L476.5 381.8 L478.0 381.8 L479.5 384.1 L481.0 381.5 L482.5 371.9 L484.0 365.9 L485.5 368.2 L487.0 370.4 L488.5 374.2 L490.0 367.6 L491.5 362.1 L493.0 361.6 L494.5 365.1 L496.0 370.0 L497.5 367.9 L499.0 360.2 L500.5 358.8 L502.0 364.7 L503.5 368.9 L505.0 373.4 L506.5 367.8 L508.0 362.4 L509.5 364.5 L511.0 369.7 L512.5 378.9 L514.0 373.7 L515.5 368.3 L517.0 366.0 L518.5 368.6 L520.0 372.8 L521.5 371.9 L523.0 364.3 L524.5 360.5 L526.0 361.1 L527.5 365.5 L529.0 365.6 L530.5 361.8 L532.0 354.4 L533.5 352.3 L535.0 358.8 L536.5 362.4 L538.0 360.2 L539.5 352.5 L541.0 349.7 L542.5 354.5 L544.0 358.9 L545.5 359.2 L547.0 352.1 L548.5 346.9 L550.0 350.4 L551.5 353.3 L553.0 359.9 L554.5 357.7 L556.0 348.6 L557.5 345.9 L559.0 353.2 L560.5 357.2 L562.0 357.2 L563.5 349.9 L565.0 344.7 L566.5 349.2 L568.0 354.8 L569.5 360.5 L571.0 353.2 L572.5 349.5 L574.0 351.1 L575.5 355.2 L577.0 359.9 L578.5 357.2 L580.0 349.4 L581.5 344.7 L583.0 349.3 L584.5 355.2 L586.0 357.8 L587.5 348.8 L589.0 344.6 L590.5 347.5 L592.0 352.6 L593.5 361.5 L595.0 356.4 L596.5 349.2 L598.0 349.9 L599.5 358.3 L601.0 364.2 L602.5 365.6 L604.0 361.2 L605.5 356.8 L607.0 362.9 L608.5 370.3 L610.0 376.2 L611.5 372.1 L613.0 368.1 L614.5 370.5 L616.0 374.6 L617.5 380.5 L619.0 380.3 L620.5 374.3 L622.0 371.3 L623.5 377.1 L625.0 381.2 L626.5 385.3 L628.0 378.2 L629.5 373.3 L631.0 375.8 L632.5 379.8 L634.0 386.3 L635.5 382.4 L637.0 373.2 L638.5 371.8 L640.0 374.1 L641.5 379.7 L643.0 381.7 L644.5 373.7 L646.0 365.6 L647.5 371.8 L649.0 375.0 L650.5 381.8 L652.0 375.6 L653.5 367.8 L655.0 365.6 L656.5 369.3 L658.0 375.3 L659.5 375.7 L661.0 365.0 L662.5 359.0 L664.0 364.1 L665.5 367.9 L667.0 371.0 L668.5 362.8 L670.0 356.4 L671.5 357.7 L673.0 362.9 L674.5 371.4 L676.0 365.0 L677.5 358.5 L679.0 356.8 L680.5 361.2 L682.0 368.4 L683.5 369.8 L685.0 360.8 L686.5 354.8 L688.0 358.6 L689.5 362.6 L691.0 370.5 L692.5 362.5 L694.0 355.3 L695.5 355.6 L697.0 361.8 L698.5 367.5 L700.0 365.4 L701.5 357.0 L703.0 349.5 L704.5 359.1 L706.0 364.1 L707.5 366.9 L709.0 358.1 L710.5 350.1 L712.0 355.2 L713.5 358.0 L715.0 365.2 L716.5 359.1 L718.0 350.9 L719.5 349.5 L721.0 354.3 L722.5 360.3 L724.0 363.0 L725.5 357.8 L727.0 350.6 L728.5 353.9 L730.0 360.6 L731.5 366.4 L733.0 361.3 L734.5 353.9 L736.0 356.6 L737.5 364.2 L739.0 368.1 L740.5 368.4 L742.0 362.0 L743.5 360.2 L745.0 368.3 L746.5 374.7 L748.0 380.4 L749.5 374.2 L751.0 368.6 L752.5 370.5 L754.0 374.4 L755.5 381.5 L757.0 374.6 L758.5 368.6 L760.0 363.5 L761.5 368.9 L763.0 372.6 L764.5 372.8 L766.0 366.9 L767.5 357.8 L769.0 361.4 L770.5 364.9 L772.0 371.1 L773.5 364.9 L775.0 358.8 L776.5 359.3 L778.0 363.4 L779.5 369.4 L781.0 369.0 L782.5 360.1 L784.0 356.8 L785.5 362.9 L787.0 367.5 L788.5 372.5 L790.0 366.2 L791.5 360.7 L793.0 364.1 L794.5 368.9 L796.0 374.5 L797.5 370.9 L799.0 361.5 L800.5 356.9 L802.0 364.5 L803.5 370.2 L805.0 368.9 L806.5 361.2 L808.0 356.2 L809.5 360.5 L811.0 366.2 L812.5 372.2 L814.0 364.9 L815.5 358.2 L817.0 358.9 L818.5 360.7 L820.0 370.3 L821.5 368.7 L823.0 364.9 L824.5 362.7 L826.0 371.4 L827.5 375.7 L829.0 383.9 L830.5 379.6 L832.0 371.4 L833.5 374.6 L835.0 379.2 L836.5 384.6 L838.0 381.1 L839.5 372.9 L841.0 369.1 L842.5 370.6 L844.0 377.4 L845.5 376.0 L847.0 366.3 L848.5 361.5 L850.0 363.7 L851.5 369.5 L853.0 374.8 L854.5 370.3 L856.0 363.3 L857.5 364.1 L859.0 370.3 L860.5 377.8 L862.0 375.9 L863.5 372.3 L865.0 367.0 L866.5 372.6 L868.0 377.2 L869.5 385.4 L871.0 377.6 L872.5 371.5 L874.0 373.0 L875.5 378.4 L877.0 383.1 L878.5 382.2 L880.0 373.1 L881.5 370.9 L883.0 377.8 L884.5 380.6 L886.0 379.8 L887.5 371.0 L889.0 368.0 L890.5 368.9 L892.0 373.6 L893.5 379.3 L895.0 374.2 L896.5 366.2 L898.0 365.5 L899.5 370.7 L901.0 375.2 L902.5 375.2 L904.0 367.0 L905.5 364.0 L907.0 368.9 L908.5 374.8 L910.0 378.6 L911.5 370.8 L913.0 368.0 L914.5 371.2 L916.0 374.9 L917.5 382.5 L919.0 378.2 L920.5 369.9 L922.0 368.6 L923.5 372.3 L925.0 375.9 L926.5 382.2 L928.0 371.8 L929.5 368.4 L931.0 368.9 L932.5 374.9 L934.0 379.8 L935.5 374.9 L937.0 369.9 L938.5 371.6 L940.0 376.3 L941.5 382.0 L943.0 382.8 L944.5 375.2 L946.0 375.2 L947.5 379.8 L949.0 386.7 L950.5 386.7 L952.0 381.7 L953.5 379.4 L955.0 379.2 L956.5 384.2 L958.0 392.7 L959.5 388.8 L961.0 382.0 L962.5 383.1 L964.0 387.0 L965.5 393.6 L967.0 393.1 L968.5 383.7 L970.0 383.0 L971.5 382.5 L973.0 386.2 L974.5 390.8 L976.0 386.0 L977.5 380.0 L979.0 380.1 L980.5 382.8 L982.0 387.1 L983.5 388.1 L985.0 380.8 L986.5 375.5 L988.0 376.2 L989.5 383.5 L991.0 387.3 L992.5 380.0 L994.0 375.7 L995.5 377.1 L997.0 379.6 L998.5 384.1 L1000.0 380.7 L1001.5 374.6 L1003.0 371.6 L1004.5 376.2 L1006.0 379.6 L1007.5 381.1 L1009.0 373.9 L1010.5 368.8 L1012.0 372.7 L1013.5 376.6 L1015.0 381.7 L1016.5 376.2 L1018.0 367.3 L1019.5 369.3 L1021.0 371.4 L1022.5 375.4 L1024.0 376.1 L1025.5 367.9 L1027.0 364.6 L1028.5 368.0 L1030.0 371.4 L1031.5 375.0 L1033.0 369.4 L1034.5 364.6 L1036.0 368.0 L1037.5 372.1 L1039.0 375.5 L1040.5 374.7 L1042.0 372.3 L1043.5 368.3 L1045.0 371.4 L1046.5 376.7 L1048.0 380.6 L1049.5 373.6 L1051.0 368.8 L1052.5 371.6 L1054.0 375.1 L1055.5 378.7 L1057.0 373.8 L1058.5 367.8 L1060.0 368.4 L1061.5 371.7 L1063.0 375.5 L1064.5 376.5 L1066.0 366.6 L1067.5 365.6 L1069.0 367.9 L1070.5 371.2 L1072.0 373.5 L1073.5 369.0 L1075.0 364.0 L1076.5 366.8 L1078.0 369.0 L1079.5 373.2 L1081.0 371.2 L1082.5 365.6 L1084.0 364.6 L1085.5 365.3 L1087.0 369.5 L1088.5 370.4 L1090.0 364.0 L1091.5 361.4 L1093.0 363.2 L1094.5 367.1 L1096.0 373.1 L1097.5 366.9 L1099.0 361.9 L1100.5 362.2 L1102.0 366.5 L1103.5 372.1 L1105.0 373.8 L1106.5 366.7 L1108.0 366.3 L1109.5 368.9 L1111.0 373.8 L1112.5 377.1 L1114.0 373.6 L1115.5 368.3 L1117.0 370.0 L1118.5 372.8 L1120.0 378.7 L1121.5 375.1 L1123.0 371.1 L1124.5 369.3 L1126.0 371.5 L1127.5 376.5 L1129.0 379.0 L1130.5 372.5 L1132.0 369.3 L1133.5 370.8 L1135.0 374.9 L1136.5 381.7 L1138.0 373.7 L1139.5 369.1 L1141.0 366.0 L1142.5 370.7 L1144.0 373.4 L1145.5 375.8 L1147.0 367.2 L1148.5 364.1 L1150.0 367.1 L1151.5 369.7 L1153.0 374.8 L1154.5 368.4 L1156.0 366.9 L1157.5 367.9 L1159.0 371.9 L1160.5 378.2 L1162.0 375.1 L1163.5 370.5 L1165.0 367.4 L1166.5 371.5 L1168.0 373.6 L1169.5 375.7 L1171.0 373.0 L1172.5 368.0 L1174.0 371.5 L1175.5 373.7 L1177.0 381.0 L1178.5 377.4 L1180.0 370.9 L1181.5 369.4 L1183.0 372.5 L1184.5 377.5 L1186.0 373.1 L1187.5 366.8 L1189.0 363.9 L1190.5 367.0 L1192.0 370.4 L1193.5 374.5 L1195.0 370.7 L1196.5 363.8 L1198.0 364.9 L1199.5 369.3 L1201.0 374.5 L1202.5 372.3 L1204.0 364.9 L1205.5 360.8 L1207.0 365.6 L1208.5 368.5 L1210.0 370.6 L1211.5 363.9 L1213.0 359.4 L1214.5 360.9 L1216.0 365.2 L1217.5 371.7 L1219.0 367.3 L1220.5 360.2 L1222.0 360.4 L1223.5 365.7 L1225.0 372.5 L1226.5 373.2 L1228.0 366.5 L1229.5 362.0 L1231.0 364.7 L1232.5 368.0 L1234.0 373.3 L1235.5 367.5 L1237.0 361.6 L1238.5 361.5 L1240.0 365.5 L1241.5 373.5 L1243.0 369.0 L1244.5 361.9 L1246.0 360.9 L1247.5 364.6 L1249.0 367.5 L1250.5 370.2 L1252.0 363.3 L1253.5 358.3 L1255.0 360.3 L1256.5 364.7 L1258.0 368.6 L1259.5 365.5 L1261.0 359.0 L1262.5 360.0 L1264.0 364.0 L1265.5 371.0 L1267.0 374.4 L1268.5 367.1 L1270.0 363.7 L1271.5 368.6 L1273.0 372.8" fill="none" stroke="#0000ff" stroke-width="1.1" shape-rendering="crispEdges"/>
<path d="M283.0 326.2 L284.5 331.9 L286.0 339.1 L287.5 337.9 L289.0 332.4 L290.5 337.3 L292.0 339.3 L293.5 351.0 L295.0 347.6 L296.5 340.1 L298.0 336.7 L299.5 341.9 L301.0 346.2 L302.5 346.3 L304.0 342.9 L305.5 336.9 L307.0 339.6 L308.5 341.7 L310.0 348.3 L311.5 343.1 L313.0 339.7 L314.5 337.7 L316.0 340.5 L317.5 345.1 L319.0 343.4 L320.5 335.3 L322.0 330.1 L323.5 334.7 L325.0 338.1 L326.5 341.7 L328.0 333.2 L329.5 326.5 L331.0 327.1 L332.5 333.6 L334.0 341.6 L335.5 337.1 L337.0 332.1 L338.5 329.7 L340.0 337.5 L341.5 345.6 L343.0 348.4 L344.5 344.1 L346.0 341.9 L347.5 346.5 L349.0 350.5 L350.5 360.7 L352.0 354.4 L353.5 349.8 L355.0 346.0 L356.5 350.0 L358.0 356.0 L359.5 356.0 L361.0 346.7 L362.5 343.6 L364.0 345.9 L365.5 348.5 L367.0 352.8 L368.5 347.4 L370.0 340.9 L371.5 342.4 L373.0 346.3 L374.5 352.5 L376.0 350.8 L377.5 345.9 L379.0 343.5 L380.5 346.8 L382.0 350.9 L383.5 356.3 L385.0 348.6 L386.5 343.3 L388.0 347.3 L389.5 351.4 L391.0 357.8 L392.5 353.1 L394.0 346.3 L395.5 346.3 L397.0 347.5 L398.5 351.9 L400.0 349.1 L401.5 343.6 L403.0 334.5 L404.5 338.1 L406.0 341.3 L407.5 343.5 L409.0 334.9 L410.5 331.4 L412.0 330.7 L413.5 332.4 L415.0 341.3 L416.5 335.9 L418.0 327.6 L419.5 324.3 L421.0 331.2 L422.5 335.9 L424.0 337.9 L425.5 331.8 L427.0 327.8 L428.5 331.1 L430.0 333.8 L431.5 341.8 L433.0 337.2 L434.5 332.4 L436.0 331.9 L437.5 335.8 L439.0 341.4 L440.5 340.6 L442.0 332.1 L443.5 329.8 L445.0 335.1 L446.5 337.6 L448.0 344.1 L449.5 339.0 L451.0 334.5 L452.5 336.5 L454.0 339.0 L455.5 345.3 L457.0 343.9 L458.5 339.1 L460.0 339.4 L461.5 346.7 L463.0 347.7 L464.5 356.3 L466.0 348.4 L467.5 349.6 L469.0 349.9 L470.5 358.8 L472.0 363.8 L473.5 359.3 L475.0 353.8 L476.5 351.0 L478.0 353.2 L479.5 358.4 L481.0 357.2 L482.5 349.3 L484.0 343.1 L485.5 345.1 L487.0 349.4 L488.5 350.7 L490.0 345.3 L491.5 341.4 L493.0 342.5 L494.5 344.8 L496.0 348.0 L497.5 349.1 L499.0 342.8 L500.5 339.5 L502.0 345.1 L503.5 351.3 L505.0 355.4 L506.5 348.6 L508.0 345.5 L509.5 347.8 L511.0 350.1 L512.5 355.7 L514.0 352.3 L515.5 347.1 L517.0 343.0 L518.5 345.1 L520.0 350.2 L521.5 346.5 L523.0 340.0 L524.5 334.8 L526.0 334.0 L527.5 336.1 L529.0 339.1 L530.5 331.6 L532.0 325.2 L533.5 326.7 L535.0 330.6 L536.5 333.9 L538.0 332.3 L539.5 328.1 L541.0 326.2 L542.5 326.9 L544.0 332.7 L545.5 333.4 L547.0 328.6 L548.5 324.8 L550.0 326.0 L551.5 331.1 L553.0 337.5 L554.5 331.0 L556.0 327.1 L557.5 327.0 L559.0 328.5 L560.5 334.0 L562.0 331.7 L563.5 326.5 L565.0 320.8 L566.5 322.9 L568.0 324.0 L569.5 328.7 L571.0 324.0 L572.5 317.5 L574.0 319.5 L575.5 320.6 L577.0 325.5 L578.5 324.6 L580.0 317.5 L581.5 311.5 L583.0 317.5 L584.5 321.3 L586.0 325.1 L587.5 321.2 L589.0 314.5 L590.5 318.6 L592.0 323.2 L593.5 330.5 L595.0 328.4 L596.5 321.2 L598.0 324.5 L599.5 330.5 L601.0 334.9 L602.5 337.5 L604.0 336.2 L605.5 329.9 L607.0 335.8 L608.5 341.4 L610.0 350.3 L611.5 343.7 L613.0 338.4 L614.5 340.2 L616.0 345.7 L617.5 352.5 L619.0 351.8 L620.5 342.0 L622.0 340.6 L623.5 351.1 L625.0 353.2 L626.5 358.2 L628.0 351.6 L629.5 345.9 L631.0 349.1 L632.5 351.8 L634.0 356.3 L635.5 353.6 L637.0 342.9 L638.5 342.6 L640.0 346.7 L641.5 351.5 L643.0 354.6 L644.5 347.4 L646.0 340.1 L647.5 345.4 L649.0 347.5 L650.5 356.1 L652.0 349.3 L653.5 342.8 L655.0 342.4 L656.5 347.5 L658.0 353.0 L659.5 350.2 L661.0 344.0 L662.5 340.5 L664.0 346.0 L665.5 348.9 L667.0 351.6 L668.5 343.1 L670.0 335.1 L671.5 338.5 L673.0 341.9 L674.5 350.0 L676.0 344.1 L677.5 337.5 L679.0 335.6 L680.5 338.9 L682.0 345.2 L683.5 344.7 L685.0 339.7 L686.5 334.9 L688.0 338.6 L689.5 343.0 L691.0 351.0 L692.5 346.7 L694.0 338.1 L695.5 339.0 L697.0 339.4 L698.5 345.6 L700.0 344.5 L701.5 334.8 L703.0 329.1 L704.5 333.8 L706.0 338.6 L707.5 341.5 L709.0 333.3 L710.5 326.4 L712.0 329.0 L713.5 333.9 L715.0 341.5 L716.5 334.0 L718.0 327.6 L719.5 325.6 L721.0 330.7 L722.5 340.8 L724.0 338.1 L725.5 331.5 L727.0 325.4 L728.5 331.4 L730.0 335.6 L731.5 346.4 L733.0 337.3 L734.5 331.8 L736.0 334.1 L737.5 339.3 L739.0 349.8 L740.5 349.6 L742.0 341.2 L743.5 339.6 L745.0 346.1 L746.5 353.7 L748.0 357.8 L749.5 351.1 L751.0 346.6 L752.5 349.4 L754.0 352.9 L755.5 359.3 L757.0 354.5 L758.5 346.4 L760.0 342.2 L761.5 347.6 L763.0 351.0 L764.5 352.6 L766.0 343.8 L767.5 337.4 L769.0 341.1 L770.5 345.8 L772.0 351.3 L773.5 341.9 L775.0 336.0 L776.5 335.6 L778.0 341.1 L779.5 348.2 L781.0 346.0 L782.5 337.2 L784.0 331.7 L785.5 338.9 L787.0 343.5 L788.5 348.2 L790.0 340.5 L791.5 332.4 L793.0 334.4 L794.5 339.9 L796.0 348.4 L797.5 343.7 L799.0 334.2 L800.5 330.5 L802.0 338.2 L803.5 343.2 L805.0 343.9 L806.5 333.7 L808.0 329.8 L809.5 333.7 L811.0 336.8 L812.5 344.4 L814.0 335.8 L815.5 329.2 L817.0 329.7 L818.5 336.9 L820.0 345.8 L821.5 345.8 L823.0 338.5 L824.5 336.4 L826.0 341.0 L827.5 348.4 L829.0 352.5 L830.5 345.3 L832.0 340.2 L833.5 344.6 L835.0 345.9 L836.5 352.2 L838.0 347.1 L839.5 338.0 L841.0 335.3 L842.5 339.2 L844.0 345.8 L845.5 344.0 L847.0 337.0 L848.5 329.0 L850.0 331.9 L851.5 335.4 L853.0 342.7 L854.5 336.5 L856.0 329.0 L857.5 329.2 L859.0 334.1 L860.5 341.1 L862.0 339.8 L863.5 333.5 L865.0 330.7 L866.5 337.9 L868.0 340.0 L869.5 345.6 L871.0 338.2 L872.5 333.3 L874.0 333.9 L875.5 339.4 L877.0 344.7 L878.5 341.1 L880.0 335.5 L881.5 331.2 L883.0 339.0 L884.5 343.0 L886.0 345.7 L887.5 338.4 L889.0 335.1 L890.5 338.0 L892.0 342.6 L893.5 349.9 L895.0 343.5 L896.5 339.7 L898.0 337.1 L899.5 342.7 L901.0 348.3 L902.5 348.8 L904.0 341.7 L905.5 337.7 L907.0 342.1 L908.5 344.4 L910.0 348.9 L911.5 344.6 L913.0 338.5 L914.5 339.0 L916.0 343.8 L917.5 348.7 L919.0 347.1 L920.5 341.0 L922.0 339.3 L923.5 345.7 L925.0 349.0 L926.5 354.0 L928.0 347.4 L929.5 344.1 L931.0 346.2 L932.5 351.1 L934.0 356.4 L935.5 351.5 L937.0 344.2 L938.5 346.8 L940.0 348.7 L941.5 352.9 L943.0 352.4 L944.5 345.0 L946.0 341.0 L947.5 345.4 L949.0 350.5 L950.5 352.2 L952.0 346.8 L953.5 342.4 L955.0 344.3 L956.5 350.3 L958.0 355.9 L959.5 356.4 L961.0 348.5 L962.5 348.5 L964.0 353.5 L965.5 357.9 L967.0 359.7 L968.5 352.8 L970.0 350.0 L971.5 353.5 L973.0 356.9 L974.5 361.8 L976.0 358.0 L977.5 352.2 L979.0 352.6 L980.5 355.5 L982.0 358.4 L983.5 357.2 L985.0 349.9 L986.5 347.2 L988.0 348.8 L989.5 349.9 L991.0 353.2 L992.5 347.1 L994.0 343.9 L995.5 345.3 L997.0 347.6 L998.5 352.9 L1000.0 348.7 L1001.5 345.0 L1003.0 342.8 L1004.5 344.6 L1006.0 348.0 L1007.5 349.6 L1009.0 343.2 L1010.5 338.4 L1012.0 344.6 L1013.5 345.1 L1015.0 350.9 L1016.5 344.9 L1018.0 337.7 L1019.5 337.0 L1021.0 339.9 L1022.5 346.1 L1024.0 343.6 L1025.5 337.9 L1027.0 334.9 L1028.5 338.1 L1030.0 343.2 L1031.5 346.4 L1033.0 339.2 L1034.5 335.1 L1036.0 338.2 L1037.5 341.7 L1039.0 348.1 L1040.5 344.0 L1042.0 341.1 L1043.5 340.2 L1045.0 343.8 L1046.5 347.1 L1048.0 352.4 L1049.5 346.3 L1051.0 340.8 L1052.5 342.1 L1054.0 344.4 L1055.5 348.1 L1057.0 347.0 L1058.5 340.9 L1060.0 338.9 L1061.5 341.5 L1063.0 346.4 L1064.5 346.2 L1066.0 339.9 L1067.5 337.3 L1069.0 339.7 L1070.5 342.6 L1072.0 344.1 L1073.5 339.7 L1075.0 333.6 L1076.5 333.9 L1078.0 336.7 L1079.5 342.2 L1081.0 338.4 L1082.5 333.0 L1084.0 334.1 L1085.5 337.0 L1087.0 340.7 L1088.5 344.1 L1090.0 337.8 L1091.5 333.9 L1093.0 339.0 L1094.5 340.4 L1096.0 347.2 L1097.5 341.6 L1099.0 336.3 L1100.5 336.6 L1102.0 340.7 L1103.5 345.1 L1105.0 345.0 L1106.5 340.4 L1108.0 335.6 L1109.5 339.6 L1111.0 343.7 L1112.5 349.6 L1114.0 341.0 L1115.5 337.5 L1117.0 340.4 L1118.5 342.9 L1120.0 348.4 L1121.5 345.6 L1123.0 338.6 L1124.5 335.7 L1126.0 338.9 L1127.5 343.0 L1129.0 345.7 L1130.5 339.5 L1132.0 335.2 L1133.5 338.1 L1135.0 341.3 L1136.5 348.3 L1138.0 343.6 L1139.5 338.6 L1141.0 336.5 L1142.5 338.5 L1144.0 343.6 L1145.5 343.4 L1147.0 335.8 L1148.5 332.7 L1150.0 337.3 L1151.5 342.5 L1153.0 344.4 L1154.5 341.2 L1156.0 339.1 L1157.5 338.9 L1159.0 343.1 L1160.5 346.4 L1162.0 346.7 L1163.5 339.4 L1165.0 336.3 L1166.5 340.0 L1168.0 344.5 L1169.5 345.9 L1171.0 341.9 L1172.5 334.2 L1174.0 335.9 L1175.5 339.3 L1177.0 348.3 L1178.5 342.7 L1180.0 337.8 L1181.5 337.7 L1183.0 340.0 L1184.5 344.1 L1186.0 346.8 L1187.5 342.5 L1189.0 335.8 L1190.5 339.8 L1192.0 346.1 L1193.5 350.3 L1195.0 345.0 L1196.5 338.6 L1198.0 340.0 L1199.5 345.7 L1201.0 349.4 L1202.5 346.3 L1204.0 338.5 L1205.5 336.5 L1207.0 342.3 L1208.5 344.2 L1210.0 348.7 L1211.5 342.1 L1213.0 336.6 L1214.5 337.0 L1216.0 341.2 L1217.5 347.1 L1219.0 342.7 L1220.5 337.0 L1222.0 333.9 L1223.5 337.6 L1225.0 345.6 L1226.5 348.1 L1228.0 340.2 L1229.5 335.8 L1231.0 341.2 L1232.5 345.6 L1234.0 350.4 L1235.5 343.8 L1237.0 335.9 L1238.5 337.0 L1240.0 342.2 L1241.5 349.3 L1243.0 348.6 L1244.5 336.7 L1246.0 334.8 L1247.5 339.3 L1249.0 343.7 L1250.5 347.7 L1252.0 339.1 L1253.5 331.8 L1255.0 335.8 L1256.5 340.2 L1258.0 348.3 L1259.5 342.2 L1261.0 335.6 L1262.5 334.5 L1264.0 339.2 L1265.5 346.9 L1267.0 347.3 L1268.5 337.8 L1270.0 333.0 L1271.5 339.5 L1273.0 343.4" fill="none" stroke="#00ff00" stroke-width="1.1" shape-rendering="crispEdges"/>
<path d="M283.0 297.1 L284.5 299.8 L286.0 305.3 L287.5 298.6 L289.0 295.3 L290.5 296.9 L292.0 302.3 L293.5 306.6 L295.0 304.1 L296.5 297.0 L298.0 296.7 L299.5 299.0 L301.0 305.7 L302.5 305.6 L304.0 299.4 L305.5 293.6 L307.0 300.3 L308.5 303.5 L310.0 309.9 L311.5 303.0 L313.0 297.4 L314.5 295.6 L316.0 300.1 L317.5 304.9 L319.0 305.8 L320.5 298.3 L322.0 293.9 L323.5 300.0 L325.0 302.6 L326.5 310.5 L328.0 302.9 L329.5 298.0 L331.0 299.1 L332.5 304.2 L334.0 310.9 L335.5 307.8 L337.0 304.4 L338.5 302.9 L340.0 309.0 L341.5 317.5 L343.0 322.4 L344.5 316.7 L346.0 313.8 L347.5 322.0 L349.0 326.3 L350.5 333.5 L352.0 329.1 L353.5 324.6 L355.0 323.0 L356.5 328.3 L358.0 331.3 L359.5 329.7 L361.0 320.7 L362.5 315.6 L364.0 317.2 L365.5 321.5 L367.0 323.2 L368.5 315.3 L370.0 309.0 L371.5 311.7 L373.0 316.3 L374.5 323.1 L376.0 320.8 L377.5 312.9 L379.0 310.2 L380.5 319.9 L382.0 327.1 L383.5 332.7 L385.0 327.0 L386.5 322.7 L388.0 328.0 L389.5 336.5 L391.0 344.0 L392.5 336.6 L394.0 329.2 L395.5 326.7 L397.0 332.7 L398.5 335.1 L400.0 334.0 L401.5 325.5 L403.0 319.5 L404.5 322.0 L406.0 325.9 L407.5 328.0 L409.0 321.6 L410.5 314.0 L412.0 313.4 L413.5 318.8 L415.0 322.9 L416.5 321.8 L418.0 314.5 L419.5 312.9 L421.0 317.1 L422.5 322.7 L424.0 326.1 L425.5 319.3 L427.0 313.1 L428.5 316.9 L430.0 322.1 L431.5 328.4 L433.0 320.3 L434.5 315.0 L436.0 312.5 L437.5 316.5 L439.0 323.1 L440.5 323.1 L442.0 314.7 L443.5 311.3 L445.0 315.6 L446.5 319.7 L448.0 325.6 L449.5 318.3 L451.0 312.7 L452.5 313.9 L454.0 317.4 L455.5 328.1 L457.0 324.1 L458.5 315.6 L460.0 313.6 L461.5 319.9 L463.0 326.1 L464.5 327.8 L466.0 321.3 L467.5 315.3 L469.0 318.4 L470.5 325.0 L472.0 333.2 L473.5 326.0 L475.0 318.7 L476.5 315.6 L478.0 317.1 L479.5 325.0 L481.0 322.1 L482.5 313.3 L484.0 307.2 L485.5 311.2 L487.0 315.9 L488.5 322.4 L490.0 313.6 L491.5 309.9 L493.0 309.8 L494.5 312.5 L496.0 319.2 L497.5 319.3 L499.0 309.2 L500.5 307.5 L502.0 313.4 L503.5 317.5 L505.0 322.4 L506.5 315.6 L508.0 311.8 L509.5 313.8 L511.0 320.0 L512.5 329.1 L514.0 322.7 L515.5 316.3 L517.0 316.0 L518.5 320.3 L520.0 325.1 L521.5 325.2 L523.0 318.1 L524.5 311.8 L526.0 316.1 L527.5 321.7 L529.0 328.0 L530.5 320.1 L532.0 313.5 L533.5 316.3 L535.0 318.2 L536.5 323.8 L538.0 323.8 L539.5 316.6 L541.0 314.1 L542.5 319.9 L544.0 322.9 L545.5 325.3 L547.0 318.6 L548.5 312.9 L550.0 313.8 L551.5 316.9 L553.0 321.7 L554.5 318.9 L556.0 313.7 L557.5 312.4 L559.0 314.2 L560.5 319.0 L562.0 319.1 L563.5 311.9 L565.0 307.9 L566.5 313.0 L568.0 316.8 L569.5 320.9 L571.0 313.8 L572.5 306.3 L574.0 306.7 L575.5 309.3 L577.0 312.3 L578.5 308.9 L580.0 303.3 L581.5 301.2 L583.0 304.5 L584.5 307.9 L586.0 311.5 L587.5 303.2 L589.0 298.7 L590.5 300.5 L592.0 303.8 L593.5 311.3 L595.0 305.5 L596.5 301.3 L598.0 300.4 L599.5 305.1 L601.0 310.8 L602.5 310.6 L604.0 305.2 L605.5 303.9 L607.0 308.1 L608.5 311.4 L610.0 315.0 L611.5 309.6 L613.0 305.1 L614.5 304.8 L616.0 305.5 L617.5 309.9 L619.0 309.1 L620.5 304.2 L622.0 301.7 L623.5 303.9 L625.0 306.4 L626.5 308.6 L628.0 303.2 L629.5 298.6 L631.0 298.8 L632.5 301.7 L634.0 306.4 L635.5 299.7 L637.0 298.6 L638.5 298.0 L640.0 299.3 L641.5 305.1 L643.0 308.8 L644.5 304.1 L646.0 302.2 L647.5 304.1 L649.0 311.2 L650.5 315.5 L652.0 312.9 L653.5 308.6 L655.0 306.4 L656.5 309.6 L658.0 314.1 L659.5 312.9 L661.0 307.0 L662.5 304.6 L664.0 309.7 L665.5 311.3 L667.0 316.9 L668.5 312.4 L670.0 310.5 L671.5 312.3 L673.0 316.9 L674.5 321.5 L676.0 320.2 L677.5 317.4 L679.0 317.0 L680.5 322.3 L682.0 327.4 L683.5 329.7 L685.0 323.6 L686.5 322.7 L688.0 324.8 L689.5 334.3 L691.0 336.3 L692.5 332.9 L694.0 328.8 L695.5 325.8 L697.0 330.1 L698.5 335.4 L700.0 336.4 L701.5 331.3 L703.0 323.6 L704.5 330.7 L706.0 333.9 L707.5 337.0 L709.0 329.8 L710.5 325.5 L712.0 328.2 L713.5 329.1 L715.0 335.1 L716.5 331.5 L718.0 325.3 L719.5 323.9 L721.0 327.4 L722.5 332.4 L724.0 334.4 L725.5 327.6 L727.0 321.2 L728.5 326.3 L730.0 330.1 L731.5 335.9 L733.0 328.3 L734.5 322.3 L736.0 323.0 L737.5 327.5 L739.0 331.4 L740.5 330.0 L742.0 322.2 L743.5 320.4 L745.0 325.8 L746.5 330.3 L748.0 334.3 L749.5 327.6 L751.0 322.5 L752.5 325.4 L754.0 326.1 L755.5 332.0 L757.0 329.9 L758.5 324.4 L760.0 322.7 L761.5 327.1 L763.0 331.9 L764.5 332.4 L766.0 325.6 L767.5 319.8 L769.0 320.9 L770.5 326.8 L772.0 330.7 L773.5 323.8 L775.0 315.7 L776.5 318.3 L778.0 321.3 L779.5 326.2 L781.0 324.6 L782.5 315.0 L784.0 309.8 L785.5 315.5 L787.0 320.1 L788.5 324.3 L790.0 319.5 L791.5 312.2 L793.0 315.2 L794.5 317.2 L796.0 323.7 L797.5 318.3 L799.0 311.0 L800.5 307.5 L802.0 307.3 L803.5 311.2 L805.0 313.5 L806.5 304.4 L808.0 296.2 L809.5 299.2 L811.0 303.0 L812.5 309.2 L814.0 302.5 L815.5 297.4 L817.0 300.4 L818.5 307.9 L820.0 314.6 L821.5 311.5 L823.0 307.9 L824.5 304.7 L826.0 310.3 L827.5 316.6 L829.0 322.3 L830.5 316.3 L832.0 313.0 L833.5 315.3 L835.0 321.6 L836.5 327.5 L838.0 323.0 L839.5 311.8 L841.0 311.4 L842.5 313.9 L844.0 317.1 L845.5 316.7 L847.0 305.8 L848.5 299.0 L850.0 298.7 L851.5 306.7 L853.0 313.8 L854.5 305.8 L856.0 297.6 L857.5 297.9 L859.0 301.4 L860.5 310.3 L862.0 308.1 L863.5 302.6 L865.0 295.3 L866.5 300.0 L868.0 308.5 L869.5 312.9 L871.0 307.9 L872.5 300.7 L874.0 304.9 L875.5 308.0 L877.0 316.1 L878.5 313.4 L880.0 304.6 L881.5 302.2 L883.0 305.8 L884.5 313.0 L886.0 316.1 L887.5 309.5 L889.0 305.1 L890.5 307.7 L892.0 311.7 L893.5 320.0 L895.0 312.8 L896.5 303.6 L898.0 304.7 L899.5 308.9 L901.0 314.8 L902.5 313.4 L904.0 308.6 L905.5 303.9 L907.0 310.0 L908.5 312.6 L910.0 318.6 L911.5 310.8 L913.0 305.3 L914.5 307.3 L916.0 309.3 L917.5 316.4 L919.0 316.2 L920.5 308.8 L922.0 307.2 L923.5 312.8 L925.0 317.4 L926.5 322.2 L928.0 313.5 L929.5 308.0 L931.0 312.4 L932.5 319.0 L934.0 326.0 L935.5 319.3 L937.0 312.2 L938.5 313.5 L940.0 316.4 L941.5 322.4 L943.0 319.1 L944.5 313.9 L946.0 306.2 L947.5 312.6 L949.0 314.9 L950.5 319.4 L952.0 314.6 L953.5 308.8 L955.0 311.4 L956.5 315.9 L958.0 323.1 L959.5 321.2 L961.0 314.0 L962.5 313.3 L964.0 319.8 L965.5 324.9 L967.0 328.3 L968.5 322.5 L970.0 320.0 L971.5 321.8 L973.0 324.6 L974.5 331.4 L976.0 325.4 L977.5 320.3 L979.0 320.0 L980.5 323.0 L982.0 329.3 L983.5 327.2 L985.0 321.0 L986.5 314.9 L988.0 318.9 L989.5 322.3 L991.0 328.0 L992.5 320.9 L994.0 316.4 L995.5 317.9 L997.0 319.1 L998.5 325.3 L1000.0 317.2 L1001.5 313.1 L1003.0 313.1 L1004.5 317.7 L1006.0 323.7 L1007.5 324.5 L1009.0 316.7 L1010.5 312.8 L1012.0 315.6 L1013.5 319.1 L1015.0 324.1 L1016.5 320.7 L1018.0 313.1 L1019.5 312.8 L1021.0 316.1 L1022.5 318.9 L1024.0 319.2 L1025.5 314.0 L1027.0 310.0 L1028.5 314.6 L1030.0 318.5 L1031.5 322.6 L1033.0 315.1 L1034.5 312.6 L1036.0 312.6 L1037.5 317.8 L1039.0 322.7 L1040.5 320.2 L1042.0 315.9 L1043.5 312.0 L1045.0 316.2 L1046.5 319.5 L1048.0 321.7 L1049.5 318.4 L1051.0 315.1 L1052.5 315.9 L1054.0 320.8 L1055.5 324.2 L1057.0 320.1 L1058.5 315.3 L1060.0 315.6 L1061.5 320.8 L1063.0 324.4 L1064.5 322.3 L1066.0 314.8 L1067.5 313.0 L1069.0 318.3 L1070.5 320.6 L1072.0 323.2 L1073.5 319.0 L1075.0 315.5 L1076.5 314.3 L1078.0 316.6 L1079.5 319.7 L1081.0 318.2 L1082.5 312.0 L1084.0 308.1 L1085.5 313.1 L1087.0 315.7 L1088.5 315.8 L1090.0 311.8 L1091.5 309.4 L1093.0 310.1 L1094.5 315.1 L1096.0 319.4 L1097.5 314.2 L1099.0 308.9 L1100.5 310.3 L1102.0 311.6 L1103.5 319.0 L1105.0 318.1 L1106.5 312.9 L1108.0 309.6 L1109.5 312.3 L1111.0 317.7 L1112.5 318.8 L1114.0 314.6 L1115.5 310.8 L1117.0 311.9 L1118.5 313.6 L1120.0 318.6 L1121.5 318.6 L1123.0 313.1 L1124.5 310.6 L1126.0 312.9 L1127.5 315.5 L1129.0 319.4 L1130.5 314.2 L1132.0 308.6 L1133.5 310.8 L1135.0 314.8 L1136.5 320.4 L1138.0 313.8 L1139.5 307.8 L1141.0 308.5 L1142.5 313.5 L1144.0 316.3 L1145.5 317.3 L1147.0 311.1 L1148.5 307.6 L1150.0 310.3 L1151.5 316.1 L1153.0 318.7 L1154.5 315.4 L1156.0 312.4 L1157.5 311.9 L1159.0 315.6 L1160.5 321.8 L1162.0 321.5 L1163.5 315.5 L1165.0 310.3 L1166.5 316.5 L1168.0 320.9 L1169.5 323.3 L1171.0 318.0 L1172.5 314.0 L1174.0 315.3 L1175.5 318.3 L1177.0 326.4 L1178.5 320.7 L1180.0 311.4 L1181.5 311.1 L1183.0 316.9 L1184.5 321.2 L1186.0 323.1 L1187.5 317.0 L1189.0 314.1 L1190.5 317.9 L1192.0 322.2 L1193.5 327.9 L1195.0 321.7 L1196.5 313.6 L1198.0 314.0 L1199.5 320.8 L1201.0 324.6 L1202.5 319.9 L1204.0 312.1 L1205.5 308.1 L1207.0 312.7 L1208.5 318.5 L1210.0 322.6 L1211.5 315.9 L1213.0 308.1 L1214.5 312.0 L1216.0 318.7 L1217.5 324.7 L1219.0 317.8 L1220.5 311.3 L1222.0 308.7 L1223.5 312.2 L1225.0 320.4 L1226.5 321.9 L1228.0 312.7 L1229.5 307.3 L1231.0 311.5 L1232.5 316.0 L1234.0 323.3 L1235.5 316.2 L1237.0 308.3 L1238.5 309.2 L1240.0 313.7 L1241.5 321.1 L1243.0 318.7 L1244.5 310.8 L1246.0 309.6 L1247.5 313.4 L1249.0 319.3 L1250.5 322.2 L1252.0 314.0 L1253.5 308.2 L1255.0 312.2 L1256.5 314.7 L1258.0 322.1 L1259.5 318.4 L1261.0 309.1 L1262.5 307.5 L1264.0 316.1 L1265.5 318.1 L1267.0 319.8 L1268.5 311.6 L1270.0 309.2 L1271.5 313.6 L1273.0 318.0" fill="none" stroke="#0000ff" stroke-width="1.1" shape-rendering="crispEdges"/>
<path d="M283.0 272.4 L284.5 277.9 L286.0 283.4 L287.5 278.1 L289.0 272.0 L290.5 276.2 L292.0 280.9 L293.5 289.7 L295.0 286.4 L296.5 277.4 L298.0 274.6 L299.5 280.7 L301.0 283.1 L302.5 284.9 L304.0 279.6 L305.5 272.6 L307.0 275.5 L308.5 280.5 L310.0 286.5 L311.5 279.4 L313.0 274.5 L314.5 274.4 L316.0 279.6 L317.5 286.2 L319.0 285.2 L320.5 279.1 L322.0 272.8 L323.5 276.7 L325.0 282.6 L326.5 285.9 L328.0 280.7 L329.5 275.0 L331.0 278.8 L332.5 283.3 L334.0 289.5 L335.5 289.8 L337.0 282.3 L338.5 281.2 L340.0 288.9 L341.5 291.0 L343.0 292.6 L344.5 291.1 L346.0 287.5 L347.5 291.1 L349.0 295.5 L350.5 302.2 L352.0 297.7 L353.5 291.2 L355.0 290.5 L356.5 295.7 L358.0 298.5 L359.5 299.7 L361.0 290.5 L362.5 286.6 L364.0 287.4 L365.5 289.1 L367.0 296.3 L368.5 287.7 L370.0 282.5 L371.5 282.7 L373.0 288.4 L374.5 292.8 L376.0 292.6 L377.5 287.0 L379.0 286.7 L380.5 291.3 L382.0 296.4 L383.5 301.8 L385.0 295.8 L386.5 294.1 L388.0 295.2 L389.5 302.6 L391.0 308.9 L392.5 305.7 L394.0 298.9 L395.5 297.7 L397.0 299.1 L398.5 303.1 L400.0 302.0 L401.5 293.6 L403.0 291.0 L404.5 292.2 L406.0 296.7 L407.5 298.8 L409.0 291.1 L410.5 284.0 L412.0 284.9 L413.5 287.6 L415.0 289.5 L416.5 289.2 L418.0 282.2 L419.5 280.2 L421.0 284.7 L422.5 288.7 L424.0 289.2 L425.5 286.5 L427.0 281.8 L428.5 284.1 L430.0 288.6 L431.5 291.5 L433.0 289.5 L434.5 284.2 L436.0 284.8 L437.5 287.5 L439.0 294.0 L440.5 291.3 L442.0 286.3 L443.5 282.2 L445.0 286.1 L446.5 287.8 L448.0 291.3 L449.5 287.6 L451.0 284.4 L452.5 283.7 L454.0 287.8 L455.5 292.0 L457.0 289.5 L458.5 284.2 L460.0 282.1 L461.5 286.8 L463.0 291.3 L464.5 292.7 L466.0 286.2 L467.5 284.1 L469.0 287.1 L470.5 291.3 L472.0 294.9 L473.5 291.4 L475.0 284.5 L476.5 282.2 L478.0 284.6 L479.5 290.1 L481.0 288.1 L482.5 283.9 L484.0 277.7 L485.5 280.5 L487.0 285.2 L488.5 287.2 L490.0 282.0 L491.5 277.3 L493.0 278.2 L494.5 282.6 L496.0 288.4 L497.5 285.4 L499.0 280.1 L500.5 280.0 L502.0 285.8 L503.5 289.1 L505.0 288.4 L506.5 284.8 L508.0 281.2 L509.5 284.5 L511.0 290.9 L512.5 299.2 L514.0 293.2 L515.5 287.4 L517.0 287.0 L518.5 290.5 L520.0 295.3 L521.5 296.4 L523.0 288.3 L524.5 282.6 L526.0 283.8 L527.5 285.4 L529.0 290.7 L530.5 283.1 L532.0 278.5 L533.5 274.9 L535.0 284.0 L536.5 287.4 L538.0 285.7 L539.5 278.0 L541.0 278.1 L542.5 283.4 L544.0 292.1 L545.5 295.8 L547.0 290.7 L548.5 283.9 L550.0 290.6 L551.5 294.1 L553.0 301.4 L554.5 296.3 L556.0 290.2 L557.5 290.3 L559.0 294.7 L560.5 299.1 L562.0 298.5 L563.5 293.0 L565.0 287.3 L566.5 290.7 L568.0 296.4 L569.5 299.8 L571.0 294.9 L572.5 285.9 L574.0 286.3 L575.5 289.7 L577.0 296.0 L578.5 294.7 L580.0 285.6 L581.5 282.9 L583.0 289.8 L584.5 292.3 L586.0 296.9 L587.5 289.6 L589.0 281.6 L590.5 282.0 L592.0 289.2 L593.5 298.2 L595.0 293.8 L596.5 287.0 L598.0 286.5 L599.5 291.6 L601.0 298.7 L602.5 301.5 L604.0 294.5 L605.5 287.7 L607.0 291.5 L608.5 297.1 L610.0 301.9 L611.5 295.9 L613.0 289.9 L614.5 289.8 L616.0 293.4 L617.5 300.3 L619.0 297.1 L620.5 288.3 L622.0 284.1 L623.5 287.7 L625.0 292.6 L626.5 295.1 L628.0 284.4 L629.5 276.8 L631.0 278.1 L632.5 282.1 L634.0 289.1 L635.5 283.2 L637.0 280.5 L638.5 277.0 L640.0 283.4 L641.5 288.1 L643.0 288.7 L644.5 281.7 L646.0 276.4 L647.5 281.2 L649.0 286.9 L650.5 293.8 L652.0 287.3 L653.5 278.3 L655.0 279.1 L656.5 283.7 L658.0 292.2 L659.5 289.4 L661.0 282.7 L662.5 278.1 L664.0 286.2 L665.5 294.3 L667.0 298.3 L668.5 291.5 L670.0 283.8 L671.5 290.2 L673.0 295.2 L674.5 302.6 L676.0 298.5 L677.5 290.7 L679.0 290.0 L680.5 296.2 L682.0 301.7 L683.5 303.7 L685.0 295.9 L686.5 291.3 L688.0 296.5 L689.5 304.2 L691.0 308.7 L692.5 301.4 L694.0 293.7 L695.5 297.1 L697.0 301.2 L698.5 305.5 L700.0 301.8 L701.5 294.8 L703.0 292.7 L704.5 293.6 L706.0 300.5 L707.5 305.0 L709.0 299.1 L710.5 292.9 L712.0 293.8 L713.5 298.7 L715.0 304.1 L716.5 297.6 L718.0 288.9 L719.5 289.3 L721.0 293.6 L722.5 298.2 L724.0 302.4 L725.5 294.8 L727.0 288.2 L728.5 293.9 L730.0 298.0 L731.5 302.2 L733.0 295.6 L734.5 291.3 L736.0 292.5 L737.5 295.7 L739.0 302.9 L740.5 301.4 L742.0 293.9 L743.5 289.9 L745.0 296.5 L746.5 300.1 L748.0 304.1 L749.5 296.6 L751.0 291.2 L752.5 292.2 L754.0 293.6 L755.5 302.9 L757.0 297.9 L758.5 294.1 L760.0 292.7 L761.5 294.4 L763.0 298.7 L764.5 302.6 L766.0 294.1 L767.5 288.8 L769.0 292.5 L770.5 295.1 L772.0 301.2 L773.5 294.1 L775.0 287.4 L776.5 288.1 L778.0 287.7 L779.5 293.3 L781.0 290.8 L782.5 284.5 L784.0 280.9 L785.5 282.9 L787.0 285.4 L788.5 288.0 L790.0 282.8 L791.5 278.4 L793.0 279.2 L794.5 280.7 L796.0 285.7 L797.5 283.1 L799.0 275.5 L800.5 276.5 L802.0 278.4 L803.5 282.8 L805.0 284.1 L806.5 279.4 L808.0 273.9 L809.5 279.5 L811.0 283.0 L812.5 286.5 L814.0 281.8 L815.5 277.4 L817.0 276.4 L818.5 282.5 L820.0 284.2 L821.5 286.2 L823.0 281.2 L824.5 278.3 L826.0 283.7 L827.5 288.4 L829.0 291.5 L830.5 284.9 L832.0 281.7 L833.5 282.6 L835.0 283.9 L836.5 290.7 L838.0 287.1 L839.5 280.7 L841.0 278.4 L842.5 283.0 L844.0 288.4 L845.5 288.0 L847.0 282.1 L848.5 277.4 L850.0 280.0 L851.5 283.1 L853.0 290.0 L854.5 284.7 L856.0 278.7 L857.5 278.1 L859.0 281.1 L860.5 285.4 L862.0 285.6 L863.5 275.6 L865.0 273.6 L866.5 279.4 L868.0 282.4 L869.5 285.6 L871.0 279.4 L872.5 275.7 L874.0 277.0 L875.5 279.6 L877.0 287.6 L878.5 285.4 L880.0 280.2 L881.5 275.6 L883.0 278.3 L884.5 283.8 L886.0 286.3 L887.5 280.7 L889.0 275.5 L890.5 278.3 L892.0 282.4 L893.5 287.5 L895.0 282.9 L896.5 277.9 L898.0 277.0 L899.5 282.0 L901.0 285.8 L902.5 287.8 L904.0 280.5 L905.5 278.2 L907.0 283.0 L908.5 286.6 L910.0 289.8 L911.5 282.6 L913.0 279.6 L914.5 280.4 L916.0 283.2 L917.5 289.2 L919.0 286.1 L920.5 279.7 L922.0 278.0 L923.5 282.1 L925.0 287.1 L926.5 289.3 L928.0 281.3 L929.5 275.5 L931.0 279.8 L932.5 281.3 L934.0 289.1 L935.5 284.9 L937.0 278.5 L938.5 280.4 L940.0 284.8 L941.5 291.0 L943.0 291.2 L944.5 284.4 L946.0 282.1 L947.5 285.2 L949.0 288.5 L950.5 295.3 L952.0 290.5 L953.5 284.2 L955.0 286.2 L956.5 290.3 L958.0 297.3 L959.5 297.1 L961.0 288.7 L962.5 287.7 L964.0 294.9 L965.5 299.8 L967.0 302.6 L968.5 294.2 L970.0 289.4 L971.5 291.5 L973.0 297.7 L974.5 304.3 L976.0 298.9 L977.5 290.8 L979.0 292.0 L980.5 298.9 L982.0 305.6 L983.5 306.1 L985.0 297.4 L986.5 294.2 L988.0 299.3 L989.5 304.5 L991.0 307.7 L992.5 300.7 L994.0 296.1 L995.5 295.4 L997.0 299.7 L998.5 305.4 L1000.0 303.2 L1001.5 296.9 L1003.0 291.7 L1004.5 298.1 L1006.0 299.4 L1007.5 303.7 L1009.0 296.5 L1010.5 287.2 L1012.0 293.2 L1013.5 295.0 L1015.0 301.8 L1016.5 295.9 L1018.0 287.1 L1019.5 286.4 L1021.0 290.6 L1022.5 294.5 L1024.0 294.8 L1025.5 284.3 L1027.0 279.1 L1028.5 283.6 L1030.0 287.5 L1031.5 294.2 L1033.0 284.6 L1034.5 279.3 L1036.0 280.5 L1037.5 286.0 L1039.0 293.8 L1040.5 291.5 L1042.0 283.8 L1043.5 280.5 L1045.0 288.8 L1046.5 295.7 L1048.0 297.7 L1049.5 287.2 L1051.0 281.7 L1052.5 285.8 L1054.0 290.2 L1055.5 299.3 L1057.0 290.5 L1058.5 282.4 L1060.0 279.9 L1061.5 285.5 L1063.0 293.6 L1064.5 291.9 L1066.0 280.6 L1067.5 278.1 L1069.0 283.2 L1070.5 288.0 L1072.0 291.9 L1073.5 285.3 L1075.0 280.5 L1076.5 280.7 L1078.0 284.6 L1079.5 293.5 L1081.0 288.8 L1082.5 281.4 L1084.0 281.1 L1085.5 284.8 L1087.0 289.7 L1088.5 294.6 L1090.0 283.4 L1091.5 280.3 L1093.0 282.0 L1094.5 285.9 L1096.0 294.6 L1097.5 290.1 L1099.0 281.8 L1100.5 281.4 L1102.0 287.9 L1103.5 293.7 L1105.0 293.3 L1106.5 285.4 L1108.0 280.7 L1109.5 285.6 L1111.0 289.8 L1112.5 297.5 L1114.0 289.7 L1115.5 281.1 L1117.0 282.8 L1118.5 286.5 L1120.0 298.8 L1121.5 294.4 L1123.0 285.4 L1124.5 281.7 L1126.0 287.4 L1127.5 290.0 L1129.0 295.9 L1130.5 287.8 L1132.0 283.0 L1133.5 287.4 L1135.0 288.5 L1136.5 296.1 L1138.0 287.6 L1139.5 279.9 L1141.0 279.8 L1142.5 284.2 L1144.0 289.9 L1145.5 289.1 L1147.0 279.7 L1148.5 277.0 L1150.0 279.5 L1151.5 286.1 L1153.0 291.0 L1154.5 285.2 L1156.0 279.0 L1157.5 281.4 L1159.0 284.6 L1160.5 291.6 L1162.0 289.1 L1163.5 282.9 L1165.0 280.9 L1166.5 286.6 L1168.0 293.3 L1169.5 294.3 L1171.0 290.9 L1172.5 285.2 L1174.0 286.8 L1175.5 291.8 L1177.0 298.6 L1178.5 294.4 L1180.0 287.6 L1181.5 286.1 L1183.0 291.6 L1184.5 297.2 L1186.0 296.5 L1187.5 289.8 L1189.0 286.6 L1190.5 286.6 L1192.0 293.1 L1193.5 295.6 L1195.0 290.4 L1196.5 284.6 L1198.0 286.8 L1199.5 290.4 L1201.0 295.8 L1202.5 293.1 L1204.0 287.8 L1205.5 283.2 L1207.0 288.3 L1208.5 290.3 L1210.0 293.4 L1211.5 289.0 L1213.0 284.9 L1214.5 287.6 L1216.0 288.1 L1217.5 294.5 L1219.0 291.0 L1220.5 284.3 L1222.0 282.3 L1223.5 285.5 L1225.0 292.1 L1226.5 291.1 L1228.0 286.9 L1229.5 283.8 L1231.0 284.2 L1232.5 288.3 L1234.0 290.7 L1235.5 289.5 L1237.0 282.0 L1238.5 284.0 L1240.0 286.0 L1241.5 292.3 L1243.0 289.8 L1244.5 284.9 L1246.0 281.4 L1247.5 285.4 L1249.0 287.3 L1250.5 292.1 L1252.0 284.8 L1253.5 281.0 L1255.0 284.9 L1256.5 288.2 L1258.0 293.0 L1259.5 288.1 L1261.0 282.3 L1262.5 282.3 L1264.0 286.2 L1265.5 291.0 L1267.0 293.1 L1268.5 287.7 L1270.0 282.2 L1271.5 286.3 L1273.0 290.1" fill="none" stroke="#00ff00" stroke-width="1.1" shape-rendering="crispEdges"/>
<path d="M283.0 253.3 L284.5 257.3 L286.0 264.8 L287.5 257.8 L289.0 253.3 L290.5 256.2 L292.0 263.4 L293.5 270.2 L295.0 266.2 L296.5 259.1 L298.0 256.7 L299.5 262.9 L301.0 265.4 L302.5 270.5 L304.0 263.5 L305.5 256.7 L307.0 261.5 L308.5 265.3 L310.0 272.1 L311.5 267.5 L313.0 258.6 L314.5 257.6 L316.0 262.3 L317.5 270.4 L319.0 269.7 L320.5 260.6 L322.0 256.0 L323.5 259.8 L325.0 266.3 L326.5 271.8 L328.0 263.6 L329.5 256.0 L331.0 257.0 L332.5 265.3 L334.0 270.0 L335.5 267.5 L337.0 259.8 L338.5 257.5 L340.0 260.8 L341.5 269.6 L343.0 269.7 L344.5 263.9 L346.0 260.8 L347.5 263.4 L349.0 267.3 L350.5 274.7 L352.0 268.2 L353.5 260.1 L355.0 261.4 L356.5 264.4 L358.0 269.7 L359.5 272.2 L361.0 266.2 L362.5 259.6 L364.0 265.4 L365.5 269.6 L367.0 275.6 L368.5 267.3 L370.0 258.7 L371.5 258.0 L373.0 263.5 L374.5 273.2 L376.0 269.1 L377.5 261.3 L379.0 259.1 L380.5 263.5 L382.0 271.9 L383.5 271.8 L385.0 265.5 L386.5 261.4 L388.0 266.2 L389.5 270.9 L391.0 279.5 L392.5 273.6 L394.0 265.0 L395.5 263.8 L397.0 267.5 L398.5 273.9 L400.0 273.1 L401.5 265.3 L403.0 259.5 L404.5 265.2 L406.0 266.7 L407.5 275.0 L409.0 266.9 L410.5 259.2 L412.0 260.2 L413.5 265.2 L415.0 274.9 L416.5 273.0 L418.0 265.2 L419.5 264.2 L421.0 268.3 L422.5 272.3 L424.0 275.0 L425.5 265.7 L427.0 261.2 L428.5 265.1 L430.0 268.1 L431.5 274.0 L433.0 267.2 L434.5 256.5 L436.0 255.8 L437.5 260.8 L439.0 267.2 L440.5 268.1 L442.0 259.9 L443.5 255.0 L445.0 258.7 L446.5 262.4 L448.0 267.2 L449.5 260.6 L451.0 253.1 L452.5 253.0 L454.0 257.4 L455.5 264.1 L457.0 260.9 L458.5 252.9 L460.0 247.7 L461.5 253.9 L463.0 258.2 L464.5 263.6 L466.0 255.2 L467.5 249.4 L469.0 251.9 L470.5 257.5 L472.0 263.6 L473.5 259.0 L475.0 253.2 L476.5 251.7 L478.0 255.0 L479.5 260.0 L481.0 261.4 L482.5 254.4 L484.0 248.9 L485.5 253.4 L487.0 259.9 L488.5 263.9 L490.0 258.9 L491.5 251.2 L493.0 251.2 L494.5 256.0 L496.0 264.8 L497.5 262.9 L499.0 256.5 L500.5 254.6 L502.0 261.2 L503.5 264.7 L505.0 270.4 L506.5 263.1 L508.0 257.6 L509.5 262.9 L511.0 267.6 L512.5 275.0 L514.0 269.8 L515.5 261.3 L517.0 260.8 L518.5 264.6 L520.0 268.8 L521.5 270.1 L523.0 261.5 L524.5 258.3 L526.0 258.2 L527.5 263.4 L529.0 266.0 L530.5 260.0 L532.0 251.3 L533.5 252.1 L535.0 255.6 L536.5 261.8 L538.0 260.3 L539.5 252.1 L541.0 249.8 L542.5 255.8 L544.0 255.1 L545.5 260.1 L547.0 255.1 L548.5 248.8 L550.0 252.6 L551.5 255.8 L553.0 261.1 L554.5 255.2 L556.0 248.6 L557.5 246.6 L559.0 250.0 L560.5 253.6 L562.0 257.6 L563.5 246.4 L565.0 241.1 L566.5 244.3 L568.0 247.5 L569.5 253.8 L571.0 247.8 L572.5 240.7 L574.0 242.9 L575.5 244.9 L577.0 253.1 L578.5 252.8 L580.0 244.3 L581.5 242.4 L583.0 248.4 L584.5 254.6 L586.0 256.0 L587.5 251.0 L589.0 250.0 L590.5 251.7 L592.0 257.2 L593.5 262.9 L595.0 259.0 L596.5 256.2 L598.0 253.2 L599.5 259.2 L601.0 266.0 L602.5 269.8 L604.0 264.5 L605.5 260.7 L607.0 266.7 L608.5 268.9 L610.0 275.5 L611.5 269.2 L613.0 265.7 L614.5 266.4 L616.0 268.8 L617.5 275.5 L619.0 272.2 L620.5 261.9 L622.0 256.6 L623.5 262.2 L625.0 266.7 L626.5 267.3 L628.0 259.9 L629.5 254.7 L631.0 256.5 L632.5 261.3 L634.0 265.9 L635.5 263.1 L637.0 256.9 L638.5 256.1 L640.0 260.9 L641.5 267.9 L643.0 268.9 L644.5 262.2 L646.0 261.2 L647.5 263.8 L649.0 269.3 L650.5 275.9 L652.0 271.5 L653.5 267.9 L655.0 270.2 L656.5 272.0 L658.0 278.6 L659.5 277.4 L661.0 269.3 L662.5 266.0 L664.0 269.0 L665.5 272.5 L667.0 276.4 L668.5 270.1 L670.0 266.8 L671.5 268.6 L673.0 270.5 L674.5 278.9 L676.0 273.6 L677.5 269.1 L679.0 269.2 L680.5 271.3 L682.0 276.8 L683.5 277.3 L685.0 271.0 L686.5 266.5 L688.0 268.9 L689.5 275.1 L691.0 276.9 L692.5 273.4 L694.0 266.8 L695.5 267.9 L697.0 269.4 L698.5 273.0 L700.0 273.5 L701.5 268.6 L703.0 263.6 L704.5 269.4 L706.0 271.7 L707.5 277.7 L709.0 271.0 L710.5 268.3 L712.0 267.9 L713.5 270.3 L715.0 276.5 L716.5 273.1 L718.0 268.3 L719.5 266.2 L721.0 269.2 L722.5 273.6 L724.0 275.8 L725.5 269.6 L727.0 264.3 L728.5 267.5 L730.0 269.1 L731.5 274.6 L733.0 268.9 L734.5 264.6 L736.0 264.9 L737.5 266.8 L739.0 270.2 L740.5 269.6 L742.0 262.3 L743.5 262.0 L745.0 267.4 L746.5 270.7 L748.0 273.0 L749.5 268.8 L751.0 265.5 L752.5 269.4 L754.0 270.9 L755.5 274.0 L757.0 271.7 L758.5 265.4 L760.0 266.3 L761.5 267.4 L763.0 273.5 L764.5 274.5 L766.0 268.9 L767.5 264.2 L769.0 266.0 L770.5 270.5 L772.0 275.3 L773.5 270.1 L775.0 263.0 L776.5 264.1 L778.0 267.5 L779.5 271.8 L781.0 268.8 L782.5 263.5 L784.0 258.2 L785.5 263.9 L787.0 264.9 L788.5 268.2 L790.0 260.6 L791.5 257.9 L793.0 259.1 L794.5 260.1 L796.0 265.4 L797.5 261.2 L799.0 257.3 L800.5 254.2 L802.0 258.0 L803.5 262.5 L805.0 262.4 L806.5 256.0 L808.0 250.6 L809.5 253.9 L811.0 257.0 L812.5 262.0 L814.0 258.8 L815.5 248.2 L817.0 249.7 L818.5 255.7 L820.0 258.3 L821.5 259.1 L823.0 253.1 L824.5 248.0 L826.0 251.5 L827.5 256.9 L829.0 258.5 L830.5 253.2 L832.0 249.7 L833.5 248.7 L835.0 254.6 L836.5 258.1 L838.0 253.7 L839.5 251.0 L841.0 248.2 L842.5 253.2 L844.0 255.7 L845.5 255.3 L847.0 251.9 L848.5 247.2 L850.0 248.8 L851.5 252.9 L853.0 256.4 L854.5 252.3 L856.0 248.7 L857.5 249.5 L859.0 252.3 L860.5 255.8 L862.0 256.8 L863.5 252.9 L865.0 248.5 L866.5 253.7 L868.0 257.6 L869.5 263.5 L871.0 260.3 L872.5 253.2 L874.0 255.7 L875.5 260.3 L877.0 265.7 L878.5 261.3 L880.0 257.3 L881.5 255.1 L883.0 257.8 L884.5 261.8 L886.0 264.4 L887.5 258.3 L889.0 254.4 L890.5 257.6 L892.0 262.7 L893.5 266.8 L895.0 263.6 L896.5 258.3 L898.0 258.5 L899.5 262.7 L901.0 266.3 L902.5 268.6 L904.0 263.0 L905.5 259.3 L907.0 263.8 L908.5 266.9 L910.0 270.8 L911.5 264.0 L913.0 259.6 L914.5 260.3 L916.0 263.9 L917.5 268.7 L919.0 263.9 L920.5 257.9 L922.0 252.8 L923.5 255.9 L925.0 261.6 L926.5 262.2 L928.0 258.3 L929.5 253.3 L931.0 255.7 L932.5 257.1 L934.0 261.3 L935.5 257.0 L937.0 252.1 L938.5 251.8 L940.0 256.7 L941.5 262.3 L943.0 263.4 L944.5 258.3 L946.0 253.9 L947.5 259.3 L949.0 265.5 L950.5 271.1 L952.0 268.0 L953.5 261.5 L955.0 263.9 L956.5 265.7 L958.0 272.5 L959.5 267.5 L961.0 261.8 L962.5 259.6 L964.0 261.4 L965.5 264.3 L967.0 268.4 L968.5 259.3 L970.0 256.8 L971.5 260.7 L973.0 262.9 L974.5 267.9 L976.0 262.7 L977.5 254.5 L979.0 254.2 L980.5 254.9 L982.0 258.8 L983.5 259.8 L985.0 249.7 L986.5 250.5 L988.0 250.3 L989.5 255.7 L991.0 255.9 L992.5 250.6 L994.0 243.1 L995.5 244.6 L997.0 248.4 L998.5 255.9 L1000.0 252.9 L1001.5 248.3 L1003.0 244.7 L1004.5 252.2 L1006.0 256.0 L1007.5 260.6 L1009.0 255.9 L1010.5 251.7 L1012.0 258.3 L1013.5 258.7 L1015.0 265.3 L1016.5 260.8 L1018.0 256.0 L1019.5 257.0 L1021.0 260.2 L1022.5 264.0 L1024.0 265.6 L1025.5 259.4 L1027.0 254.7 L1028.5 261.1 L1030.0 265.1 L1031.5 266.9 L1033.0 260.1 L1034.5 256.6 L1036.0 260.5 L1037.5 264.2 L1039.0 272.0 L1040.5 267.0 L1042.0 259.8 L1043.5 259.0 L1045.0 262.9 L1046.5 269.5 L1048.0 271.9 L1049.5 268.0 L1051.0 263.6 L1052.5 266.6 L1054.0 273.8 L1055.5 278.9 L1057.0 272.0 L1058.5 267.4 L1060.0 269.3 L1061.5 270.8 L1063.0 277.7 L1064.5 277.5 L1066.0 270.2 L1067.5 265.2 L1069.0 270.5 L1070.5 274.8 L1072.0 276.7 L1073.5 272.7 L1075.0 265.6 L1076.5 267.3 L1078.0 271.1 L1079.5 277.1 L1081.0 271.3 L1082.5 264.0 L1084.0 258.5 L1085.5 263.9 L1087.0 266.8 L1088.5 269.6 L1090.0 263.7 L1091.5 258.5 L1093.0 260.1 L1094.5 263.1 L1096.0 269.9 L1097.5 265.9 L1099.0 257.2 L1100.5 256.8 L1102.0 262.4 L1103.5 268.5 L1105.0 269.6 L1106.5 263.0 L1108.0 259.0 L1109.5 264.6 L1111.0 269.8 L1112.5 273.3 L1114.0 266.3 L1115.5 261.6 L1117.0 262.4 L1118.5 269.1 L1120.0 273.8 L1121.5 272.1 L1123.0 265.2 L1124.5 263.6 L1126.0 265.2 L1127.5 272.9 L1129.0 275.9 L1130.5 269.2 L1132.0 265.1 L1133.5 267.2 L1135.0 271.1 L1136.5 279.3 L1138.0 272.9 L1139.5 268.0 L1141.0 266.5 L1142.5 271.5 L1144.0 276.3 L1145.5 278.4 L1147.0 269.1 L1148.5 266.5 L1150.0 268.2 L1151.5 275.5 L1153.0 279.0 L1154.5 270.4 L1156.0 264.2 L1157.5 265.8 L1159.0 271.9 L1160.5 281.1 L1162.0 278.6 L1163.5 273.1 L1165.0 269.7 L1166.5 274.6 L1168.0 280.3 L1169.5 283.6 L1171.0 275.5 L1172.5 272.4 L1174.0 272.4 L1175.5 276.9 L1177.0 282.2 L1178.5 278.4 L1180.0 269.2 L1181.5 271.3 L1183.0 274.4 L1184.5 280.3 L1186.0 281.2 L1187.5 272.8 L1189.0 265.2 L1190.5 271.1 L1192.0 274.7 L1193.5 280.1 L1195.0 271.2 L1196.5 267.3 L1198.0 268.2 L1199.5 274.0 L1201.0 277.2 L1202.5 275.9 L1204.0 266.9 L1205.5 262.7 L1207.0 267.2 L1208.5 270.7 L1210.0 274.8 L1211.5 265.9 L1213.0 259.0 L1214.5 263.1 L1216.0 265.0 L1217.5 272.7 L1219.0 264.4 L1220.5 255.6 L1222.0 253.2 L1223.5 259.0 L1225.0 262.6 L1226.5 263.5 L1228.0 253.6 L1229.5 249.9 L1231.0 252.4 L1232.5 257.1 L1234.0 262.3 L1235.5 255.1 L1237.0 248.4 L1238.5 249.8 L1240.0 253.1 L1241.5 261.7 L1243.0 260.1 L1244.5 252.5 L1246.0 247.2 L1247.5 256.6 L1249.0 260.0 L1250.5 263.0 L1252.0 254.6 L1253.5 248.6 L1255.0 251.9 L1256.5 254.7 L1258.0 260.0 L1259.5 254.3 L1261.0 244.9 L1262.5 243.8 L1264.0 246.4 L1265.5 253.7 L1267.0 252.4 L1268.5 242.2 L1270.0 239.0 L1271.5 242.2 L1273.0 245.8" fill="none" stroke="#0000ff" stroke-width="1.1" shape-rendering="crispEdges"/>
<path d="M283.0 233.8 L284.5 238.4 L286.0 242.9 L287.5 240.6 L289.0 238.2 L290.5 239.5 L292.0 243.2 L293.5 247.5 L295.0 246.0 L296.5 241.6 L298.0 241.9 L299.5 245.6 L301.0 248.1 L302.5 252.0 L304.0 245.7 L305.5 241.4 L307.0 246.0 L308.5 248.8 L310.0 255.1 L311.5 251.8 L313.0 246.5 L314.5 246.7 L316.0 249.5 L317.5 255.8 L319.0 257.3 L320.5 248.0 L322.0 245.5 L323.5 247.4 L325.0 250.9 L326.5 254.3 L328.0 250.2 L329.5 246.0 L331.0 249.8 L332.5 247.9 L334.0 254.7 L335.5 252.7 L337.0 248.4 L338.5 247.6 L340.0 249.9 L341.5 252.9 L343.0 253.3 L344.5 251.6 L346.0 248.2 L347.5 249.2 L349.0 252.0 L350.5 259.4 L352.0 253.0 L353.5 248.3 L355.0 246.9 L356.5 249.4 L358.0 251.8 L359.5 250.8 L361.0 246.3 L362.5 240.0 L364.0 242.3 L365.5 245.3 L367.0 248.1 L368.5 240.8 L370.0 235.2 L371.5 235.2 L373.0 239.0 L374.5 246.3 L376.0 244.1 L377.5 235.9 L379.0 235.1 L380.5 241.5 L382.0 245.1 L383.5 249.0 L385.0 241.6 L386.5 240.3 L388.0 244.4 L389.5 246.1 L391.0 252.9 L392.5 247.9 L394.0 242.7 L395.5 242.5 L397.0 246.5 L398.5 250.2 L400.0 248.7 L401.5 244.1 L403.0 241.1 L404.5 244.9 L406.0 243.8 L407.5 250.1 L409.0 243.3 L410.5 237.4 L412.0 236.0 L413.5 236.4 L415.0 242.5 L416.5 236.0 L418.0 228.4 L419.5 225.2 L421.0 228.5 L422.5 232.6 L424.0 234.7 L425.5 227.2 L427.0 221.9 L428.5 223.4 L430.0 226.9 L431.5 233.2 L433.0 227.2 L434.5 221.4 L436.0 222.4 L437.5 223.4 L439.0 227.9 L440.5 227.3 L442.0 219.9 L443.5 214.5 L445.0 219.9 L446.5 225.6 L448.0 226.5 L449.5 220.9 L451.0 214.7 L452.5 216.4 L454.0 221.4 L455.5 225.0 L457.0 224.1 L458.5 217.5 L460.0 215.1 L461.5 220.6 L463.0 222.9 L464.5 227.6 L466.0 222.1 L467.5 219.2 L469.0 223.9 L470.5 227.3 L472.0 234.2 L473.5 230.6 L475.0 227.1 L476.5 224.9 L478.0 228.7 L479.5 232.1 L481.0 232.8 L482.5 225.4 L484.0 221.6 L485.5 226.3 L487.0 231.1 L488.5 235.2 L490.0 232.7 L491.5 226.8 L493.0 227.1 L494.5 233.3 L496.0 239.5 L497.5 237.0 L499.0 231.6 L500.5 228.4 L502.0 237.9 L503.5 242.4 L505.0 245.0 L506.5 240.8 L508.0 236.0 L509.5 240.9 L511.0 247.5 L512.5 252.5 L514.0 247.6 L515.5 243.3 L517.0 241.4 L518.5 245.2 L520.0 250.9 L521.5 250.1 L523.0 244.3 L524.5 238.8 L526.0 241.0 L527.5 245.4 L529.0 249.7 L530.5 243.3 L532.0 236.6 L533.5 237.9 L535.0 242.0 L536.5 247.0 L538.0 246.5 L539.5 239.5 L541.0 235.1 L542.5 240.4 L544.0 245.5 L545.5 248.8 L547.0 242.7 L548.5 237.4 L550.0 239.9 L551.5 243.8 L553.0 249.5 L554.5 244.5 L556.0 236.7 L557.5 237.9 L559.0 240.2 L560.5 245.0 L562.0 243.5 L563.5 237.8 L565.0 233.2 L566.5 236.5 L568.0 240.0 L569.5 246.2 L571.0 240.2 L572.5 234.6 L574.0 234.0 L575.5 237.5 L577.0 242.2 L578.5 242.6 L580.0 234.5 L581.5 229.6 L583.0 236.4 L584.5 241.5 L586.0 245.1 L587.5 240.3 L589.0 231.8 L590.5 237.0 L592.0 241.0 L593.5 243.8 L595.0 240.9 L596.5 235.0 L598.0 232.1 L599.5 235.8 L601.0 241.4 L602.5 239.7 L604.0 230.1 L605.5 224.5 L607.0 226.6 L608.5 228.9 L610.0 232.9 L611.5 228.4 L613.0 221.9 L614.5 221.0 L616.0 229.0 L617.5 234.5 L619.0 233.4 L620.5 228.2 L622.0 222.3 L623.5 230.0 L625.0 235.8 L626.5 240.5 L628.0 235.2 L629.5 229.5 L631.0 233.2 L632.5 242.0 L634.0 247.8 L635.5 243.8 L637.0 236.1 L638.5 235.4 L640.0 241.3 L641.5 248.0 L643.0 250.9 L644.5 242.5 L646.0 237.0 L647.5 242.2 L649.0 246.6 L650.5 253.6 L652.0 247.8 L653.5 241.7 L655.0 243.6 L656.5 247.7 L658.0 256.6 L659.5 255.4 L661.0 246.3 L662.5 243.5 L664.0 250.7 L665.5 252.0 L667.0 256.6 L668.5 250.1 L670.0 244.4 L671.5 247.0 L673.0 248.4 L674.5 256.9 L676.0 251.1 L677.5 243.4 L679.0 241.1 L680.5 245.2 L682.0 250.9 L683.5 250.1 L685.0 244.5 L686.5 235.3 L688.0 240.8 L689.5 246.0 L691.0 250.2 L692.5 243.7 L694.0 236.1 L695.5 238.3 L697.0 241.0 L698.5 250.9 L700.0 248.1 L701.5 239.9 L703.0 237.1 L704.5 240.8 L706.0 244.0 L707.5 250.0 L709.0 244.5 L710.5 236.3 L712.0 237.5 L713.5 240.6 L715.0 248.5 L716.5 243.2 L718.0 236.5 L719.5 232.1 L721.0 237.4 L722.5 243.0 L724.0 243.3 L725.5 233.9 L727.0 228.5 L728.5 232.5 L730.0 235.8 L731.5 243.6 L733.0 235.6 L734.5 231.3 L736.0 231.7 L737.5 234.9 L739.0 244.3 L740.5 244.1 L742.0 233.2 L743.5 229.6 L745.0 235.9 L746.5 242.4 L748.0 248.2 L749.5 239.2 L751.0 233.6 L752.5 236.6 L754.0 237.8 L755.5 245.1 L757.0 239.5 L758.5 232.0 L760.0 230.5 L761.5 238.9 L763.0 243.3 L764.5 246.9 L766.0 238.4 L767.5 234.3 L769.0 235.7 L770.5 239.4 L772.0 248.2 L773.5 236.7 L775.0 231.5 L776.5 230.8 L778.0 233.6 L779.5 242.4 L781.0 240.4 L782.5 232.9 L784.0 226.2 L785.5 231.2 L787.0 236.0 L788.5 240.6 L790.0 232.8 L791.5 228.4 L793.0 228.9 L794.5 231.1 L796.0 241.1 L797.5 234.2 L799.0 224.7 L800.5 222.9 L802.0 228.5 L803.5 233.9 L805.0 235.2 L806.5 226.5 L808.0 222.2 L809.5 226.8 L811.0 226.7 L812.5 236.5 L814.0 230.1 L815.5 221.1 L817.0 218.4 L818.5 226.1 L820.0 231.9 L821.5 232.2 L823.0 224.8 L824.5 219.7 L826.0 226.6 L827.5 232.6 L829.0 239.5 L830.5 230.3 L832.0 225.4 L833.5 227.6 L835.0 229.5 L836.5 237.6 L838.0 234.3 L839.5 225.9 L841.0 223.8 L842.5 230.1 L844.0 236.6 L845.5 240.2 L847.0 232.2 L848.5 225.6 L850.0 227.8 L851.5 233.0 L853.0 239.1 L854.5 235.3 L856.0 229.7 L857.5 229.4 L859.0 232.7 L860.5 240.9 L862.0 238.5 L863.5 231.3 L865.0 226.9 L866.5 233.6 L868.0 238.7 L869.5 242.2 L871.0 237.0 L872.5 230.9 L874.0 232.3 L875.5 235.6 L877.0 245.9 L878.5 242.4 L880.0 233.5 L881.5 231.3 L883.0 238.2 L884.5 242.5 L886.0 247.3 L887.5 238.2 L889.0 234.5 L890.5 240.3 L892.0 243.5 L893.5 250.6 L895.0 242.6 L896.5 235.3 L898.0 235.8 L899.5 238.5 L901.0 243.5 L902.5 242.9 L904.0 236.0 L905.5 230.6 L907.0 237.4 L908.5 241.3 L910.0 244.6 L911.5 239.7 L913.0 233.8 L914.5 237.9 L916.0 240.6 L917.5 246.6 L919.0 241.2 L920.5 233.7 L922.0 230.1 L923.5 233.1 L925.0 237.5 L926.5 238.5 L928.0 231.2 L929.5 224.0 L931.0 228.4 L932.5 232.7 L934.0 238.6 L935.5 231.1 L937.0 225.6 L938.5 224.9 L940.0 228.8 L941.5 232.7 L943.0 234.8 L944.5 225.2 L946.0 221.5 L947.5 226.6 L949.0 233.5 L950.5 237.1 L952.0 231.8 L953.5 222.7 L955.0 224.8 L956.5 231.2 L958.0 237.1 L959.5 234.0 L961.0 229.9 L962.5 229.5 L964.0 234.3 L965.5 238.7 L967.0 241.4 L968.5 234.3 L970.0 233.0 L971.5 237.4 L973.0 237.9 L974.5 243.0 L976.0 238.2 L977.5 230.7 L979.0 229.4 L980.5 234.2 L982.0 238.3 L983.5 237.4 L985.0 230.9 L986.5 224.3 L988.0 227.7 L989.5 231.8 L991.0 233.2 L992.5 228.6 L994.0 224.1 L995.5 225.2 L997.0 228.8 L998.5 234.7 L1000.0 231.3 L1001.5 224.8 L1003.0 221.6 L1004.5 227.1 L1006.0 233.1 L1007.5 236.5 L1009.0 230.3 L1010.5 228.8 L1012.0 233.4 L1013.5 237.9 L1015.0 243.4 L1016.5 235.4 L1018.0 231.5 L1019.5 231.1 L1021.0 234.4 L1022.5 239.1 L1024.0 241.0 L1025.5 232.5 L1027.0 229.9 L1028.5 232.3 L1030.0 240.4 L1031.5 241.2 L1033.0 236.4 L1034.5 229.9 L1036.0 231.7 L1037.5 236.0 L1039.0 241.2 L1040.5 238.4 L1042.0 234.5 L1043.5 235.5 L1045.0 238.2 L1046.5 242.9 L1048.0 245.2 L1049.5 241.4 L1051.0 236.1 L1052.5 237.8 L1054.0 243.5 L1055.5 247.1 L1057.0 242.3 L1058.5 236.5 L1060.0 237.2 L1061.5 240.7 L1063.0 244.1 L1064.5 245.2 L1066.0 239.2 L1067.5 234.8 L1069.0 237.7 L1070.5 242.2 L1072.0 246.3 L1073.5 240.4 L1075.0 235.2 L1076.5 234.4 L1078.0 238.2 L1079.5 243.0 L1081.0 241.1 L1082.5 234.6 L1084.0 231.9 L1085.5 236.3 L1087.0 236.2 L1088.5 240.2 L1090.0 231.5 L1091.5 229.0 L1093.0 229.6 L1094.5 233.4 L1096.0 239.1 L1097.5 231.5 L1099.0 224.7 L1100.5 224.2 L1102.0 225.6 L1103.5 230.0 L1105.0 230.4 L1106.5 225.3 L1108.0 217.8 L1109.5 224.7 L1111.0 227.7 L1112.5 229.8 L1114.0 226.5 L1115.5 220.6 L1117.0 220.9 L1118.5 224.3 L1120.0 230.5 L1121.5 228.1 L1123.0 223.4 L1124.5 222.3 L1126.0 227.9 L1127.5 232.1 L1129.0 233.2 L1130.5 228.7 L1132.0 223.8 L1133.5 224.3 L1135.0 229.0 L1136.5 232.2 L1138.0 226.7 L1139.5 223.8 L1141.0 222.0 L1142.5 225.4 L1144.0 229.1 L1145.5 226.6 L1147.0 222.7 L1148.5 218.1 L1150.0 220.4 L1151.5 225.5 L1153.0 224.3 L1154.5 220.1 L1156.0 219.4 L1157.5 224.3 L1159.0 228.0 L1160.5 235.0 L1162.0 237.7 L1163.5 234.0 L1165.0 234.4 L1166.5 238.3 L1168.0 243.3 L1169.5 247.1 L1171.0 244.0 L1172.5 243.5 L1174.0 246.2 L1175.5 246.9 L1177.0 254.2 L1178.5 248.4 L1180.0 242.7 L1181.5 239.7 L1183.0 245.2 L1184.5 249.4 L1186.0 247.6 L1187.5 242.3 L1189.0 240.0 L1190.5 238.8 L1192.0 242.6 L1193.5 246.0 L1195.0 241.9 L1196.5 236.9 L1198.0 240.1 L1199.5 244.5 L1201.0 248.1 L1202.5 245.3 L1204.0 238.3 L1205.5 238.1 L1207.0 242.0 L1208.5 243.6 L1210.0 244.3 L1211.5 238.5 L1213.0 237.3 L1214.5 241.2 L1216.0 243.1 L1217.5 251.2 L1219.0 245.6 L1220.5 241.5 L1222.0 240.7 L1223.5 245.1 L1225.0 248.7 L1226.5 251.4 L1228.0 244.2 L1229.5 239.3 L1231.0 245.2 L1232.5 246.3 L1234.0 250.8 L1235.5 245.1 L1237.0 239.4 L1238.5 237.9 L1240.0 238.6 L1241.5 243.5 L1243.0 237.6 L1244.5 230.8 L1246.0 226.4 L1247.5 228.3 L1249.0 231.0 L1250.5 233.0 L1252.0 224.5 L1253.5 218.8 L1255.0 222.2 L1256.5 226.0 L1258.0 232.4 L1259.5 226.5 L1261.0 220.0 L1262.5 219.6 L1264.0 225.1 L1265.5 228.3 L1267.0 229.0 L1268.5 223.7 L1270.0 219.3 L1271.5 225.0 L1273.0 228.8" fill="none" stroke="#00ff00" stroke-width="1.1" shape-rendering="crispEdges"/>
<path d="M283.0 203.9 L284.5 210.4 L286.0 217.2 L287.5 211.2 L289.0 203.4 L290.5 207.3 L292.0 213.8 L293.5 222.0 L295.0 218.7 L296.5 211.5 L298.0 208.5 L299.5 214.5 L301.0 221.4 L302.5 224.5 L304.0 219.3 L305.5 213.7 L307.0 215.4 L308.5 218.2 L310.0 226.3 L311.5 219.0 L313.0 212.5 L314.5 212.0 L316.0 218.5 L317.5 223.8 L319.0 223.0 L320.5 214.1 L322.0 209.4 L323.5 216.1 L325.0 220.7 L326.5 227.6 L328.0 220.9 L329.5 214.8 L331.0 217.7 L332.5 222.1 L334.0 229.7 L335.5 226.9 L337.0 218.8 L338.5 217.3 L340.0 222.1 L341.5 228.3 L343.0 234.8 L344.5 228.6 L346.0 221.5 L347.5 224.1 L349.0 229.0 L350.5 236.7 L352.0 233.2 L353.5 224.5 L355.0 222.3 L356.5 226.2 L358.0 231.6 L359.5 227.5 L361.0 218.0 L362.5 209.9 L364.0 211.5 L365.5 217.0 L367.0 219.2 L368.5 210.9 L370.0 203.9 L371.5 205.7 L373.0 207.4 L374.5 216.2 L376.0 210.2 L377.5 203.4 L379.0 202.7 L380.5 207.5 L382.0 214.3 L383.5 216.4 L385.0 210.6 L386.5 205.9 L388.0 211.1 L389.5 216.8 L391.0 222.0 L392.5 217.3 L394.0 210.6 L395.5 209.9 L397.0 216.3 L398.5 224.4 L400.0 223.8 L401.5 216.2 L403.0 208.8 L404.5 213.8 L406.0 217.5 L407.5 221.8 L409.0 214.5 L410.5 207.5 L412.0 209.2 L413.5 214.7 L415.0 222.6 L416.5 217.8 L418.0 209.9 L419.5 206.6 L421.0 210.8 L422.5 215.7 L424.0 219.4 L425.5 210.2 L427.0 205.9 L428.5 206.4 L430.0 207.8 L431.5 215.1 L433.0 206.7 L434.5 200.7 L436.0 198.0 L437.5 200.8 L439.0 205.9 L440.5 205.5 L442.0 197.5 L443.5 191.7 L445.0 196.0 L446.5 198.0 L448.0 202.4 L449.5 193.8 L451.0 187.5 L452.5 188.2 L454.0 194.2 L455.5 198.5 L457.0 194.7 L458.5 189.9 L460.0 188.3 L461.5 190.4 L463.0 197.4 L464.5 199.7 L466.0 192.6 L467.5 189.8 L469.0 193.3 L470.5 198.0 L472.0 203.3 L473.5 199.9 L475.0 194.6 L476.5 191.2 L478.0 194.4 L479.5 200.4 L481.0 200.1 L482.5 191.5 L484.0 187.8 L485.5 190.8 L487.0 191.2 L488.5 196.6 L490.0 191.1 L491.5 185.1 L493.0 188.4 L494.5 191.3 L496.0 201.7 L497.5 199.0 L499.0 191.4 L500.5 190.4 L502.0 196.6 L503.5 200.3 L505.0 206.4 L506.5 200.8 L508.0 196.3 L509.5 202.0 L511.0 204.7 L512.5 209.9 L514.0 205.1 L515.5 200.0 L517.0 195.6 L518.5 202.6 L520.0 205.6 L521.5 205.7 L523.0 196.3 L524.5 193.5 L526.0 196.2 L527.5 196.6 L529.0 200.4 L530.5 192.0 L532.0 187.0 L533.5 186.4 L535.0 189.0 L536.5 193.0 L538.0 190.9 L539.5 184.8 L541.0 183.1 L542.5 188.0 L544.0 190.9 L545.5 197.0 L547.0 189.7 L548.5 183.9 L550.0 186.8 L551.5 191.7 L553.0 195.6 L554.5 191.9 L556.0 184.4 L557.5 182.6 L559.0 187.2 L560.5 191.2 L562.0 193.1 L563.5 187.8 L565.0 182.2 L566.5 186.9 L568.0 189.8 L569.5 193.9 L571.0 188.8 L572.5 183.4 L574.0 182.8 L575.5 187.9 L577.0 194.6 L578.5 192.8 L580.0 186.7 L581.5 183.3 L583.0 187.4 L584.5 193.3 L586.0 195.0 L587.5 191.2 L589.0 185.9 L590.5 191.1 L592.0 195.2 L593.5 200.4 L595.0 198.4 L596.5 189.5 L598.0 190.9 L599.5 193.6 L601.0 197.4 L602.5 200.0 L604.0 193.7 L605.5 190.7 L607.0 194.2 L608.5 202.3 L610.0 204.1 L611.5 203.2 L613.0 196.9 L614.5 197.9 L616.0 200.1 L617.5 204.5 L619.0 203.7 L620.5 198.8 L622.0 197.8 L623.5 203.9 L625.0 207.9 L626.5 208.8 L628.0 204.7 L629.5 199.8 L631.0 201.8 L632.5 208.8 L634.0 213.9 L635.5 214.9 L637.0 209.8 L638.5 211.0 L640.0 215.5 L641.5 221.4 L643.0 224.5 L644.5 219.0 L646.0 217.3 L647.5 222.5 L649.0 227.5 L650.5 235.5 L652.0 230.2 L653.5 227.0 L655.0 229.1 L656.5 232.6 L658.0 236.9 L659.5 235.9 L661.0 229.3 L662.5 227.0 L664.0 231.8 L665.5 233.8 L667.0 233.8 L668.5 227.5 L670.0 226.3 L671.5 228.8 L673.0 231.8 L674.5 236.3 L676.0 233.7 L677.5 226.8 L679.0 226.2 L680.5 230.5 L682.0 235.0 L683.5 234.3 L685.0 228.7 L686.5 223.8 L688.0 224.1 L689.5 227.4 L691.0 231.9 L692.5 228.4 L694.0 223.4 L695.5 220.3 L697.0 226.9 L698.5 230.0 L700.0 228.7 L701.5 223.2 L703.0 219.8 L704.5 223.3 L706.0 226.4 L707.5 228.6 L709.0 222.1 L710.5 218.7 L712.0 221.8 L713.5 223.5 L715.0 229.6 L716.5 225.8 L718.0 220.7 L719.5 217.8 L721.0 220.1 L722.5 224.1 L724.0 221.9 L725.5 215.2 L727.0 210.3 L728.5 214.6 L730.0 216.0 L731.5 221.7 L733.0 215.4 L734.5 210.2 L736.0 212.7 L737.5 215.2 L739.0 218.8 L740.5 214.5 L742.0 207.9 L743.5 200.5 L745.0 207.7 L746.5 210.6 L748.0 213.1 L749.5 207.3 L751.0 202.4 L752.5 204.1 L754.0 207.9 L755.5 212.6 L757.0 208.7 L758.5 203.1 L760.0 204.4 L761.5 205.9 L763.0 211.7 L764.5 212.3 L766.0 206.2 L767.5 200.7 L769.0 206.3 L770.5 210.5 L772.0 215.5 L773.5 209.8 L775.0 206.0 L776.5 206.1 L778.0 210.9 L779.5 212.7 L781.0 213.4 L782.5 204.7 L784.0 199.2 L785.5 203.6 L787.0 206.0 L788.5 207.9 L790.0 205.5 L791.5 200.0 L793.0 203.2 L794.5 205.7 L796.0 212.1 L797.5 209.3 L799.0 202.8 L800.5 203.1 L802.0 206.3 L803.5 211.7 L805.0 214.8 L806.5 205.8 L808.0 202.8 L809.5 206.5 L811.0 211.4 L812.5 215.5 L814.0 209.8 L815.5 205.0 L817.0 205.2 L818.5 209.6 L820.0 216.6 L821.5 214.8 L823.0 209.9 L824.5 207.9 L826.0 214.8 L827.5 219.1 L829.0 223.4 L830.5 214.1 L832.0 211.2 L833.5 212.1 L835.0 213.3 L836.5 220.8 L838.0 216.5 L839.5 207.9 L841.0 206.8 L842.5 210.5 L844.0 215.3 L845.5 214.2 L847.0 202.6 L848.5 197.2 L850.0 201.3 L851.5 203.0 L853.0 210.5 L854.5 207.2 L856.0 200.9 L857.5 200.5 L859.0 204.8 L860.5 210.9 L862.0 209.9 L863.5 202.1 L865.0 196.7 L866.5 200.0 L868.0 208.5 L869.5 210.4 L871.0 204.4 L872.5 197.9 L874.0 201.2 L875.5 204.4 L877.0 212.8 L878.5 207.9 L880.0 201.5 L881.5 197.3 L883.0 204.0 L884.5 209.6 L886.0 211.8 L887.5 205.0 L889.0 197.6 L890.5 199.4 L892.0 203.2 L893.5 211.4 L895.0 204.0 L896.5 197.9 L898.0 199.0 L899.5 202.6 L901.0 207.7 L902.5 209.1 L904.0 201.7 L905.5 198.6 L907.0 203.4 L908.5 206.5 L910.0 211.6 L911.5 204.7 L913.0 200.6 L914.5 203.3 L916.0 206.5 L917.5 213.4 L919.0 209.8 L920.5 203.0 L922.0 201.8 L923.5 206.2 L925.0 211.4 L926.5 212.1 L928.0 204.6 L929.5 199.8 L931.0 204.9 L932.5 208.2 L934.0 214.3 L935.5 207.5 L937.0 200.3 L938.5 199.3 L940.0 203.5 L941.5 211.3 L943.0 208.2 L944.5 201.6 L946.0 197.6 L947.5 205.3 L949.0 211.9 L950.5 217.5 L952.0 208.9 L953.5 205.1 L955.0 205.4 L956.5 210.9 L958.0 217.3 L959.5 214.4 L961.0 207.5 L962.5 204.2 L964.0 210.5 L965.5 217.8 L967.0 219.1 L968.5 213.1 L970.0 205.9 L971.5 209.5 L973.0 213.9 L974.5 220.9 L976.0 215.4 L977.5 209.4 L979.0 206.0 L980.5 212.2 L982.0 217.6 L983.5 219.5 L985.0 210.8 L986.5 204.4 L988.0 208.3 L989.5 211.9 L991.0 214.9 L992.5 207.1 L994.0 200.1 L995.5 204.0 L997.0 209.1 L998.5 215.3 L1000.0 214.2 L1001.5 206.1 L1003.0 203.4 L1004.5 209.0 L1006.0 218.1 L1007.5 223.2 L1009.0 215.9 L1010.5 210.2 L1012.0 214.8 L1013.5 218.7 L1015.0 226.3 L1016.5 219.9 L1018.0 210.4 L1019.5 211.0 L1021.0 214.1 L1022.5 220.9 L1024.0 220.2 L1025.5 212.3 L1027.0 205.9 L1028.5 212.6 L1030.0 218.6 L1031.5 223.9 L1033.0 214.5 L1034.5 206.3 L1036.0 209.5 L1037.5 211.6 L1039.0 217.9 L1040.5 215.1 L1042.0 207.3 L1043.5 204.2 L1045.0 210.1 L1046.5 214.4 L1048.0 217.4 L1049.5 209.9 L1051.0 204.4 L1052.5 208.7 L1054.0 213.4 L1055.5 220.5 L1057.0 215.4 L1058.5 207.5 L1060.0 207.0 L1061.5 211.8 L1063.0 218.1 L1064.5 217.6 L1066.0 211.3 L1067.5 206.4 L1069.0 209.3 L1070.5 216.6 L1072.0 221.3 L1073.5 213.3 L1075.0 204.8 L1076.5 207.1 L1078.0 208.4 L1079.5 215.7 L1081.0 210.6 L1082.5 202.0 L1084.0 198.0 L1085.5 202.1 L1087.0 205.6 L1088.5 207.9 L1090.0 199.2 L1091.5 192.7 L1093.0 195.7 L1094.5 198.1 L1096.0 207.0 L1097.5 198.4 L1099.0 191.1 L1100.5 187.3 L1102.0 191.6 L1103.5 199.2 L1105.0 200.3 L1106.5 191.2 L1108.0 184.3 L1109.5 189.2 L1111.0 192.4 L1112.5 197.5 L1114.0 191.4 L1115.5 185.9 L1117.0 189.3 L1118.5 193.2 L1120.0 199.4 L1121.5 197.4 L1123.0 189.3 L1124.5 186.6 L1126.0 196.0 L1127.5 198.2 L1129.0 202.2 L1130.5 193.7 L1132.0 188.4 L1133.5 190.3 L1135.0 196.5 L1136.5 200.7 L1138.0 192.2 L1139.5 185.2 L1141.0 185.2 L1142.5 189.2 L1144.0 193.3 L1145.5 192.7 L1147.0 183.3 L1148.5 180.0 L1150.0 183.8 L1151.5 188.6 L1153.0 191.9 L1154.5 184.2 L1156.0 178.2 L1157.5 181.3 L1159.0 187.3 L1160.5 195.1 L1162.0 192.5 L1163.5 190.7 L1165.0 189.0 L1166.5 196.4 L1168.0 201.3 L1169.5 206.0 L1171.0 199.0 L1172.5 196.7 L1174.0 200.1 L1175.5 206.6 L1177.0 215.5 L1178.5 207.7 L1180.0 203.2 L1181.5 202.0 L1183.0 210.6 L1184.5 213.0 L1186.0 214.2 L1187.5 209.0 L1189.0 204.2 L1190.5 208.7 L1192.0 214.0 L1193.5 219.1 L1195.0 211.8 L1196.5 207.5 L1198.0 208.4 L1199.5 211.5 L1201.0 217.3 L1202.5 216.3 L1204.0 207.4 L1205.5 204.1 L1207.0 206.9 L1208.5 213.6 L1210.0 215.5 L1211.5 207.5 L1213.0 201.8 L1214.5 204.8 L1216.0 211.4 L1217.5 216.6 L1219.0 213.1 L1220.5 206.5 L1222.0 205.7 L1223.5 209.5 L1225.0 215.9 L1226.5 216.4 L1228.0 210.2 L1229.5 209.1 L1231.0 213.1 L1232.5 216.7 L1234.0 222.1 L1235.5 216.3 L1237.0 213.8 L1238.5 215.2 L1240.0 221.3 L1241.5 229.7 L1243.0 226.0 L1244.5 220.5 L1246.0 217.2 L1247.5 220.6 L1249.0 227.7 L1250.5 231.2 L1252.0 225.4 L1253.5 220.5 L1255.0 220.7 L1256.5 225.5 L1258.0 229.6 L1259.5 225.2 L1261.0 220.7 L1262.5 218.6 L1264.0 219.3 L1265.5 223.5 L1267.0 222.2 L1268.5 213.6 L1270.0 212.4 L1271.5 212.5 L1273.0 216.8" fill="none" stroke="#0000ff" stroke-width="1.1" shape-rendering="crispEdges"/>
<path d="M283.0 189.7 L284.5 192.8 L286.0 197.4 L287.5 191.9 L289.0 186.4 L290.5 189.8 L292.0 192.3 L293.5 197.1 L295.0 194.2 L296.5 185.6 L298.0 182.8 L299.5 189.8 L301.0 192.7 L302.5 193.2 L304.0 185.8 L305.5 178.5 L307.0 182.2 L308.5 184.5 L310.0 188.4 L311.5 184.3 L313.0 175.4 L314.5 175.7 L316.0 178.9 L317.5 181.6 L319.0 181.8 L320.5 175.5 L322.0 173.2 L323.5 175.8 L325.0 178.7 L326.5 182.3 L328.0 175.6 L329.5 169.3 L331.0 170.7 L332.5 172.0 L334.0 178.1 L335.5 175.6 L337.0 168.9 L338.5 165.7 L340.0 172.9 L341.5 175.6 L343.0 177.1 L344.5 170.6 L346.0 167.4 L347.5 168.6 L349.0 173.9 L350.5 178.0 L352.0 173.5 L353.5 166.0 L355.0 167.4 L356.5 167.9 L358.0 171.2 L359.5 170.3 L361.0 163.3 L362.5 157.0 L364.0 160.6 L365.5 165.1 L367.0 169.6 L368.5 165.3 L370.0 160.7 L371.5 161.2 L373.0 164.8 L374.5 170.9 L376.0 169.5 L377.5 164.5 L379.0 163.8 L380.5 169.7 L382.0 175.8 L383.5 178.3 L385.0 173.0 L386.5 170.3 L388.0 172.5 L389.5 178.8 L391.0 184.5 L392.5 182.7 L394.0 177.3 L395.5 174.6 L397.0 179.6 L398.5 183.3 L400.0 181.3 L401.5 175.6 L403.0 171.9 L404.5 174.3 L406.0 176.5 L407.5 182.1 L409.0 175.0 L410.5 169.1 L412.0 173.1 L413.5 173.9 L415.0 182.4 L416.5 181.0 L418.0 173.3 L419.5 173.8 L421.0 179.5 L422.5 184.9 L424.0 189.2 L425.5 184.3 L427.0 181.1 L428.5 185.6 L430.0 189.0 L431.5 196.0 L433.0 192.2 L434.5 184.7 L436.0 183.4 L437.5 185.9 L439.0 191.3 L440.5 188.6 L442.0 184.5 L443.5 180.7 L445.0 181.5 L446.5 187.2 L448.0 188.7 L449.5 183.1 L451.0 177.7 L452.5 176.7 L454.0 178.9 L455.5 183.5 L457.0 183.2 L458.5 180.5 L460.0 177.2 L461.5 180.7 L463.0 187.5 L464.5 187.6 L466.0 180.9 L467.5 177.6 L469.0 180.2 L470.5 183.9 L472.0 188.4 L473.5 182.3 L475.0 175.7 L476.5 175.8 L478.0 178.2 L479.5 182.9 L481.0 181.0 L482.5 171.8 L484.0 170.2 L485.5 173.1 L487.0 176.9 L488.5 179.7 L490.0 174.6 L491.5 168.3 L493.0 171.0 L494.5 174.5 L496.0 179.5 L497.5 180.7 L499.0 173.6 L500.5 170.4 L502.0 175.9 L503.5 179.7 L505.0 182.0 L506.5 178.9 L508.0 174.1 L509.5 177.0 L511.0 179.3 L512.5 185.4 L514.0 181.3 L515.5 179.6 L517.0 176.9 L518.5 182.8 L520.0 188.2 L521.5 190.7 L523.0 186.8 L524.5 185.8 L526.0 186.9 L527.5 193.8 L529.0 196.8 L530.5 194.5 L532.0 191.1 L533.5 193.4 L535.0 193.7 L536.5 198.5 L538.0 197.7 L539.5 193.9 L541.0 192.5 L542.5 198.5 L544.0 205.7 L545.5 206.0 L547.0 201.6 L548.5 198.3 L550.0 198.2 L551.5 204.9 L553.0 210.7 L554.5 204.0 L556.0 198.3 L557.5 198.9 L559.0 201.1 L560.5 206.2 L562.0 207.0 L563.5 201.9 L565.0 198.5 L566.5 200.6 L568.0 203.6 L569.5 208.2 L571.0 202.6 L572.5 196.2 L574.0 198.1 L575.5 199.6 L577.0 202.9 L578.5 199.0 L580.0 194.1 L581.5 191.1 L583.0 189.7 L584.5 194.5 L586.0 196.3 L587.5 188.7 L589.0 181.6 L590.5 182.1 L592.0 184.0 L593.5 190.0 L595.0 185.1 L596.5 177.8 L598.0 173.6 L599.5 177.4 L601.0 178.4 L602.5 177.5 L604.0 169.8 L605.5 165.0 L607.0 167.1 L608.5 167.7 L610.0 172.9 L611.5 165.6 L613.0 161.1 L614.5 159.1 L616.0 161.5 L617.5 165.4 L619.0 164.9 L620.5 157.7 L622.0 157.0 L623.5 160.8 L625.0 164.9 L626.5 166.1 L628.0 160.6 L629.5 159.2 L631.0 160.6 L632.5 165.1 L634.0 172.4 L635.5 169.3 L637.0 164.1 L638.5 163.9 L640.0 168.1 L641.5 172.4 L643.0 171.9 L644.5 166.4 L646.0 165.4 L647.5 166.6 L649.0 170.9 L650.5 176.5 L652.0 174.6 L653.5 167.7 L655.0 169.3 L656.5 175.9 L658.0 181.9 L659.5 179.4 L661.0 175.7 L662.5 173.5 L664.0 178.5 L665.5 182.5 L667.0 185.0 L668.5 182.2 L670.0 175.7 L671.5 177.7 L673.0 182.0 L674.5 188.0 L676.0 183.8 L677.5 178.6 L679.0 176.3 L680.5 180.0 L682.0 182.7 L683.5 185.5 L685.0 176.4 L686.5 173.0 L688.0 175.6 L689.5 182.0 L691.0 183.8 L692.5 178.1 L694.0 172.9 L695.5 173.3 L697.0 174.2 L698.5 180.8 L700.0 177.4 L701.5 173.1 L703.0 167.2 L704.5 173.5 L706.0 176.7 L707.5 180.8 L709.0 176.0 L710.5 170.6 L712.0 173.1 L713.5 178.6 L715.0 182.6 L716.5 178.8 L718.0 171.1 L719.5 167.6 L721.0 173.8 L722.5 176.4 L724.0 177.5 L725.5 169.8 L727.0 165.9 L728.5 167.0 L730.0 169.4 L731.5 172.4 L733.0 165.7 L734.5 162.5 L736.0 162.9 L737.5 165.7 L739.0 170.2 L740.5 168.5 L742.0 160.1 L743.5 158.2 L745.0 162.1 L746.5 166.8 L748.0 173.5 L749.5 168.2 L751.0 166.9 L752.5 166.8 L754.0 170.0 L755.5 175.3 L757.0 173.6 L758.5 167.2 L760.0 166.9 L761.5 170.3 L763.0 174.4 L764.5 173.5 L766.0 169.5 L767.5 166.6 L769.0 170.5 L770.5 173.0 L772.0 178.6 L773.5 177.4 L775.0 174.4 L776.5 175.5 L778.0 182.9 L779.5 190.4 L781.0 192.4 L782.5 189.7 L784.0 187.9 L785.5 194.5 L787.0 202.0 L788.5 208.0 L790.0 203.5 L791.5 201.8 L793.0 204.0 L794.5 207.1 L796.0 213.7 L797.5 211.2 L799.0 204.1 L800.5 201.5 L802.0 205.1 L803.5 208.7 L805.0 209.8 L806.5 200.5 L808.0 195.8 L809.5 197.4 L811.0 197.5 L812.5 203.3 L814.0 199.4 L815.5 192.0 L817.0 189.8 L818.5 193.2 L820.0 198.7 L821.5 196.3 L823.0 187.9 L824.5 184.7 L826.0 188.8 L827.5 191.8 L829.0 192.7 L830.5 185.2 L832.0 181.7 L833.5 185.3 L835.0 186.3 L836.5 190.7 L838.0 187.5 L839.5 182.1 L841.0 177.9 L842.5 180.1 L844.0 187.4 L845.5 186.2 L847.0 181.8 L848.5 177.2 L850.0 179.9 L851.5 181.1 L853.0 185.8 L854.5 180.6 L856.0 175.0 L857.5 176.0 L859.0 179.4 L860.5 185.5 L862.0 185.5 L863.5 182.0 L865.0 178.2 L866.5 183.5 L868.0 188.0 L869.5 191.0 L871.0 186.9 L872.5 181.5 L874.0 186.1 L875.5 191.5 L877.0 197.4 L878.5 195.3 L880.0 186.9 L881.5 188.2 L883.0 192.9 L884.5 196.6 L886.0 198.8 L887.5 193.5 L889.0 188.9 L890.5 189.1 L892.0 194.8 L893.5 199.4 L895.0 192.2 L896.5 187.9 L898.0 187.0 L899.5 189.9 L901.0 191.9 L902.5 189.3 L904.0 181.8 L905.5 176.6 L907.0 179.6 L908.5 185.0 L910.0 187.8 L911.5 180.6 L913.0 172.8 L914.5 173.7 L916.0 174.2 L917.5 180.4 L919.0 174.6 L920.5 167.9 L922.0 165.1 L923.5 169.0 L925.0 169.6 L926.5 171.8 L928.0 165.3 L929.5 159.3 L931.0 162.9 L932.5 165.8 L934.0 173.8 L935.5 168.3 L937.0 164.1 L938.5 165.9 L940.0 170.2 L941.5 173.9 L943.0 179.0 L944.5 175.5 L946.0 170.4 L947.5 174.2 L949.0 179.9 L950.5 186.5 L952.0 180.2 L953.5 176.5 L955.0 181.3 L956.5 188.3 L958.0 195.1 L959.5 191.9 L961.0 187.1 L962.5 187.8 L964.0 193.3 L965.5 199.7 L967.0 202.3 L968.5 195.4 L970.0 192.9 L971.5 199.5 L973.0 200.1 L974.5 207.5 L976.0 198.9 L977.5 194.9 L979.0 192.5 L980.5 197.3 L982.0 202.3 L983.5 199.5 L985.0 188.8 L986.5 185.6 L988.0 186.8 L989.5 190.4 L991.0 191.8 L992.5 187.2 L994.0 180.2 L995.5 178.8 L997.0 181.9 L998.5 188.9 L1000.0 182.0 L1001.5 172.6 L1003.0 174.1 L1004.5 175.7 L1006.0 182.1 L1007.5 182.5 L1009.0 172.3 L1010.5 166.7 L1012.0 169.0 L1013.5 170.6 L1015.0 179.6 L1016.5 174.8 L1018.0 165.2 L1019.5 164.0 L1021.0 167.9 L1022.5 173.7 L1024.0 174.4 L1025.5 167.4 L1027.0 162.9 L1028.5 171.1 L1030.0 175.7 L1031.5 178.7 L1033.0 172.1 L1034.5 164.9 L1036.0 169.0 L1037.5 172.0 L1039.0 178.2 L1040.5 177.0 L1042.0 171.7 L1043.5 168.9 L1045.0 173.6 L1046.5 179.5 L1048.0 181.9 L1049.5 175.0 L1051.0 169.9 L1052.5 172.7 L1054.0 175.6 L1055.5 181.7 L1057.0 175.9 L1058.5 170.3 L1060.0 171.6 L1061.5 174.5 L1063.0 182.1 L1064.5 180.2 L1066.0 172.4 L1067.5 167.8 L1069.0 170.3 L1070.5 176.4 L1072.0 181.8 L1073.5 175.9 L1075.0 167.9 L1076.5 168.2 L1078.0 173.7 L1079.5 180.8 L1081.0 176.9 L1082.5 171.2 L1084.0 169.2 L1085.5 172.9 L1087.0 179.1 L1088.5 181.5 L1090.0 174.1 L1091.5 169.1 L1093.0 171.7 L1094.5 176.3 L1096.0 187.2 L1097.5 182.4 L1099.0 178.0 L1100.5 179.8 L1102.0 183.6 L1103.5 189.8 L1105.0 192.6 L1106.5 188.6 L1108.0 183.6 L1109.5 187.6 L1111.0 193.9 L1112.5 198.1 L1114.0 192.1 L1115.5 187.8 L1117.0 188.8 L1118.5 194.4 L1120.0 201.7 L1121.5 203.3 L1123.0 196.6 L1124.5 191.6 L1126.0 197.3 L1127.5 203.9 L1129.0 204.9 L1130.5 197.4 L1132.0 195.1 L1133.5 199.1 L1135.0 202.5 L1136.5 207.3 L1138.0 200.4 L1139.5 190.4 L1141.0 186.3 L1142.5 189.6 L1144.0 193.1 L1145.5 190.3 L1147.0 180.9 L1148.5 175.7 L1150.0 178.3 L1151.5 182.4 L1153.0 186.2 L1154.5 179.4 L1156.0 171.8 L1157.5 171.0 L1159.0 177.5 L1160.5 184.6 L1162.0 178.2 L1163.5 172.5 L1165.0 168.8 L1166.5 176.2 L1168.0 180.6 L1169.5 183.6 L1171.0 178.7 L1172.5 171.9 L1174.0 178.3 L1175.5 183.5 L1177.0 189.4 L1178.5 183.8 L1180.0 180.7 L1181.5 179.2 L1183.0 186.8 L1184.5 191.7 L1186.0 196.6 L1187.5 190.2 L1189.0 186.5 L1190.5 193.7 L1192.0 198.6 L1193.5 205.7 L1195.0 199.2 L1196.5 195.1 L1198.0 196.9 L1199.5 203.1 L1201.0 210.9 L1202.5 210.3 L1204.0 205.5 L1205.5 199.3 L1207.0 209.0 L1208.5 214.0 L1210.0 216.7 L1211.5 212.3 L1213.0 206.7 L1214.5 209.8 L1216.0 216.0 L1217.5 223.0 L1219.0 217.1 L1220.5 209.1 L1222.0 206.2 L1223.5 213.6 L1225.0 217.3 L1226.5 214.7 L1228.0 205.5 L1229.5 198.8 L1231.0 205.8 L1232.5 207.6 L1234.0 211.9 L1235.5 203.9 L1237.0 195.4 L1238.5 195.3 L1240.0 196.7 L1241.5 203.4 L1243.0 201.2 L1244.5 191.1 L1246.0 184.6 L1247.5 188.2 L1249.0 193.5 L1250.5 198.5 L1252.0 189.0 L1253.5 182.5 L1255.0 183.0 L1256.5 184.9 L1258.0 189.5 L1259.5 183.8 L1261.0 169.9 L1262.5 167.6 L1264.0 170.9 L1265.5 169.7 L1267.0 172.8 L1268.5 161.7 L1270.0 157.0 L1271.5 158.4 L1273.0 161.7" fill="none" stroke="#00ff00" stroke-width="1.1" shape-rendering="crispEdges"/>
<rect x="609.4" y="157" width="281.7" height="451.5" fill="#0000ff" fill-opacity="0.4"/>
<line x1="609.5" y1="157" x2="609.5" y2="608.5" stroke="#0000ff" stroke-width="1.3"/>
<line x1="891.5" y1="157" x2="891.5" y2="608.5" stroke="#0000ff" stroke-width="1.3"/>
<line x1="282.5" y1="157" x2="282.5" y2="608.5" stroke="#999" stroke-width="1.2"/>
<line x1="282" y1="608.5" x2="1274" y2="608.5" stroke="#999" stroke-width="1.2"/>
<line x1="377.3" y1="604" x2="377.3" y2="608" stroke="#ccc" stroke-width="1"/>
<line x1="474.6" y1="604" x2="474.6" y2="608" stroke="#ccc" stroke-width="1"/>
<line x1="571.8" y1="604" x2="571.8" y2="608" stroke="#ccc" stroke-width="1"/>
<line x1="669.1" y1="604" x2="669.1" y2="608" stroke="#ccc" stroke-width="1"/>
<line x1="766.3" y1="604" x2="766.3" y2="608" stroke="#ccc" stroke-width="1"/>
<line x1="863.5" y1="604" x2="863.5" y2="608" stroke="#ccc" stroke-width="1"/>
<line x1="960.8" y1="604" x2="960.8" y2="608" stroke="#ccc" stroke-width="1"/>
<line x1="1058.0" y1="604" x2="1058.0" y2="608" stroke="#ccc" stroke-width="1"/>
<line x1="1155.3" y1="604" x2="1155.3" y2="608" stroke="#ccc" stroke-width="1"/>
<rect x="565" y="168.5" width="88" height="25" fill="#ffff99" fill-opacity="0.8" stroke="#888" stroke-width="1"/>
<rect x="342.7" y="534.4" width="60.4" height="25" fill="#ff0000" fill-opacity="0.78" stroke="#666" stroke-width="1"/>
</svg>
<div class="t" style="left:569.50px;top:175.23px;font-size:14.5px;color:#000;font-weight:normal;letter-spacing:-0.30px;">Obs.: Task 1</div>
<div class="t" style="left:347.70px;top:540.53px;font-size:14.5px;color:#000;font-weight:normal;">Event X</div>
<div class="t" style="left:-322.50px;width:600px;text-align:right;top:576.83px;font-size:14.5px;color:#999999;font-weight:normal;">1</div>
<div class="t" style="left:-322.50px;width:600px;text-align:right;top:549.83px;font-size:14.5px;color:#999999;font-weight:normal;">2</div>
<div class="t" style="left:-322.50px;width:600px;text-align:right;top:522.83px;font-size:14.5px;color:#999999;font-weight:normal;">3</div>
<div class="t" style="left:-322.50px;width:600px;text-align:right;top:496.83px;font-size:14.5px;color:#999999;font-weight:normal;">4</div>
<div class="t" style="left:-322.50px;width:600px;text-align:right;top:469.83px;font-size:14.5px;color:#999999;font-weight:normal;">5</div>
<div class="t" style="left:-322.50px;width:600px;text-align:right;top:442.83px;font-size:14.5px;color:#999999;font-weight:normal;">6</div>
<div class="t" style="left:-322.50px;width:600px;text-align:right;top:415.83px;font-size:14.5px;color:#999999;font-weight:normal;">7</div>
<div class="t" style="left:-322.50px;width:600px;text-align:right;top:388.83px;font-size:14.5px;color:#999999;font-weight:normal;">8</div>
<div class="t" style="left:-322.50px;width:600px;text-align:right;top:362.83px;font-size:14.5px;color:#999999;font-weight:normal;">9</div>
<div class="t" style="left:-322.50px;width:600px;text-align:right;top:335.83px;font-size:14.5px;color:#999999;font-weight:normal;">10</div>
<div class="t" style="left:-322.50px;width:600px;text-align:right;top:308.83px;font-size:14.5px;color:#999999;font-weight:normal;">11</div>
<div class="t" style="left:-322.50px;width:600px;text-align:right;top:281.83px;font-size:14.5px;color:#999999;font-weight:normal;">12</div>
<div class="t" style="left:-322.50px;width:600px;text-align:right;top:254.83px;font-size:14.5px;color:#999999;font-weight:normal;">13</div>
<div class="t" style="left:-322.50px;width:600px;text-align:right;top:228.83px;font-size:14.5px;color:#999999;font-weight:normal;">14</div>
<div class="t" style="left:-322.50px;width:600px;text-align:right;top:201.83px;font-size:14.5px;color:#999999;font-weight:normal;">15</div>
<div class="t" style="left:-322.50px;width:600px;text-align:right;top:174.83px;font-size:14.5px;color:#999999;font-weight:normal;">16</div>
<div class="t" style="left:235.2px;top:380.6px;width:0;height:0;"><div style="position:absolute;left:-200px;top:-8px;width:400px;text-align:center;transform:rotate(-90deg);font-size:14.5px;color:#999;line-height:16px;">Channel # (x1e-06)</div></div>
<div class="t" style="left:77.34px;width:600px;text-align:center;top:609.53px;font-size:14.5px;color:#999999;font-weight:normal;">0.2</div>
<div class="t" style="left:174.58px;width:600px;text-align:center;top:609.53px;font-size:14.5px;color:#999999;font-weight:normal;">0.4</div>
<div class="t" style="left:271.82px;width:600px;text-align:center;top:609.53px;font-size:14.5px;color:#999999;font-weight:normal;">0.6</div>
<div class="t" style="left:369.06px;width:600px;text-align:center;top:609.53px;font-size:14.5px;color:#999999;font-weight:normal;">0.8</div>
<div class="t" style="left:466.30px;width:600px;text-align:center;top:609.53px;font-size:14.5px;color:#999999;font-weight:normal;">1</div>
<div class="t" style="left:563.54px;width:600px;text-align:center;top:609.53px;font-size:14.5px;color:#999999;font-weight:normal;">1.2</div>
<div class="t" style="left:660.78px;width:600px;text-align:center;top:609.53px;font-size:14.5px;color:#999999;font-weight:normal;">1.4</div>
<div class="t" style="left:758.02px;width:600px;text-align:center;top:609.53px;font-size:14.5px;color:#999999;font-weight:normal;">1.6</div>
<div class="t" style="left:855.26px;width:600px;text-align:center;top:609.53px;font-size:14.5px;color:#999999;font-weight:normal;">1.8</div>
<div class="t" style="left:952.50px;width:600px;text-align:center;top:609.53px;font-size:14.5px;color:#999999;font-weight:normal;">2</div>
<div class="t" style="left:478.30px;width:600px;text-align:center;top:633.73px;font-size:14.5px;color:#999999;font-weight:normal;">Time (sec)</div>
<div style="position:absolute;left:999px;top:283px;width:284px;height:443px;border-radius:5px 5px 0 0;box-shadow:0 3px 14px 3px rgba(0,0,0,0.32);background:#efefef;"></div>
<div style="position:absolute;left:999px;top:283px;width:284px;height:30px;border-radius:5px 5px 0 0;background:linear-gradient(#504e49,#3e3d39);"></div>
<div class="t" style="left:840.00px;width:600px;text-align:center;top:290.73px;font-size:14.5px;color:#dfdbd2;font-weight:bold;">Select Regions:</div>
<div style="position:absolute;left:1261px;top:290px;width:16px;height:16px;border-radius:50%;background:radial-gradient(circle at 50% 35%,#f07a4c,#d2491b);box-shadow:0 0 1px #2a2a2a"></div>
<svg style="position:absolute;left:1261px;top:290px" width="16" height="16"><path d="M5 5 L11 11 M11 5 L5 11" stroke="#3a2a20" stroke-width="1.2"/></svg>
<div style="position:absolute;left:1010px;top:324px;width:262px;height:360px;box-sizing:border-box;border:1px solid #b5b5b5;background:#fff;"></div>
<div style="position:absolute;left:1031px;top:325px;width:226px;height:17px;box-sizing:border-box;border:1px solid #a9c9e6;background:#e6f1fb;"></div>
<div style="position:absolute;left:1014px;top:326px;width:14px;height:14px;box-sizing:border-box;border:1px solid #a9a9a9;background:#fff;"></div>
<svg style="position:absolute;left:1014px;top:326px" width="14" height="14"><path d="M2.8 6.4 L6.3 11.2 L10.9 3" fill="none" stroke="#111" stroke-width="1.8"/></svg>
<div class="t" style="left:1034.50px;top:326.83px;font-size:14.5px;color:#000;font-weight:normal;letter-spacing:0.52px;">Left-Cerebral-White-Matter</div>
<div style="position:absolute;left:1014px;top:343px;width:14px;height:14px;box-sizing:border-box;border:1px solid #a9a9a9;background:#fff;"></div>
<svg style="position:absolute;left:1014px;top:343px" width="14" height="14"><path d="M2.8 6.4 L6.3 11.2 L10.9 3" fill="none" stroke="#111" stroke-width="1.8"/></svg>
<div class="t" style="left:1034.50px;top:343.83px;font-size:14.5px;color:#000;font-weight:normal;letter-spacing:0.30px;">Right-Amygdala</div>
<div style="position:absolute;left:1014px;top:360px;width:14px;height:14px;box-sizing:border-box;border:1px solid #a9a9a9;background:#fff;"></div>
<svg style="position:absolute;left:1014px;top:360px" width="14" height="14"><path d="M2.8 6.4 L6.3 11.2 L10.9 3" fill="none" stroke="#111" stroke-width="1.8"/></svg>
<div class="t" style="left:1034.50px;top:360.83px;font-size:14.5px;color:#000;font-weight:normal;letter-spacing:0.48px;">Right-Cerebral-White-Matter</div>
<div style="position:absolute;left:1014px;top:377px;width:14px;height:14px;box-sizing:border-box;border:1px solid #a9a9a9;background:#fff;"></div>
<svg style="position:absolute;left:1014px;top:377px" width="14" height="14"><path d="M2.8 6.4 L6.3 11.2 L10.9 3" fill="none" stroke="#111" stroke-width="1.8"/></svg>
<div class="t" style="left:1034.50px;top:377.83px;font-size:14.5px;color:#000;font-weight:normal;letter-spacing:0.35px;">Right-Hippocampus</div>
<div style="position:absolute;left:1014px;top:394px;width:14px;height:14px;box-sizing:border-box;border:1px solid #a9a9a9;background:#fff;"></div>
<svg style="position:absolute;left:1014px;top:394px" width="14" height="14"><path d="M2.8 6.4 L6.3 11.2 L10.9 3" fill="none" stroke="#111" stroke-width="1.8"/></svg>
<div class="t" style="left:1034.50px;top:394.83px;font-size:14.5px;color:#000;font-weight:normal;letter-spacing:0.46px;">Unknown</div>
<div style="position:absolute;left:1014px;top:411px;width:14px;height:14px;box-sizing:border-box;border:1px solid #a9a9a9;background:#fff;"></div>
<svg style="position:absolute;left:1014px;top:411px" width="14" height="14"><path d="M2.8 6.4 L6.3 11.2 L10.9 3" fill="none" stroke="#111" stroke-width="1.8"/></svg>
<div class="t" style="left:1034.50px;top:411.83px;font-size:14.5px;color:#000;font-weight:normal;letter-spacing:0.49px;">WM-hypointensities</div>
<div style="position:absolute;left:1014px;top:428px;width:14px;height:14px;box-sizing:border-box;border:1px solid #a9a9a9;background:#fff;"></div>
<svg style="position:absolute;left:1014px;top:428px" width="14" height="14"><path d="M2.8 6.4 L6.3 11.2 L10.9 3" fill="none" stroke="#111" stroke-width="1.8"/></svg>
<div class="t" style="left:1034.50px;top:428.83px;font-size:14.5px;color:#000;font-weight:normal;letter-spacing:0.01px;">ctx_rh_G_Ins_lg_and_S_cent_ins</div>
<div style="position:absolute;left:1014px;top:445px;width:14px;height:14px;box-sizing:border-box;border:1px solid #a9a9a9;background:#fff;"></div>
<svg style="position:absolute;left:1014px;top:445px" width="14" height="14"><path d="M2.8 6.4 L6.3 11.2 L10.9 3" fill="none" stroke="#111" stroke-width="1.8"/></svg>
<div class="t" style="left:1034.50px;top:445.83px;font-size:14.5px;color:#000;font-weight:normal;letter-spacing:0.04px;">ctx_rh_G_and_S_cingul-Ant</div>
<div style="position:absolute;left:1014px;top:462px;width:14px;height:14px;box-sizing:border-box;border:1px solid #a9a9a9;background:#fff;"></div>
<svg style="position:absolute;left:1014px;top:462px" width="14" height="14"><path d="M2.8 6.4 L6.3 11.2 L10.9 3" fill="none" stroke="#111" stroke-width="1.8"/></svg>
<div class="t" style="left:1034.50px;top:462.83px;font-size:14.5px;color:#000;font-weight:normal;letter-spacing:0.18px;">ctx_rh_G_and_S_cingul-Mid-Ant</div>
<div style="position:absolute;left:1014px;top:479px;width:14px;height:14px;box-sizing:border-box;border:1px solid #a9a9a9;background:#fff;"></div>
<svg style="position:absolute;left:1014px;top:479px" width="14" height="14"><path d="M2.8 6.4 L6.3 11.2 L10.9 3" fill="none" stroke="#111" stroke-width="1.8"/></svg>
<div class="t" style="left:1034.50px;top:479.83px;font-size:14.5px;color:#000;font-weight:normal;letter-spacing:0.41px;">ctx_rh_G_front_inf-Opercular</div>
<div style="position:absolute;left:1014px;top:496px;width:14px;height:14px;box-sizing:border-box;border:1px solid #a9a9a9;background:#fff;"></div>
<svg style="position:absolute;left:1014px;top:496px" width="14" height="14"><path d="M2.8 6.4 L6.3 11.2 L10.9 3" fill="none" stroke="#111" stroke-width="1.8"/></svg>
<div class="t" style="left:1034.50px;top:496.83px;font-size:14.5px;color:#000;font-weight:normal;letter-spacing:0.28px;">ctx_rh_G_insular_short</div>
<div style="position:absolute;left:1014px;top:513px;width:14px;height:14px;box-sizing:border-box;border:1px solid #a9a9a9;background:#fff;"></div>
<svg style="position:absolute;left:1014px;top:513px" width="14" height="14"><path d="M2.8 6.4 L6.3 11.2 L10.9 3" fill="none" stroke="#111" stroke-width="1.8"/></svg>
<div class="t" style="left:1034.50px;top:513.83px;font-size:14.5px;color:#000;font-weight:normal;letter-spacing:0.39px;">ctx_rh_G_temporal_middle</div>
<div style="position:absolute;left:1014px;top:530px;width:14px;height:14px;box-sizing:border-box;border:1px solid #a9a9a9;background:#fff;"></div>
<svg style="position:absolute;left:1014px;top:530px" width="14" height="14"><path d="M2.8 6.4 L6.3 11.2 L10.9 3" fill="none" stroke="#111" stroke-width="1.8"/></svg>
<div class="t" style="left:1034.50px;top:530.83px;font-size:14.5px;color:#000;font-weight:normal;letter-spacing:0.14px;">ctx_rh_S_circular_insula_sup</div>
<div style="position:absolute;left:1014px;top:547px;width:14px;height:14px;box-sizing:border-box;border:1px solid #a9a9a9;background:#fff;"></div>
<svg style="position:absolute;left:1014px;top:547px" width="14" height="14"><path d="M2.8 6.4 L6.3 11.2 L10.9 3" fill="none" stroke="#111" stroke-width="1.8"/></svg>
<div class="t" style="left:1034.50px;top:547.83px;font-size:14.5px;color:#000;font-weight:normal;letter-spacing:0.44px;">ctx_rh_S_front_middle</div>
<div style="position:absolute;left:1014px;top:564px;width:14px;height:14px;box-sizing:border-box;border:1px solid #a9a9a9;background:#fff;"></div>
<svg style="position:absolute;left:1014px;top:564px" width="14" height="14"><path d="M2.8 6.4 L6.3 11.2 L10.9 3" fill="none" stroke="#111" stroke-width="1.8"/></svg>
<div class="t" style="left:1034.50px;top:564.83px;font-size:14.5px;color:#000;font-weight:normal;letter-spacing:0.20px;">ctx_rh_S_pericallosal</div>
<div style="position:absolute;left:1014px;top:581px;width:14px;height:14px;box-sizing:border-box;border:1px solid #a9a9a9;background:#fff;"></div>
<svg style="position:absolute;left:1014px;top:581px" width="14" height="14"><path d="M2.8 6.4 L6.3 11.2 L10.9 3" fill="none" stroke="#111" stroke-width="1.8"/></svg>
<div class="t" style="left:1034.50px;top:581.83px;font-size:14.5px;color:#000;font-weight:normal;letter-spacing:0.65px;">entorhinal</div>
<div style="position:absolute;left:1014px;top:598px;width:14px;height:14px;box-sizing:border-box;border:1px solid #a9a9a9;background:#fff;"></div>
<svg style="position:absolute;left:1014px;top:598px" width="14" height="14"><path d="M2.8 6.4 L6.3 11.2 L10.9 3" fill="none" stroke="#111" stroke-width="1.8"/></svg>
<div class="t" style="left:1034.50px;top:598.83px;font-size:14.5px;color:#000;font-weight:normal;letter-spacing:0.76px;">fusiform</div>
<div style="position:absolute;left:1014px;top:615px;width:14px;height:14px;box-sizing:border-box;border:1px solid #a9a9a9;background:#fff;"></div>
<svg style="position:absolute;left:1014px;top:615px" width="14" height="14"><path d="M2.8 6.4 L6.3 11.2 L10.9 3" fill="none" stroke="#111" stroke-width="1.8"/></svg>
<div class="t" style="left:1034.50px;top:615.83px;font-size:14.5px;color:#000;font-weight:normal;letter-spacing:0.71px;">inferiorparietal</div>
<div style="position:absolute;left:1014px;top:632px;width:14px;height:14px;box-sizing:border-box;border:1px solid #a9a9a9;background:#fff;"></div>
<svg style="position:absolute;left:1014px;top:632px" width="14" height="14"><path d="M2.8 6.4 L6.3 11.2 L10.9 3" fill="none" stroke="#111" stroke-width="1.8"/></svg>
<div class="t" style="left:1034.50px;top:632.83px;font-size:14.5px;color:#000;font-weight:normal;letter-spacing:0.75px;">inferiortemporal</div>
<div style="position:absolute;left:1014px;top:649px;width:14px;height:14px;box-sizing:border-box;border:1px solid #a9a9a9;background:#fff;"></div>
<svg style="position:absolute;left:1014px;top:649px" width="14" height="14"><path d="M2.8 6.4 L6.3 11.2 L10.9 3" fill="none" stroke="#111" stroke-width="1.8"/></svg>
<div class="t" style="left:1034.50px;top:649.83px;font-size:14.5px;color:#000;font-weight:normal;letter-spacing:0.82px;">lateralorbitofrontal</div>
<div style="position:absolute;left:1014px;top:666px;width:14px;height:14px;box-sizing:border-box;border:1px solid #a9a9a9;background:#fff;"></div>
<svg style="position:absolute;left:1014px;top:666px" width="14" height="14"><path d="M2.8 6.4 L6.3 11.2 L10.9 3" fill="none" stroke="#111" stroke-width="1.8"/></svg>
<div class="t" style="left:1034.50px;top:666.83px;font-size:14.5px;color:#000;font-weight:normal;letter-spacing:0.83px;">medialorbitofrontal</div>
<div style="position:absolute;left:1257px;top:325px;width:14px;height:358px;background:#f6f6f6;border-left:1px solid #d4d4d4;box-sizing:border-box;"></div>
<div style="position:absolute;left:1258px;top:555px;width:13px;height:114px;background:#e1e1e1;border-top:1px solid #cbcbcb;border-right:1px solid #d0d0d0;box-sizing:border-box;"></div>
<div style="position:absolute;left:1258px;top:325px;width:13px;height:13px;background:#fbfbfb;border-bottom:1px solid #d4d4d4;box-sizing:border-box;"></div>
<div style="position:absolute;left:1258px;top:669px;width:13px;height:14px;background:#fbfbfb;border-top:1px solid #d4d4d4;box-sizing:border-box;"></div>
<div class="arr" style="left:1260.5px;top:329.5px;border-left-width:4px;border-right-width:4px;border-top:0;border-bottom:4px solid #666;"></div>
<div class="arr" style="left:1260.5px;top:674px;border-left-width:4px;border-right-width:4px;border-top:4px solid #666;"></div>
<div class="btn" style="left:1010px;top:690px;width:80px;height:25px;border-color:#3574ab;background:linear-gradient(#eff4f9,#d8e3ed);"></div>
<div class="t" style="left:750.00px;width:600px;text-align:center;top:696.13px;font-size:14.5px;color:#000;font-weight:normal;">OK</div>
<div class="btn" style="left:1096px;top:690px;width:80px;height:25px;"></div>
<div class="t" style="left:836.00px;width:600px;text-align:center;top:696.13px;font-size:14.5px;color:#000;font-weight:normal;letter-spacing:0.33px;">Select All</div>
<div class="btn" style="left:1182px;top:690px;width:90px;height:25px;"></div>
<div class="t" style="left:927.00px;width:600px;text-align:center;top:696.13px;font-size:14.5px;color:#000;font-weight:normal;letter-spacing:0.39px;">Unselect All</div>
</body></html>
